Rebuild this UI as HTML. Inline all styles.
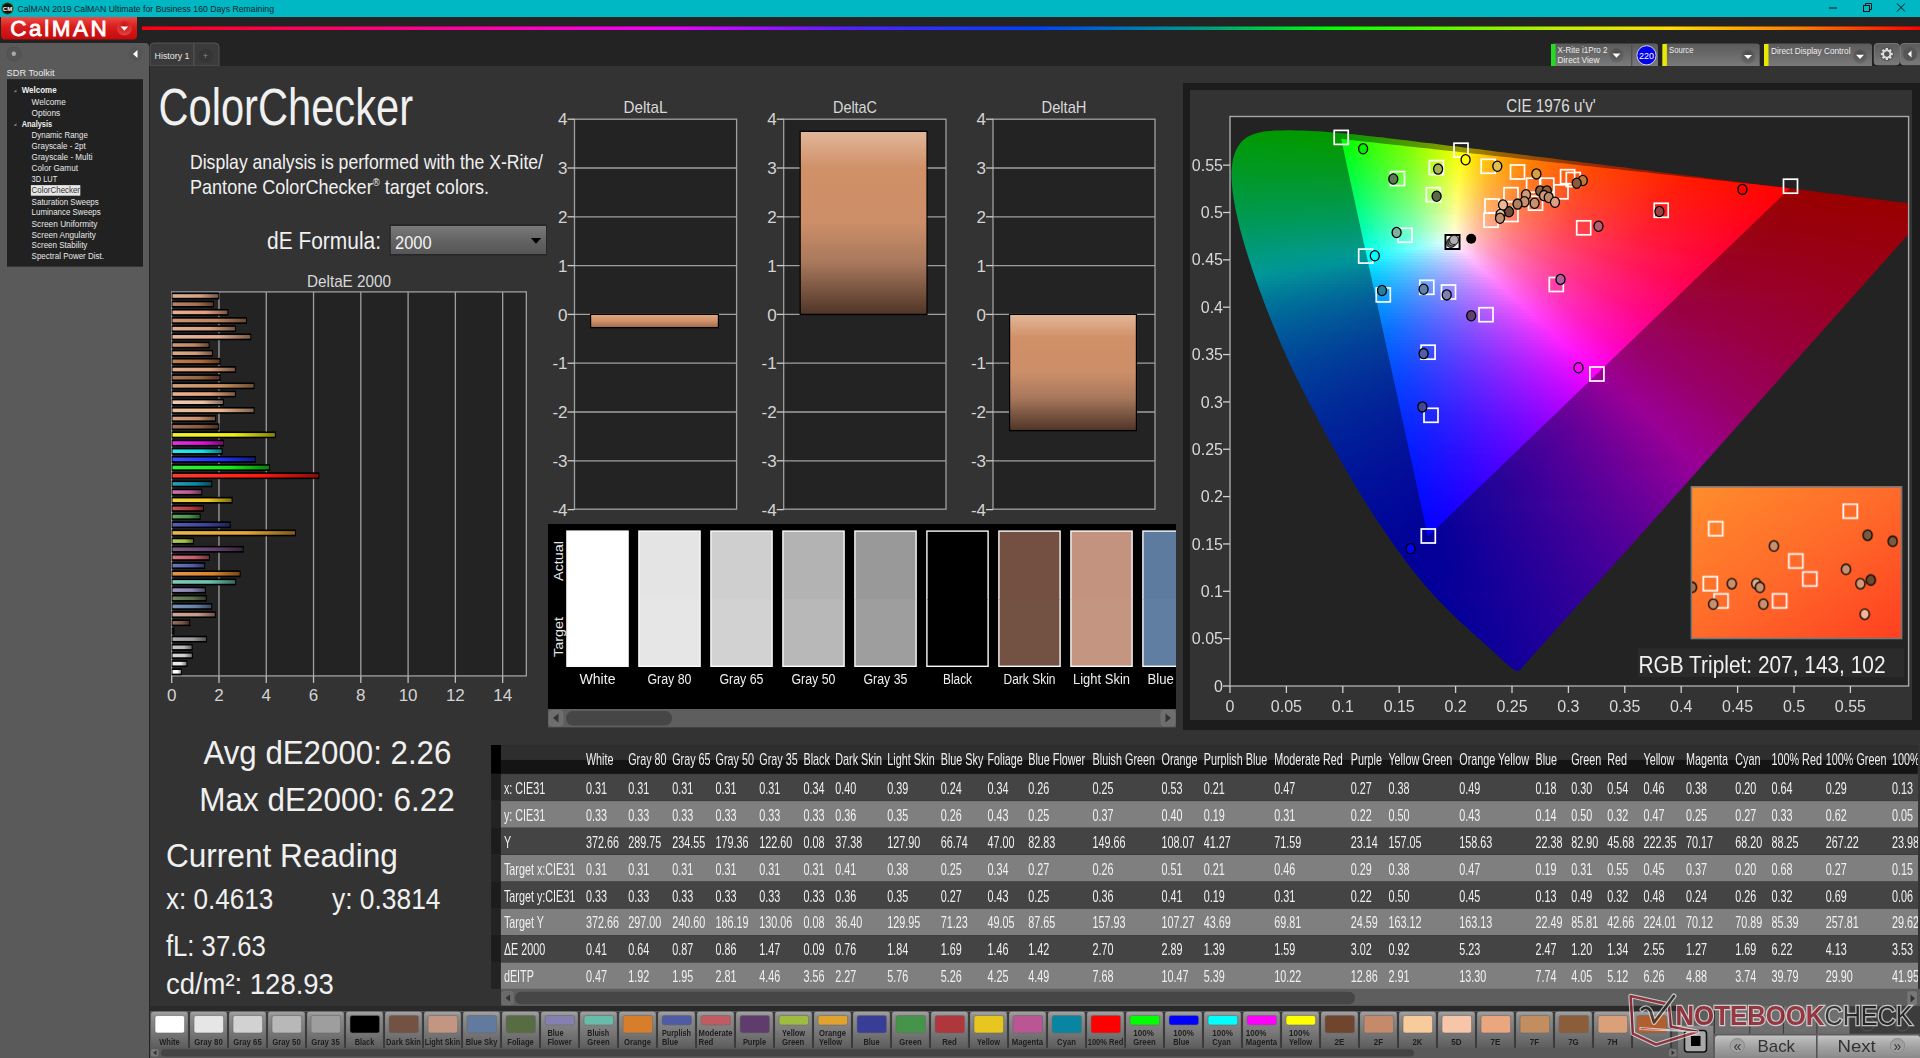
<!DOCTYPE html>
<html><head><meta charset="utf-8"><style>
html,body{margin:0;padding:0;background:#232323;overflow:hidden;width:1920px;height:1058px}
svg{display:block;font-family:"Liberation Sans", sans-serif;transform:translateZ(0)}
</style></head><body>
<svg width="1920" height="1058" viewBox="0 0 1920 1058"><defs><linearGradient id="gRed" x1="0" y1="0" x2="0" y2="1"><stop offset="0" stop-color="#ee4a44"/><stop offset="0.45" stop-color="#d81c1c"/><stop offset="1" stop-color="#c40a0a"/></linearGradient><radialGradient id="gRedBtn" cx="0.5" cy="0.35" r="0.6"><stop offset="0" stop-color="#c81010"/><stop offset="1" stop-color="#e04040"/></radialGradient><linearGradient id="gRain" x1="142" y1="0" x2="1920" y2="0" gradientUnits="userSpaceOnUse"><stop offset="0" stop-color="#ff0010"/><stop offset="0.22" stop-color="#ff00c0"/><stop offset="0.3" stop-color="#ee00ff"/><stop offset="0.4" stop-color="#5020ff"/><stop offset="0.5" stop-color="#0040ff"/><stop offset="0.6" stop-color="#00a080"/><stop offset="0.67" stop-color="#00ff00"/><stop offset="0.8" stop-color="#c0ee00"/><stop offset="0.86" stop-color="#ffdd00"/><stop offset="0.93" stop-color="#ff8000"/><stop offset="1" stop-color="#ff0000"/></linearGradient><linearGradient id="gTool" x1="0" y1="0" x2="0" y2="1"><stop offset="0" stop-color="#5a5a5a"/><stop offset="1" stop-color="#7a7a7a"/></linearGradient><radialGradient id="gDD" cx="0.5" cy="0.3" r="0.7"><stop offset="0" stop-color="#4a4a4a"/><stop offset="1" stop-color="#6a6a6a"/></radialGradient><linearGradient id="gDrop" x1="0" y1="0" x2="0" y2="1"><stop offset="0" stop-color="#7a7a7a"/><stop offset="0.5" stop-color="#646464"/><stop offset="1" stop-color="#565656"/></linearGradient><linearGradient id="gb0" x1="0" y1="0" x2="1" y2="0"><stop offset="0" stop-color="#ffffff"/><stop offset="0.6" stop-color="#ffffff"/><stop offset="1" stop-color="#8c8c8c"/></linearGradient><linearGradient id="gb1" x1="0" y1="0" x2="1" y2="0"><stop offset="0" stop-color="#e9e9e9"/><stop offset="0.6" stop-color="#e6e6e6"/><stop offset="1" stop-color="#7e7e7e"/></linearGradient><linearGradient id="gb2" x1="0" y1="0" x2="1" y2="0"><stop offset="0" stop-color="#d7d7d7"/><stop offset="0.6" stop-color="#d0d0d0"/><stop offset="1" stop-color="#727272"/></linearGradient><linearGradient id="gb3" x1="0" y1="0" x2="1" y2="0"><stop offset="0" stop-color="#c2c2c2"/><stop offset="0.6" stop-color="#b8b8b8"/><stop offset="1" stop-color="#656565"/></linearGradient><linearGradient id="gb4" x1="0" y1="0" x2="1" y2="0"><stop offset="0" stop-color="#aaaaaa"/><stop offset="0.6" stop-color="#9c9c9c"/><stop offset="1" stop-color="#555555"/></linearGradient><linearGradient id="gb5" x1="0" y1="0" x2="1" y2="0"><stop offset="0" stop-color="#343434"/><stop offset="0.6" stop-color="#111111"/><stop offset="1" stop-color="#090909"/></linearGradient><linearGradient id="gb6" x1="0" y1="0" x2="1" y2="0"><stop offset="0" stop-color="#8d6f61"/><stop offset="0.6" stop-color="#7a5646"/><stop offset="1" stop-color="#432f26"/></linearGradient><linearGradient id="gb7" x1="0" y1="0" x2="1" y2="0"><stop offset="0" stop-color="#cea998"/><stop offset="0.6" stop-color="#c69a86"/><stop offset="1" stop-color="#6c5449"/></linearGradient><linearGradient id="gb8" x1="0" y1="0" x2="1" y2="0"><stop offset="0" stop-color="#7c94b3"/><stop offset="0.6" stop-color="#6582a6"/><stop offset="1" stop-color="#37475b"/></linearGradient><linearGradient id="gb9" x1="0" y1="0" x2="1" y2="0"><stop offset="0" stop-color="#728560"/><stop offset="0.6" stop-color="#5a7045"/><stop offset="1" stop-color="#313d25"/></linearGradient><linearGradient id="gb10" x1="0" y1="0" x2="1" y2="0"><stop offset="0" stop-color="#9b98c0"/><stop offset="0.6" stop-color="#8a86b6"/><stop offset="1" stop-color="#4b4964"/></linearGradient><linearGradient id="gb11" x1="0" y1="0" x2="1" y2="0"><stop offset="0" stop-color="#80cbba"/><stop offset="0.6" stop-color="#6ac2ae"/><stop offset="1" stop-color="#3a6a5f"/></linearGradient><linearGradient id="gb12" x1="0" y1="0" x2="1" y2="0"><stop offset="0" stop-color="#e1964d"/><stop offset="0.6" stop-color="#dc842e"/><stop offset="1" stop-color="#794819"/></linearGradient><linearGradient id="gb13" x1="0" y1="0" x2="1" y2="0"><stop offset="0" stop-color="#6d77b8"/><stop offset="0.6" stop-color="#5460ac"/><stop offset="1" stop-color="#2e345e"/></linearGradient><linearGradient id="gb14" x1="0" y1="0" x2="1" y2="0"><stop offset="0" stop-color="#ce767e"/><stop offset="0.6" stop-color="#c65e68"/><stop offset="1" stop-color="#6c3339"/></linearGradient><linearGradient id="gb15" x1="0" y1="0" x2="1" y2="0"><stop offset="0" stop-color="#7b5c84"/><stop offset="0.6" stop-color="#64406f"/><stop offset="1" stop-color="#37233d"/></linearGradient><linearGradient id="gb16" x1="0" y1="0" x2="1" y2="0"><stop offset="0" stop-color="#afcb60"/><stop offset="0.6" stop-color="#a2c244"/><stop offset="1" stop-color="#596a25"/></linearGradient><linearGradient id="gb17" x1="0" y1="0" x2="1" y2="0"><stop offset="0" stop-color="#e8b550"/><stop offset="0.6" stop-color="#e4a832"/><stop offset="1" stop-color="#7d5c1b"/></linearGradient><linearGradient id="gb18" x1="0" y1="0" x2="1" y2="0"><stop offset="0" stop-color="#575eae"/><stop offset="0.6" stop-color="#3a42a0"/><stop offset="1" stop-color="#1f2458"/></linearGradient><linearGradient id="gb19" x1="0" y1="0" x2="1" y2="0"><stop offset="0" stop-color="#63a766"/><stop offset="0.6" stop-color="#48984c"/><stop offset="1" stop-color="#275329"/></linearGradient><linearGradient id="gb20" x1="0" y1="0" x2="1" y2="0"><stop offset="0" stop-color="#bf575c"/><stop offset="0.6" stop-color="#b43a40"/><stop offset="1" stop-color="#631f23"/></linearGradient><linearGradient id="gb21" x1="0" y1="0" x2="1" y2="0"><stop offset="0" stop-color="#eed143"/><stop offset="0.6" stop-color="#ecca22"/><stop offset="1" stop-color="#816f12"/></linearGradient><linearGradient id="gb22" x1="0" y1="0" x2="1" y2="0"><stop offset="0" stop-color="#c974a9"/><stop offset="0.6" stop-color="#c05c9a"/><stop offset="1" stop-color="#693254"/></linearGradient><linearGradient id="gb23" x1="0" y1="0" x2="1" y2="0"><stop offset="0" stop-color="#2e9bb3"/><stop offset="0.6" stop-color="#0a8aa6"/><stop offset="1" stop-color="#054b5b"/></linearGradient><linearGradient id="gb24" x1="0" y1="0" x2="1" y2="0"><stop offset="0" stop-color="#ff3c33"/><stop offset="0.6" stop-color="#ff1a10"/><stop offset="1" stop-color="#8c0e08"/></linearGradient><linearGradient id="gb25" x1="0" y1="0" x2="1" y2="0"><stop offset="0" stop-color="#33f033"/><stop offset="0.6" stop-color="#10ee10"/><stop offset="1" stop-color="#088208"/></linearGradient><linearGradient id="gb26" x1="0" y1="0" x2="1" y2="0"><stop offset="0" stop-color="#414fff"/><stop offset="0.6" stop-color="#2030ff"/><stop offset="1" stop-color="#111a8c"/></linearGradient><linearGradient id="gb27" x1="0" y1="0" x2="1" y2="0"><stop offset="0" stop-color="#33e4eb"/><stop offset="0.6" stop-color="#10e0e8"/><stop offset="1" stop-color="#087b7f"/></linearGradient><linearGradient id="gb28" x1="0" y1="0" x2="1" y2="0"><stop offset="0" stop-color="#e433e4"/><stop offset="0.6" stop-color="#e010e0"/><stop offset="1" stop-color="#7b087b"/></linearGradient><linearGradient id="gb29" x1="0" y1="0" x2="1" y2="0"><stop offset="0" stop-color="#f2f233"/><stop offset="0.6" stop-color="#f0f010"/><stop offset="1" stop-color="#848408"/></linearGradient><linearGradient id="gb30" x1="0" y1="0" x2="1" y2="0"><stop offset="0" stop-color="#9b7259"/><stop offset="0.6" stop-color="#8a5a3c"/><stop offset="1" stop-color="#4b3121"/></linearGradient><linearGradient id="gb31" x1="0" y1="0" x2="1" y2="0"><stop offset="0" stop-color="#d3a085"/><stop offset="0.6" stop-color="#cc9070"/><stop offset="1" stop-color="#704f3d"/></linearGradient><linearGradient id="gb32" x1="0" y1="0" x2="1" y2="0"><stop offset="0" stop-color="#ebbf9d"/><stop offset="0.6" stop-color="#e8b48c"/><stop offset="1" stop-color="#7f634d"/></linearGradient><linearGradient id="gb33" x1="0" y1="0" x2="1" y2="0"><stop offset="0" stop-color="#eec9b1"/><stop offset="0.6" stop-color="#ecc0a4"/><stop offset="1" stop-color="#81695a"/></linearGradient><linearGradient id="gb34" x1="0" y1="0" x2="1" y2="0"><stop offset="0" stop-color="#ebb18f"/><stop offset="0.6" stop-color="#e8a47c"/><stop offset="1" stop-color="#7f5a44"/></linearGradient><linearGradient id="gb35" x1="0" y1="0" x2="1" y2="0"><stop offset="0" stop-color="#d0a077"/><stop offset="0.6" stop-color="#c89060"/><stop offset="1" stop-color="#6e4f34"/></linearGradient><linearGradient id="gb36" x1="0" y1="0" x2="1" y2="0"><stop offset="0" stop-color="#a4795c"/><stop offset="0.6" stop-color="#946240"/><stop offset="1" stop-color="#513523"/></linearGradient><linearGradient id="gb37" x1="0" y1="0" x2="1" y2="0"><stop offset="0" stop-color="#e1ae8d"/><stop offset="0.6" stop-color="#dca07a"/><stop offset="1" stop-color="#795843"/></linearGradient><linearGradient id="gb38" x1="0" y1="0" x2="1" y2="0"><stop offset="0" stop-color="#bb8055"/><stop offset="0.6" stop-color="#b06a38"/><stop offset="1" stop-color="#603a1e"/></linearGradient><linearGradient id="gb39" x1="0" y1="0" x2="1" y2="0"><stop offset="0" stop-color="#daa98c"/><stop offset="0.6" stop-color="#d49a78"/><stop offset="1" stop-color="#745442"/></linearGradient><linearGradient id="gb40" x1="0" y1="0" x2="1" y2="0"><stop offset="0" stop-color="#cc9977"/><stop offset="0.6" stop-color="#c48860"/><stop offset="1" stop-color="#6b4a34"/></linearGradient><linearGradient id="gb41" x1="0" y1="0" x2="1" y2="0"><stop offset="0" stop-color="#e4b599"/><stop offset="0.6" stop-color="#e0a888"/><stop offset="1" stop-color="#7b5c4a"/></linearGradient><linearGradient id="gb42" x1="0" y1="0" x2="1" y2="0"><stop offset="0" stop-color="#ddae93"/><stop offset="0.6" stop-color="#d8a080"/><stop offset="1" stop-color="#765846"/></linearGradient><linearGradient id="gb43" x1="0" y1="0" x2="1" y2="0"><stop offset="0" stop-color="#c99677"/><stop offset="0.6" stop-color="#c08460"/><stop offset="1" stop-color="#694834"/></linearGradient><linearGradient id="gb44" x1="0" y1="0" x2="1" y2="0"><stop offset="0" stop-color="#e8ae93"/><stop offset="0.6" stop-color="#e4a080"/><stop offset="1" stop-color="#7d5846"/></linearGradient><linearGradient id="gb45" x1="0" y1="0" x2="1" y2="0"><stop offset="0" stop-color="#b5856a"/><stop offset="0.6" stop-color="#a87050"/><stop offset="1" stop-color="#5c3d2c"/></linearGradient><linearGradient id="gb46" x1="0" y1="0" x2="1" y2="0"><stop offset="0" stop-color="#ddae93"/><stop offset="0.6" stop-color="#d8a080"/><stop offset="1" stop-color="#765846"/></linearGradient><linearGradient id="gSkinBar" x1="0" y1="0" x2="0" y2="1"><stop offset="0" stop-color="#e2b698"/><stop offset="0.2" stop-color="#d09068"/><stop offset="0.5" stop-color="#cc8e68"/><stop offset="0.72" stop-color="#a8785c"/><stop offset="1" stop-color="#503628"/></linearGradient><linearGradient id="gSkinBarS" x1="0" y1="0" x2="0" y2="1"><stop offset="0" stop-color="#e0a880"/><stop offset="0.5" stop-color="#d09068"/><stop offset="1" stop-color="#a06e50"/></linearGradient><clipPath id="cpHS"><path d="M1519.7 670.3 L1519.6 670.3 L1519.5 670.4 L1519.4 670.5 L1519.2 670.6 L1519.1 670.7 L1518.9 670.8 L1518.7 670.9 L1518.4 670.9 L1518.2 671.0 L1517.9 671.0 L1517.5 671.0 L1517.1 670.9 L1516.7 670.9 L1516.1 670.8 L1515.5 670.6 L1514.5 670.0 L1513.2 669.1 L1511.7 668.0 L1509.9 666.5 L1507.6 664.6 L1504.7 662.0 L1501.3 658.9 L1497.8 655.7 L1494.7 652.8 L1492.3 650.6 L1490.1 648.7 L1488.0 646.8 L1485.6 644.6 L1482.9 642.2 L1480.0 639.6 L1476.9 636.9 L1473.7 634.0 L1470.4 631.0 L1466.9 627.8 L1463.2 624.5 L1459.4 620.9 L1455.3 617.0 L1451.0 612.8 L1446.5 608.4 L1441.7 603.5 L1436.9 598.4 L1431.8 593.0 L1426.4 587.0 L1420.6 580.0 L1414.2 572.0 L1407.3 563.2 L1400.1 553.5 L1392.5 543.0 L1384.7 531.6 L1376.4 519.4 L1368.0 506.3 L1359.4 492.5 L1350.5 477.7 L1341.5 462.1 L1332.4 445.9 L1323.4 429.5 L1314.5 412.8 L1305.6 395.7 L1296.9 378.4 L1288.8 361.5 L1281.3 344.7 L1274.3 328.0 L1267.7 311.7 L1261.8 296.1 L1256.4 281.3 L1251.5 267.1 L1247.2 253.6 L1243.4 241.1 L1240.2 229.5 L1237.7 218.9 L1235.6 209.2 L1233.9 200.1 L1232.7 191.9 L1232.0 184.5 L1231.6 177.8 L1231.6 171.6 L1232.0 165.9 L1232.7 160.8 L1233.8 156.2 L1235.2 152.0 L1237.0 148.3 L1239.0 145.0 L1241.3 142.1 L1243.9 139.6 L1246.6 137.5 L1249.6 135.8 L1252.8 134.4 L1256.1 133.3 L1259.5 132.4 L1263.1 131.7 L1266.8 131.3 L1270.6 130.9 L1274.5 130.6 L1278.4 130.5 L1282.5 130.4 L1286.5 130.3 L1290.5 130.3 L1294.5 130.4 L1298.5 130.4 L1302.6 130.6 L1306.7 130.7 L1310.8 130.9 L1315.1 131.2 L1319.4 131.4 L1323.8 131.7 L1328.2 132.1 L1332.8 132.4 L1337.5 132.8 L1342.2 133.3 L1347.1 133.8 L1352.0 134.3 L1357.1 134.8 L1362.3 135.3 L1367.7 135.9 L1373.1 136.5 L1378.7 137.2 L1384.5 137.8 L1390.4 138.5 L1396.5 139.2 L1402.7 140.0 L1409.1 140.7 L1415.6 141.5 L1422.3 142.4 L1429.2 143.2 L1436.3 144.1 L1443.5 145.0 L1450.9 145.9 L1458.5 146.8 L1466.3 147.8 L1474.3 148.8 L1482.4 149.8 L1490.8 150.8 L1499.3 151.9 L1508.0 153.0 L1516.9 154.1 L1525.9 155.3 L1535.2 156.4 L1544.6 157.6 L1554.1 158.8 L1563.8 160.0 L1573.7 161.3 L1583.7 162.5 L1593.8 163.8 L1604.0 165.0 L1614.2 166.3 L1624.6 167.6 L1634.9 168.9 L1645.2 170.2 L1654.4 171.4 L1663.1 172.5 L1672.8 173.7 L1685.1 175.3 L1701.6 177.3 L1721.1 179.7 L1741.1 182.2 L1759.2 184.5 L1775.2 186.5 L1790.1 188.4 L1804.0 190.1 L1816.9 191.8 L1828.5 193.2 L1839.0 194.5 L1848.7 195.8 L1857.7 196.9 L1866.2 198.0 L1874.0 198.9 L1881.2 199.8 L1887.7 200.7 L1893.5 201.4 L1898.7 202.0 L1903.2 202.6 L1907.4 203.1 L1910.9 203.5 L1913.8 203.9 L1916.4 204.2 L1919.1 204.6 L1921.9 204.9 L1924.6 205.3 L1927.2 205.6 L1929.2 205.9 L1930.8 206.0 L1931.9 206.2 L1932.6 206.3 L1933.2 206.4 Z"/></clipPath><clipPath id="cpPlot"><rect x="1230.0" y="116.5" width="678.5999999999999" height="569.5"/></clipPath><clipPath id="cpTri"><path d="M1341.2 138.9 L1789.9 188.3 L1427.9 536.5 Z"/></clipPath><linearGradient id="o0" gradientUnits="userSpaceOnUse" x1="1261" y1="0" x2="1325" y2="0"><stop offset="0.000" stop-color="#009900"/><stop offset="1.000" stop-color="#009900"/></linearGradient><linearGradient id="o1" gradientUnits="userSpaceOnUse" x1="1249" y1="0" x2="1359" y2="0"><stop offset="0.000" stop-color="#009903"/><stop offset="0.845" stop-color="#029900"/><stop offset="1.000" stop-color="#139900"/></linearGradient><linearGradient id="o2" gradientUnits="userSpaceOnUse" x1="1243" y1="0" x2="1386" y2="0"><stop offset="0.000" stop-color="#009906"/><stop offset="0.692" stop-color="#019900"/><stop offset="1.000" stop-color="#309900"/></linearGradient><linearGradient id="o3" gradientUnits="userSpaceOnUse" x1="1239" y1="0" x2="1411" y2="0"><stop offset="0.000" stop-color="#009908"/><stop offset="0.610" stop-color="#039900"/><stop offset="1.000" stop-color="#4e9900"/></linearGradient><linearGradient id="o4" gradientUnits="userSpaceOnUse" x1="1237" y1="0" x2="1436" y2="0"><stop offset="0.000" stop-color="#00990b"/><stop offset="0.543" stop-color="#039902"/><stop offset="0.935" stop-color="#5e9900"/><stop offset="1.000" stop-color="#709900"/></linearGradient><linearGradient id="o5" gradientUnits="userSpaceOnUse" x1="1235" y1="0" x2="1460" y2="0"><stop offset="0.000" stop-color="#00990e"/><stop offset="0.493" stop-color="#039905"/><stop offset="0.840" stop-color="#5f9900"/><stop offset="1.000" stop-color="#969900"/></linearGradient><linearGradient id="o6" gradientUnits="userSpaceOnUse" x1="1233" y1="0" x2="1484" y2="0"><stop offset="0.000" stop-color="#009910"/><stop offset="0.454" stop-color="#049908"/><stop offset="0.753" stop-color="#5c9900"/><stop offset="0.908" stop-color="#989900"/><stop offset="1.000" stop-color="#997900"/></linearGradient><linearGradient id="o7" gradientUnits="userSpaceOnUse" x1="1232" y1="0" x2="1508" y2="0"><stop offset="0.000" stop-color="#009913"/><stop offset="0.413" stop-color="#02990b"/><stop offset="0.685" stop-color="#5b9903"/><stop offset="0.837" stop-color="#999600"/><stop offset="0.989" stop-color="#996200"/><stop offset="1.000" stop-color="#995f00"/></linearGradient><linearGradient id="o8" gradientUnits="userSpaceOnUse" x1="1231" y1="0" x2="1532" y2="0"><stop offset="0.000" stop-color="#009915"/><stop offset="0.389" stop-color="#04990e"/><stop offset="0.638" stop-color="#5e9906"/><stop offset="0.767" stop-color="#999702"/><stop offset="0.907" stop-color="#996200"/><stop offset="1.000" stop-color="#994c00"/></linearGradient><linearGradient id="o9" gradientUnits="userSpaceOnUse" x1="1230" y1="0" x2="1556" y2="0"><stop offset="0.000" stop-color="#009918"/><stop offset="0.359" stop-color="#029911"/><stop offset="0.589" stop-color="#5c990a"/><stop offset="0.709" stop-color="#999806"/><stop offset="0.828" stop-color="#996600"/><stop offset="1.000" stop-color="#993e00"/></linearGradient><linearGradient id="o10" gradientUnits="userSpaceOnUse" x1="1229" y1="0" x2="1580" y2="0"><stop offset="0.000" stop-color="#00991a"/><stop offset="0.342" stop-color="#039914"/><stop offset="0.556" stop-color="#5f990e"/><stop offset="0.658" stop-color="#99990a"/><stop offset="0.778" stop-color="#996303"/><stop offset="0.966" stop-color="#993700"/><stop offset="1.000" stop-color="#993200"/></linearGradient><linearGradient id="o11" gradientUnits="userSpaceOnUse" x1="1229" y1="0" x2="1604" y2="0"><stop offset="0.000" stop-color="#00991d"/><stop offset="0.320" stop-color="#039917"/><stop offset="0.512" stop-color="#5b9912"/><stop offset="0.616" stop-color="#99990e"/><stop offset="0.720" stop-color="#996506"/><stop offset="0.888" stop-color="#993a00"/><stop offset="1.000" stop-color="#992800"/></linearGradient><linearGradient id="o12" gradientUnits="userSpaceOnUse" x1="1228" y1="0" x2="1628" y2="0"><stop offset="0.000" stop-color="#00991f"/><stop offset="0.307" stop-color="#04991a"/><stop offset="0.487" stop-color="#5d9915"/><stop offset="0.585" stop-color="#999511"/><stop offset="0.682" stop-color="#996309"/><stop offset="0.848" stop-color="#993701"/><stop offset="1.000" stop-color="#992000"/></linearGradient><linearGradient id="o13" gradientUnits="userSpaceOnUse" x1="1228" y1="0" x2="1651" y2="0"><stop offset="0.000" stop-color="#009922"/><stop offset="0.291" stop-color="#03991d"/><stop offset="0.461" stop-color="#5d9919"/><stop offset="0.546" stop-color="#989916"/><stop offset="0.645" stop-color="#99620c"/><stop offset="0.801" stop-color="#993603"/><stop offset="1.000" stop-color="#991a00"/></linearGradient><linearGradient id="o14" gradientUnits="userSpaceOnUse" x1="1228" y1="0" x2="1675" y2="0"><stop offset="0.000" stop-color="#009925"/><stop offset="0.275" stop-color="#039920"/><stop offset="0.436" stop-color="#5d991d"/><stop offset="0.517" stop-color="#99991a"/><stop offset="0.604" stop-color="#99650f"/><stop offset="0.745" stop-color="#993806"/><stop offset="1.000" stop-color="#991400"/></linearGradient><linearGradient id="o15" gradientUnits="userSpaceOnUse" x1="1228" y1="0" x2="1699" y2="0"><stop offset="0.000" stop-color="#009927"/><stop offset="0.261" stop-color="#029924"/><stop offset="0.414" stop-color="#5d9921"/><stop offset="0.490" stop-color="#99991f"/><stop offset="0.573" stop-color="#996412"/><stop offset="0.707" stop-color="#993808"/><stop offset="0.949" stop-color="#991300"/><stop offset="1.000" stop-color="#990f00"/></linearGradient><linearGradient id="o16" gradientUnits="userSpaceOnUse" x1="1228" y1="0" x2="1723" y2="0"><stop offset="0.000" stop-color="#00992a"/><stop offset="0.248" stop-color="#019927"/><stop offset="0.394" stop-color="#5d9925"/><stop offset="0.467" stop-color="#999923"/><stop offset="0.539" stop-color="#996716"/><stop offset="0.661" stop-color="#993a0b"/><stop offset="0.879" stop-color="#991502"/><stop offset="1.000" stop-color="#990a00"/></linearGradient><linearGradient id="o17" gradientUnits="userSpaceOnUse" x1="1228" y1="0" x2="1747" y2="0"><stop offset="0.000" stop-color="#00992d"/><stop offset="0.243" stop-color="#04992b"/><stop offset="0.376" stop-color="#5d9929"/><stop offset="0.445" stop-color="#999827"/><stop offset="0.514" stop-color="#99661a"/><stop offset="0.630" stop-color="#993a0d"/><stop offset="0.838" stop-color="#991503"/><stop offset="1.000" stop-color="#990600"/></linearGradient><linearGradient id="o18" gradientUnits="userSpaceOnUse" x1="1228" y1="0" x2="1771" y2="0"><stop offset="0.000" stop-color="#00992f"/><stop offset="0.232" stop-color="#03992e"/><stop offset="0.359" stop-color="#5d992d"/><stop offset="0.425" stop-color="#99982c"/><stop offset="0.492" stop-color="#99651d"/><stop offset="0.602" stop-color="#99390f"/><stop offset="0.801" stop-color="#991504"/><stop offset="1.000" stop-color="#990300"/></linearGradient><linearGradient id="o19" gradientUnits="userSpaceOnUse" x1="1228" y1="0" x2="1795" y2="0"><stop offset="0.000" stop-color="#009932"/><stop offset="0.222" stop-color="#039932"/><stop offset="0.344" stop-color="#5d9931"/><stop offset="0.407" stop-color="#999730"/><stop offset="0.471" stop-color="#996520"/><stop offset="0.577" stop-color="#993912"/><stop offset="0.767" stop-color="#991406"/><stop offset="1.000" stop-color="#990000"/></linearGradient><linearGradient id="o20" gradientUnits="userSpaceOnUse" x1="1229" y1="0" x2="1819" y2="0"><stop offset="0.000" stop-color="#009935"/><stop offset="0.214" stop-color="#039935"/><stop offset="0.331" stop-color="#5e9935"/><stop offset="0.392" stop-color="#999534"/><stop offset="0.453" stop-color="#996323"/><stop offset="0.554" stop-color="#993814"/><stop offset="0.742" stop-color="#991307"/><stop offset="1.000" stop-color="#990000"/></linearGradient><linearGradient id="o21" gradientUnits="userSpaceOnUse" x1="1229" y1="0" x2="1843" y2="0"><stop offset="0.000" stop-color="#009938"/><stop offset="0.205" stop-color="#029939"/><stop offset="0.313" stop-color="#5a993a"/><stop offset="0.371" stop-color="#98993a"/><stop offset="0.435" stop-color="#996326"/><stop offset="0.533" stop-color="#993716"/><stop offset="0.713" stop-color="#991208"/><stop offset="0.958" stop-color="#990000"/><stop offset="1.000" stop-color="#990000"/></linearGradient><linearGradient id="o22" gradientUnits="userSpaceOnUse" x1="1230" y1="0" x2="1867" y2="0"><stop offset="0.000" stop-color="#00993b"/><stop offset="0.198" stop-color="#03993d"/><stop offset="0.301" stop-color="#5b993e"/><stop offset="0.358" stop-color="#99973f"/><stop offset="0.414" stop-color="#99642a"/><stop offset="0.509" stop-color="#993819"/><stop offset="0.678" stop-color="#99130a"/><stop offset="0.914" stop-color="#990002"/><stop offset="1.000" stop-color="#990000"/></linearGradient><linearGradient id="o23" gradientUnits="userSpaceOnUse" x1="1230" y1="0" x2="1891" y2="0"><stop offset="0.000" stop-color="#00993d"/><stop offset="0.191" stop-color="#029940"/><stop offset="0.290" stop-color="#5b9943"/><stop offset="0.345" stop-color="#999743"/><stop offset="0.399" stop-color="#99642e"/><stop offset="0.490" stop-color="#99371b"/><stop offset="0.654" stop-color="#99130c"/><stop offset="0.876" stop-color="#990003"/><stop offset="1.000" stop-color="#990000"/></linearGradient><linearGradient id="o24" gradientUnits="userSpaceOnUse" x1="1230" y1="0" x2="1912" y2="0"><stop offset="0.000" stop-color="#009940"/><stop offset="0.185" stop-color="#019944"/><stop offset="0.282" stop-color="#5b9947"/><stop offset="0.334" stop-color="#999648"/><stop offset="0.387" stop-color="#996331"/><stop offset="0.475" stop-color="#99361d"/><stop offset="0.633" stop-color="#99120d"/><stop offset="0.845" stop-color="#990004"/><stop offset="1.000" stop-color="#990000"/></linearGradient><linearGradient id="o25" gradientUnits="userSpaceOnUse" x1="1231" y1="0" x2="1912" y2="0"><stop offset="0.000" stop-color="#009943"/><stop offset="0.185" stop-color="#029948"/><stop offset="0.282" stop-color="#5d994c"/><stop offset="0.330" stop-color="#98994e"/><stop offset="0.383" stop-color="#996436"/><stop offset="0.467" stop-color="#993821"/><stop offset="0.621" stop-color="#991310"/><stop offset="0.837" stop-color="#990005"/><stop offset="1.000" stop-color="#990001"/></linearGradient><linearGradient id="o26" gradientUnits="userSpaceOnUse" x1="1231" y1="0" x2="1912" y2="0"><stop offset="0.000" stop-color="#009946"/><stop offset="0.185" stop-color="#01994c"/><stop offset="0.282" stop-color="#5c9951"/><stop offset="0.330" stop-color="#999954"/><stop offset="0.383" stop-color="#996439"/><stop offset="0.467" stop-color="#993824"/><stop offset="0.621" stop-color="#991311"/><stop offset="0.833" stop-color="#990006"/><stop offset="1.000" stop-color="#990002"/></linearGradient><linearGradient id="o27" gradientUnits="userSpaceOnUse" x1="1232" y1="0" x2="1912" y2="0"><stop offset="0.000" stop-color="#009949"/><stop offset="0.185" stop-color="#019950"/><stop offset="0.278" stop-color="#599955"/><stop offset="0.331" stop-color="#999758"/><stop offset="0.379" stop-color="#99653e"/><stop offset="0.463" stop-color="#993827"/><stop offset="0.613" stop-color="#991413"/><stop offset="0.825" stop-color="#990008"/><stop offset="1.000" stop-color="#990002"/></linearGradient><linearGradient id="o28" gradientUnits="userSpaceOnUse" x1="1233" y1="0" x2="1912" y2="0"><stop offset="0.000" stop-color="#00994d"/><stop offset="0.186" stop-color="#029954"/><stop offset="0.278" stop-color="#5b995a"/><stop offset="0.327" stop-color="#98995e"/><stop offset="0.380" stop-color="#996441"/><stop offset="0.464" stop-color="#993729"/><stop offset="0.614" stop-color="#991315"/><stop offset="0.822" stop-color="#990009"/><stop offset="1.000" stop-color="#990003"/></linearGradient><linearGradient id="o29" gradientUnits="userSpaceOnUse" x1="1233" y1="0" x2="1912" y2="0"><stop offset="0.000" stop-color="#009950"/><stop offset="0.186" stop-color="#019959"/><stop offset="0.278" stop-color="#5b995f"/><stop offset="0.327" stop-color="#989964"/><stop offset="0.380" stop-color="#996345"/><stop offset="0.464" stop-color="#99372b"/><stop offset="0.614" stop-color="#991216"/><stop offset="0.817" stop-color="#99000a"/><stop offset="1.000" stop-color="#990004"/></linearGradient><linearGradient id="o30" gradientUnits="userSpaceOnUse" x1="1234" y1="0" x2="1912" y2="0"><stop offset="0.000" stop-color="#009953"/><stop offset="0.186" stop-color="#01995d"/><stop offset="0.279" stop-color="#5c9965"/><stop offset="0.327" stop-color="#999769"/><stop offset="0.376" stop-color="#99654a"/><stop offset="0.456" stop-color="#99392f"/><stop offset="0.602" stop-color="#991419"/><stop offset="0.810" stop-color="#99000b"/><stop offset="1.000" stop-color="#990005"/></linearGradient><linearGradient id="o31" gradientUnits="userSpaceOnUse" x1="1235" y1="0" x2="1912" y2="0"><stop offset="0.000" stop-color="#009956"/><stop offset="0.186" stop-color="#029961"/><stop offset="0.275" stop-color="#599969"/><stop offset="0.323" stop-color="#97996f"/><stop offset="0.377" stop-color="#99634d"/><stop offset="0.456" stop-color="#993832"/><stop offset="0.603" stop-color="#99131b"/><stop offset="0.806" stop-color="#99000c"/><stop offset="1.000" stop-color="#990006"/></linearGradient><linearGradient id="o32" gradientUnits="userSpaceOnUse" x1="1235" y1="0" x2="1912" y2="0"><stop offset="0.000" stop-color="#009959"/><stop offset="0.186" stop-color="#019966"/><stop offset="0.275" stop-color="#59996f"/><stop offset="0.323" stop-color="#989975"/><stop offset="0.377" stop-color="#996251"/><stop offset="0.456" stop-color="#993734"/><stop offset="0.603" stop-color="#99131c"/><stop offset="0.802" stop-color="#99000e"/><stop offset="1.000" stop-color="#990006"/></linearGradient><linearGradient id="o33" gradientUnits="userSpaceOnUse" x1="1236" y1="0" x2="1912" y2="0"><stop offset="0.000" stop-color="#00995d"/><stop offset="0.186" stop-color="#02996a"/><stop offset="0.275" stop-color="#5a9974"/><stop offset="0.324" stop-color="#99987a"/><stop offset="0.373" stop-color="#996456"/><stop offset="0.453" stop-color="#993738"/><stop offset="0.599" stop-color="#99131e"/><stop offset="0.799" stop-color="#99000f"/><stop offset="1.000" stop-color="#990007"/></linearGradient><linearGradient id="o34" gradientUnits="userSpaceOnUse" x1="1237" y1="0" x2="1912" y2="0"><stop offset="0.000" stop-color="#009960"/><stop offset="0.187" stop-color="#02996f"/><stop offset="0.276" stop-color="#5c997a"/><stop offset="0.324" stop-color="#99957f"/><stop offset="0.373" stop-color="#99625a"/><stop offset="0.453" stop-color="#99363a"/><stop offset="0.600" stop-color="#991220"/><stop offset="0.796" stop-color="#990010"/><stop offset="1.000" stop-color="#990008"/></linearGradient><linearGradient id="o35" gradientUnits="userSpaceOnUse" x1="1238" y1="0" x2="1912" y2="0"><stop offset="0.000" stop-color="#009964"/><stop offset="0.187" stop-color="#029974"/><stop offset="0.276" stop-color="#5e9980"/><stop offset="0.320" stop-color="#999987"/><stop offset="0.365" stop-color="#996762"/><stop offset="0.441" stop-color="#993a40"/><stop offset="0.574" stop-color="#991625"/><stop offset="0.779" stop-color="#990012"/><stop offset="1.000" stop-color="#990009"/></linearGradient><linearGradient id="o36" gradientUnits="userSpaceOnUse" x1="1239" y1="0" x2="1910" y2="0"><stop offset="0.000" stop-color="#009967"/><stop offset="0.188" stop-color="#039979"/><stop offset="0.273" stop-color="#5a9985"/><stop offset="0.322" stop-color="#99968c"/><stop offset="0.371" stop-color="#996263"/><stop offset="0.452" stop-color="#993640"/><stop offset="0.599" stop-color="#991123"/><stop offset="0.787" stop-color="#990013"/><stop offset="1.000" stop-color="#99000a"/></linearGradient><linearGradient id="o37" gradientUnits="userSpaceOnUse" x1="1239" y1="0" x2="1908" y2="0"><stop offset="0.000" stop-color="#00996b"/><stop offset="0.188" stop-color="#02997e"/><stop offset="0.274" stop-color="#5a998b"/><stop offset="0.323" stop-color="#999592"/><stop offset="0.368" stop-color="#99646a"/><stop offset="0.444" stop-color="#993846"/><stop offset="0.583" stop-color="#991427"/><stop offset="0.780" stop-color="#990015"/><stop offset="1.000" stop-color="#99000b"/></linearGradient><linearGradient id="o38" gradientUnits="userSpaceOnUse" x1="1240" y1="0" x2="1905" y2="0"><stop offset="0.000" stop-color="#00996e"/><stop offset="0.189" stop-color="#039983"/><stop offset="0.275" stop-color="#5b9991"/><stop offset="0.320" stop-color="#979799"/><stop offset="0.374" stop-color="#995f6a"/><stop offset="0.456" stop-color="#993445"/><stop offset="0.605" stop-color="#991027"/><stop offset="0.785" stop-color="#990016"/><stop offset="1.000" stop-color="#99000c"/></linearGradient><linearGradient id="o39" gradientUnits="userSpaceOnUse" x1="1241" y1="0" x2="1902" y2="0"><stop offset="0.000" stop-color="#009972"/><stop offset="0.191" stop-color="#039988"/><stop offset="0.277" stop-color="#5d9998"/><stop offset="0.327" stop-color="#988f99"/><stop offset="0.377" stop-color="#995d6d"/><stop offset="0.458" stop-color="#993247"/><stop offset="0.608" stop-color="#990f28"/><stop offset="0.785" stop-color="#990017"/><stop offset="1.000" stop-color="#99000d"/></linearGradient><linearGradient id="o40" gradientUnits="userSpaceOnUse" x1="1242" y1="0" x2="1900" y2="0"><stop offset="0.000" stop-color="#009976"/><stop offset="0.191" stop-color="#04998d"/><stop offset="0.278" stop-color="#5c9499"/><stop offset="0.333" stop-color="#998798"/><stop offset="0.388" stop-color="#99556a"/><stop offset="0.479" stop-color="#992b44"/><stop offset="0.652" stop-color="#990924"/><stop offset="0.807" stop-color="#990017"/><stop offset="1.000" stop-color="#99000e"/></linearGradient><linearGradient id="o41" gradientUnits="userSpaceOnUse" x1="1243" y1="0" x2="1897" y2="0"><stop offset="0.000" stop-color="#00997a"/><stop offset="0.193" stop-color="#049993"/><stop offset="0.275" stop-color="#558f99"/><stop offset="0.339" stop-color="#997f97"/><stop offset="0.394" stop-color="#99506b"/><stop offset="0.491" stop-color="#992743"/><stop offset="0.674" stop-color="#990624"/><stop offset="0.853" stop-color="#990016"/><stop offset="1.000" stop-color="#99000f"/></linearGradient><linearGradient id="o42" gradientUnits="userSpaceOnUse" x1="1244" y1="0" x2="1894" y2="0"><stop offset="0.000" stop-color="#00997e"/><stop offset="0.189" stop-color="#009997"/><stop offset="0.346" stop-color="#997896"/><stop offset="0.406" stop-color="#994968"/><stop offset="0.512" stop-color="#992141"/><stop offset="0.720" stop-color="#990121"/><stop offset="1.000" stop-color="#990010"/></linearGradient><linearGradient id="o43" gradientUnits="userSpaceOnUse" x1="1245" y1="0" x2="1892" y2="0"><stop offset="0.000" stop-color="#009982"/><stop offset="0.190" stop-color="#019599"/><stop offset="0.352" stop-color="#997095"/><stop offset="0.417" stop-color="#994366"/><stop offset="0.529" stop-color="#991d3f"/><stop offset="0.737" stop-color="#990021"/><stop offset="1.000" stop-color="#990011"/></linearGradient><linearGradient id="o44" gradientUnits="userSpaceOnUse" x1="1246" y1="0" x2="1889" y2="0"><stop offset="0.000" stop-color="#009986"/><stop offset="0.163" stop-color="#009599"/><stop offset="0.196" stop-color="#058f99"/><stop offset="0.355" stop-color="#996e98"/><stop offset="0.420" stop-color="#994169"/><stop offset="0.532" stop-color="#991c41"/><stop offset="0.737" stop-color="#990022"/><stop offset="1.000" stop-color="#990012"/></linearGradient><linearGradient id="o45" gradientUnits="userSpaceOnUse" x1="1247" y1="0" x2="1886" y2="0"><stop offset="0.000" stop-color="#00998a"/><stop offset="0.136" stop-color="#009499"/><stop offset="0.192" stop-color="#028b99"/><stop offset="0.362" stop-color="#996897"/><stop offset="0.427" stop-color="#993d69"/><stop offset="0.540" stop-color="#991a42"/><stop offset="0.742" stop-color="#990024"/><stop offset="1.000" stop-color="#990013"/></linearGradient><linearGradient id="o46" gradientUnits="userSpaceOnUse" x1="1248" y1="0" x2="1884" y2="0"><stop offset="0.000" stop-color="#00998e"/><stop offset="0.113" stop-color="#009399"/><stop offset="0.193" stop-color="#028699"/><stop offset="0.368" stop-color="#996296"/><stop offset="0.439" stop-color="#993867"/><stop offset="0.561" stop-color="#99153f"/><stop offset="0.755" stop-color="#990024"/><stop offset="1.000" stop-color="#990014"/></linearGradient><linearGradient id="o47" gradientUnits="userSpaceOnUse" x1="1249" y1="0" x2="1881" y2="0"><stop offset="0.000" stop-color="#009992"/><stop offset="0.104" stop-color="#009099"/><stop offset="0.195" stop-color="#038199"/><stop offset="0.375" stop-color="#995c95"/><stop offset="0.446" stop-color="#993467"/><stop offset="0.570" stop-color="#991340"/><stop offset="0.755" stop-color="#990026"/><stop offset="1.000" stop-color="#990015"/></linearGradient><linearGradient id="o48" gradientUnits="userSpaceOnUse" x1="1250" y1="0" x2="1878" y2="0"><stop offset="0.000" stop-color="#009997"/><stop offset="0.196" stop-color="#037d99"/><stop offset="0.377" stop-color="#995a98"/><stop offset="0.449" stop-color="#993369"/><stop offset="0.573" stop-color="#991342"/><stop offset="0.755" stop-color="#990027"/><stop offset="1.000" stop-color="#990016"/></linearGradient><linearGradient id="o49" gradientUnits="userSpaceOnUse" x1="1251" y1="0" x2="1875" y2="0"><stop offset="0.000" stop-color="#009799"/><stop offset="0.197" stop-color="#037999"/><stop offset="0.385" stop-color="#995497"/><stop offset="0.457" stop-color="#99306a"/><stop offset="0.582" stop-color="#991142"/><stop offset="0.755" stop-color="#990029"/><stop offset="1.000" stop-color="#990017"/></linearGradient><linearGradient id="o50" gradientUnits="userSpaceOnUse" x1="1252" y1="0" x2="1873" y2="0"><stop offset="0.000" stop-color="#009399"/><stop offset="0.198" stop-color="#047499"/><stop offset="0.391" stop-color="#994f96"/><stop offset="0.469" stop-color="#992b68"/><stop offset="0.604" stop-color="#990d40"/><stop offset="0.758" stop-color="#99002a"/><stop offset="1.000" stop-color="#990019"/></linearGradient><linearGradient id="o51" gradientUnits="userSpaceOnUse" x1="1253" y1="0" x2="1870" y2="0"><stop offset="0.000" stop-color="#008f99"/><stop offset="0.199" stop-color="#047199"/><stop offset="0.399" stop-color="#994a95"/><stop offset="0.476" stop-color="#992968"/><stop offset="0.613" stop-color="#990b41"/><stop offset="0.763" stop-color="#99002b"/><stop offset="1.000" stop-color="#99001a"/></linearGradient><linearGradient id="o52" gradientUnits="userSpaceOnUse" x1="1254" y1="0" x2="1867" y2="0"><stop offset="0.000" stop-color="#008b99"/><stop offset="0.201" stop-color="#046d99"/><stop offset="0.401" stop-color="#994998"/><stop offset="0.480" stop-color="#99276a"/><stop offset="0.617" stop-color="#990b42"/><stop offset="0.763" stop-color="#99002d"/><stop offset="1.000" stop-color="#99001b"/></linearGradient><linearGradient id="o53" gradientUnits="userSpaceOnUse" x1="1255" y1="0" x2="1865" y2="0"><stop offset="0.000" stop-color="#008799"/><stop offset="0.197" stop-color="#016a99"/><stop offset="0.408" stop-color="#994498"/><stop offset="0.492" stop-color="#992368"/><stop offset="0.634" stop-color="#990841"/><stop offset="0.782" stop-color="#99002d"/><stop offset="1.000" stop-color="#99001c"/></linearGradient><linearGradient id="o54" gradientUnits="userSpaceOnUse" x1="1256" y1="0" x2="1862" y2="0"><stop offset="0.000" stop-color="#008399"/><stop offset="0.198" stop-color="#026799"/><stop offset="0.416" stop-color="#994097"/><stop offset="0.500" stop-color="#992168"/><stop offset="0.649" stop-color="#990641"/><stop offset="0.822" stop-color="#99002a"/><stop offset="1.000" stop-color="#99001d"/></linearGradient><linearGradient id="o55" gradientUnits="userSpaceOnUse" x1="1257" y1="0" x2="1859" y2="0"><stop offset="0.000" stop-color="#008099"/><stop offset="0.199" stop-color="#026399"/><stop offset="0.424" stop-color="#993c96"/><stop offset="0.513" stop-color="#991d67"/><stop offset="0.668" stop-color="#990440"/><stop offset="0.977" stop-color="#990020"/><stop offset="1.000" stop-color="#99001f"/></linearGradient><linearGradient id="o56" gradientUnits="userSpaceOnUse" x1="1258" y1="0" x2="1857" y2="0"><stop offset="0.000" stop-color="#007c99"/><stop offset="0.200" stop-color="#026099"/><stop offset="0.431" stop-color="#993895"/><stop offset="0.521" stop-color="#991b67"/><stop offset="0.681" stop-color="#99023f"/><stop offset="1.000" stop-color="#990020"/></linearGradient><linearGradient id="o57" gradientUnits="userSpaceOnUse" x1="1259" y1="0" x2="1854" y2="0"><stop offset="0.000" stop-color="#007999"/><stop offset="0.202" stop-color="#035d99"/><stop offset="0.434" stop-color="#993698"/><stop offset="0.524" stop-color="#991a69"/><stop offset="0.681" stop-color="#990242"/><stop offset="0.988" stop-color="#990022"/><stop offset="1.000" stop-color="#990021"/></linearGradient><linearGradient id="o58" gradientUnits="userSpaceOnUse" x1="1261" y1="0" x2="1851" y2="0"><stop offset="0.000" stop-color="#007599"/><stop offset="0.203" stop-color="#045a99"/><stop offset="0.442" stop-color="#993296"/><stop offset="0.539" stop-color="#991667"/><stop offset="0.707" stop-color="#99003f"/><stop offset="1.000" stop-color="#990022"/></linearGradient><linearGradient id="o59" gradientUnits="userSpaceOnUse" x1="1262" y1="0" x2="1849" y2="0"><stop offset="0.000" stop-color="#007299"/><stop offset="0.204" stop-color="#045799"/><stop offset="0.445" stop-color="#993098"/><stop offset="0.542" stop-color="#991569"/><stop offset="0.710" stop-color="#990041"/><stop offset="1.000" stop-color="#990024"/></linearGradient><linearGradient id="o60" gradientUnits="userSpaceOnUse" x1="1263" y1="0" x2="1846" y2="0"><stop offset="0.000" stop-color="#006f99"/><stop offset="0.201" stop-color="#015599"/><stop offset="0.453" stop-color="#992d97"/><stop offset="0.551" stop-color="#991369"/><stop offset="0.720" stop-color="#990041"/><stop offset="1.000" stop-color="#990025"/></linearGradient><linearGradient id="o61" gradientUnits="userSpaceOnUse" x1="1264" y1="0" x2="1843" y2="0"><stop offset="0.000" stop-color="#006d99"/><stop offset="0.202" stop-color="#025299"/><stop offset="0.461" stop-color="#992a97"/><stop offset="0.565" stop-color="#991067"/><stop offset="0.720" stop-color="#990044"/><stop offset="1.000" stop-color="#990026"/></linearGradient><linearGradient id="o62" gradientUnits="userSpaceOnUse" x1="1265" y1="0" x2="1841" y2="0"><stop offset="0.000" stop-color="#006a99"/><stop offset="0.203" stop-color="#025099"/><stop offset="0.469" stop-color="#992796"/><stop offset="0.573" stop-color="#990e67"/><stop offset="0.724" stop-color="#990045"/><stop offset="1.000" stop-color="#990027"/></linearGradient><linearGradient id="o63" gradientUnits="userSpaceOnUse" x1="1266" y1="0" x2="1838" y2="0"><stop offset="0.000" stop-color="#006799"/><stop offset="0.205" stop-color="#024d99"/><stop offset="0.477" stop-color="#992495"/><stop offset="0.587" stop-color="#990c66"/><stop offset="0.724" stop-color="#990047"/><stop offset="1.000" stop-color="#990029"/></linearGradient><linearGradient id="o64" gradientUnits="userSpaceOnUse" x1="1268" y1="0" x2="1835" y2="0"><stop offset="0.000" stop-color="#006499"/><stop offset="0.206" stop-color="#034b99"/><stop offset="0.481" stop-color="#992296"/><stop offset="0.593" stop-color="#990a67"/><stop offset="0.730" stop-color="#990048"/><stop offset="1.000" stop-color="#99002a"/></linearGradient><linearGradient id="o65" gradientUnits="userSpaceOnUse" x1="1269" y1="0" x2="1833" y2="0"><stop offset="0.000" stop-color="#006299"/><stop offset="0.207" stop-color="#044899"/><stop offset="0.489" stop-color="#991f96"/><stop offset="0.601" stop-color="#990967"/><stop offset="0.734" stop-color="#99004a"/><stop offset="1.000" stop-color="#99002c"/></linearGradient><linearGradient id="o66" gradientUnits="userSpaceOnUse" x1="1270" y1="0" x2="1830" y2="0"><stop offset="0.000" stop-color="#005f99"/><stop offset="0.209" stop-color="#044699"/><stop offset="0.498" stop-color="#991c95"/><stop offset="0.616" stop-color="#990666"/><stop offset="0.761" stop-color="#990047"/><stop offset="1.000" stop-color="#99002d"/></linearGradient><linearGradient id="o67" gradientUnits="userSpaceOnUse" x1="1271" y1="0" x2="1827" y2="0"><stop offset="0.000" stop-color="#005d99"/><stop offset="0.210" stop-color="#044499"/><stop offset="0.502" stop-color="#991b97"/><stop offset="0.621" stop-color="#990568"/><stop offset="0.799" stop-color="#990044"/><stop offset="1.000" stop-color="#99002f"/></linearGradient><linearGradient id="o68" gradientUnits="userSpaceOnUse" x1="1272" y1="0" x2="1825" y2="0"><stop offset="0.000" stop-color="#005a99"/><stop offset="0.206" stop-color="#024299"/><stop offset="0.510" stop-color="#991897"/><stop offset="0.629" stop-color="#990468"/><stop offset="0.841" stop-color="#990040"/><stop offset="1.000" stop-color="#990030"/></linearGradient><linearGradient id="o69" gradientUnits="userSpaceOnUse" x1="1274" y1="0" x2="1822" y2="0"><stop offset="0.000" stop-color="#005899"/><stop offset="0.208" stop-color="#034099"/><stop offset="0.520" stop-color="#991595"/><stop offset="0.646" stop-color="#990266"/><stop offset="0.865" stop-color="#99003f"/><stop offset="1.000" stop-color="#990032"/></linearGradient><linearGradient id="o70" gradientUnits="userSpaceOnUse" x1="1275" y1="0" x2="1819" y2="0"><stop offset="0.000" stop-color="#005699"/><stop offset="0.210" stop-color="#033e99"/><stop offset="0.524" stop-color="#991497"/><stop offset="0.651" stop-color="#990168"/><stop offset="0.871" stop-color="#990040"/><stop offset="1.000" stop-color="#990033"/></linearGradient><linearGradient id="o71" gradientUnits="userSpaceOnUse" x1="1276" y1="0" x2="1817" y2="0"><stop offset="0.000" stop-color="#005499"/><stop offset="0.211" stop-color="#033c99"/><stop offset="0.532" stop-color="#991296"/><stop offset="0.660" stop-color="#990068"/><stop offset="0.882" stop-color="#990041"/><stop offset="1.000" stop-color="#990035"/></linearGradient><linearGradient id="o72" gradientUnits="userSpaceOnUse" x1="1278" y1="0" x2="1814" y2="0"><stop offset="0.000" stop-color="#005199"/><stop offset="0.207" stop-color="#023b99"/><stop offset="0.537" stop-color="#991098"/><stop offset="0.666" stop-color="#990069"/><stop offset="0.890" stop-color="#990041"/><stop offset="1.000" stop-color="#990036"/></linearGradient><linearGradient id="o73" gradientUnits="userSpaceOnUse" x1="1279" y1="0" x2="1811" y2="0"><stop offset="0.000" stop-color="#004f99"/><stop offset="0.209" stop-color="#023999"/><stop offset="0.547" stop-color="#990e97"/><stop offset="0.682" stop-color="#990068"/><stop offset="0.919" stop-color="#990040"/><stop offset="1.000" stop-color="#990038"/></linearGradient><linearGradient id="o74" gradientUnits="userSpaceOnUse" x1="1280" y1="0" x2="1809" y2="0"><stop offset="0.000" stop-color="#004d99"/><stop offset="0.210" stop-color="#033799"/><stop offset="0.556" stop-color="#990c96"/><stop offset="0.686" stop-color="#990069"/><stop offset="0.919" stop-color="#990042"/><stop offset="1.000" stop-color="#990039"/></linearGradient><linearGradient id="o75" gradientUnits="userSpaceOnUse" x1="1282" y1="0" x2="1806" y2="0"><stop offset="0.000" stop-color="#004b99"/><stop offset="0.212" stop-color="#043599"/><stop offset="0.561" stop-color="#990b97"/><stop offset="0.687" stop-color="#99006c"/><stop offset="0.922" stop-color="#990043"/><stop offset="1.000" stop-color="#99003b"/></linearGradient><linearGradient id="o76" gradientUnits="userSpaceOnUse" x1="1283" y1="0" x2="1803" y2="0"><stop offset="0.000" stop-color="#004999"/><stop offset="0.213" stop-color="#043399"/><stop offset="0.571" stop-color="#990997"/><stop offset="0.692" stop-color="#99006d"/><stop offset="0.923" stop-color="#990045"/><stop offset="1.000" stop-color="#99003d"/></linearGradient><linearGradient id="o77" gradientUnits="userSpaceOnUse" x1="1284" y1="0" x2="1801" y2="0"><stop offset="0.000" stop-color="#004799"/><stop offset="0.215" stop-color="#043299"/><stop offset="0.580" stop-color="#990796"/><stop offset="0.708" stop-color="#99006c"/><stop offset="0.952" stop-color="#990043"/><stop offset="1.000" stop-color="#99003e"/></linearGradient><linearGradient id="o78" gradientUnits="userSpaceOnUse" x1="1286" y1="0" x2="1798" y2="0"><stop offset="0.000" stop-color="#004599"/><stop offset="0.211" stop-color="#033199"/><stop offset="0.586" stop-color="#990597"/><stop offset="0.738" stop-color="#990067"/><stop offset="1.000" stop-color="#990040"/></linearGradient><linearGradient id="o79" gradientUnits="userSpaceOnUse" x1="1287" y1="0" x2="1795" y2="0"><stop offset="0.000" stop-color="#004499"/><stop offset="0.213" stop-color="#032f99"/><stop offset="0.596" stop-color="#990497"/><stop offset="0.750" stop-color="#990068"/><stop offset="1.000" stop-color="#990042"/></linearGradient><linearGradient id="o80" gradientUnits="userSpaceOnUse" x1="1288" y1="0" x2="1793" y2="0"><stop offset="0.000" stop-color="#004299"/><stop offset="0.214" stop-color="#032e99"/><stop offset="0.606" stop-color="#990296"/><stop offset="0.766" stop-color="#990066"/><stop offset="1.000" stop-color="#990043"/></linearGradient><linearGradient id="o81" gradientUnits="userSpaceOnUse" x1="1290" y1="0" x2="1790" y2="0"><stop offset="0.000" stop-color="#004099"/><stop offset="0.216" stop-color="#042c99"/><stop offset="0.612" stop-color="#990197"/><stop offset="0.774" stop-color="#990067"/><stop offset="1.000" stop-color="#990045"/></linearGradient><linearGradient id="o82" gradientUnits="userSpaceOnUse" x1="1291" y1="0" x2="1787" y2="0"><stop offset="0.000" stop-color="#003f99"/><stop offset="0.218" stop-color="#042a99"/><stop offset="0.623" stop-color="#990096"/><stop offset="0.786" stop-color="#990068"/><stop offset="1.000" stop-color="#990047"/></linearGradient><linearGradient id="o83" gradientUnits="userSpaceOnUse" x1="1293" y1="0" x2="1785" y2="0"><stop offset="0.000" stop-color="#003d99"/><stop offset="0.213" stop-color="#032999"/><stop offset="0.634" stop-color="#990095"/><stop offset="0.805" stop-color="#990066"/><stop offset="1.000" stop-color="#990049"/></linearGradient><linearGradient id="o84" gradientUnits="userSpaceOnUse" x1="1294" y1="0" x2="1782" y2="0"><stop offset="0.000" stop-color="#003b99"/><stop offset="0.215" stop-color="#032899"/><stop offset="0.639" stop-color="#990097"/><stop offset="0.811" stop-color="#990067"/><stop offset="1.000" stop-color="#99004b"/></linearGradient><linearGradient id="o85" gradientUnits="userSpaceOnUse" x1="1296" y1="0" x2="1779" y2="0"><stop offset="0.000" stop-color="#003a99"/><stop offset="0.217" stop-color="#042799"/><stop offset="0.640" stop-color="#980099"/><stop offset="0.826" stop-color="#990067"/><stop offset="1.000" stop-color="#99004d"/></linearGradient><linearGradient id="o86" gradientUnits="userSpaceOnUse" x1="1297" y1="0" x2="1777" y2="0"><stop offset="0.000" stop-color="#003899"/><stop offset="0.219" stop-color="#042599"/><stop offset="0.637" stop-color="#940099"/><stop offset="0.706" stop-color="#990087"/><stop offset="0.919" stop-color="#99005a"/><stop offset="1.000" stop-color="#99004f"/></linearGradient><linearGradient id="o87" gradientUnits="userSpaceOnUse" x1="1299" y1="0" x2="1774" y2="0"><stop offset="0.000" stop-color="#003799"/><stop offset="0.215" stop-color="#032499"/><stop offset="0.638" stop-color="#900099"/><stop offset="0.682" stop-color="#990092"/><stop offset="0.872" stop-color="#990064"/><stop offset="1.000" stop-color="#990051"/></linearGradient><linearGradient id="o88" gradientUnits="userSpaceOnUse" x1="1300" y1="0" x2="1771" y2="0"><stop offset="0.000" stop-color="#003599"/><stop offset="0.217" stop-color="#032399"/><stop offset="0.631" stop-color="#8a0099"/><stop offset="0.688" stop-color="#990093"/><stop offset="0.879" stop-color="#990065"/><stop offset="1.000" stop-color="#990053"/></linearGradient><linearGradient id="o89" gradientUnits="userSpaceOnUse" x1="1302" y1="0" x2="1769" y2="0"><stop offset="0.000" stop-color="#003499"/><stop offset="0.218" stop-color="#042299"/><stop offset="0.630" stop-color="#870099"/><stop offset="0.694" stop-color="#990094"/><stop offset="0.887" stop-color="#990066"/><stop offset="1.000" stop-color="#990055"/></linearGradient><linearGradient id="o90" gradientUnits="userSpaceOnUse" x1="1303" y1="0" x2="1766" y2="0"><stop offset="0.000" stop-color="#003299"/><stop offset="0.220" stop-color="#042099"/><stop offset="0.622" stop-color="#810099"/><stop offset="0.700" stop-color="#990096"/><stop offset="0.894" stop-color="#990067"/><stop offset="1.000" stop-color="#990057"/></linearGradient><linearGradient id="o91" gradientUnits="userSpaceOnUse" x1="1305" y1="0" x2="1763" y2="0"><stop offset="0.000" stop-color="#003199"/><stop offset="0.216" stop-color="#032099"/><stop offset="0.622" stop-color="#7f0099"/><stop offset="0.714" stop-color="#990095"/><stop offset="0.917" stop-color="#990066"/><stop offset="1.000" stop-color="#990059"/></linearGradient><linearGradient id="o92" gradientUnits="userSpaceOnUse" x1="1306" y1="0" x2="1761" y2="0"><stop offset="0.000" stop-color="#003099"/><stop offset="0.218" stop-color="#031f99"/><stop offset="0.620" stop-color="#7b0099"/><stop offset="0.725" stop-color="#990094"/><stop offset="0.930" stop-color="#990066"/><stop offset="1.000" stop-color="#99005b"/></linearGradient><linearGradient id="o93" gradientUnits="userSpaceOnUse" x1="1308" y1="0" x2="1758" y2="0"><stop offset="0.000" stop-color="#002e99"/><stop offset="0.220" stop-color="#041d99"/><stop offset="0.613" stop-color="#760099"/><stop offset="0.733" stop-color="#990095"/><stop offset="0.940" stop-color="#990067"/><stop offset="1.000" stop-color="#99005e"/></linearGradient><linearGradient id="o94" gradientUnits="userSpaceOnUse" x1="1310" y1="0" x2="1755" y2="0"><stop offset="0.000" stop-color="#002d99"/><stop offset="0.216" stop-color="#031c99"/><stop offset="0.613" stop-color="#740099"/><stop offset="0.742" stop-color="#990096"/><stop offset="0.951" stop-color="#990067"/><stop offset="1.000" stop-color="#990060"/></linearGradient><linearGradient id="o95" gradientUnits="userSpaceOnUse" x1="1311" y1="0" x2="1752" y2="0"><stop offset="0.000" stop-color="#002c99"/><stop offset="0.218" stop-color="#031b99"/><stop offset="0.605" stop-color="#6f0099"/><stop offset="0.755" stop-color="#990096"/><stop offset="0.973" stop-color="#990066"/><stop offset="1.000" stop-color="#990062"/></linearGradient><linearGradient id="o96" gradientUnits="userSpaceOnUse" x1="1313" y1="0" x2="1750" y2="0"><stop offset="0.000" stop-color="#002a99"/><stop offset="0.220" stop-color="#041a99"/><stop offset="0.604" stop-color="#6c0099"/><stop offset="0.762" stop-color="#990096"/><stop offset="0.982" stop-color="#990067"/><stop offset="1.000" stop-color="#990065"/></linearGradient><linearGradient id="o97" gradientUnits="userSpaceOnUse" x1="1314" y1="0" x2="1747" y2="0"><stop offset="0.000" stop-color="#002999"/><stop offset="0.222" stop-color="#041999"/><stop offset="0.596" stop-color="#670099"/><stop offset="0.776" stop-color="#990096"/><stop offset="1.000" stop-color="#990067"/></linearGradient><linearGradient id="o98" gradientUnits="userSpaceOnUse" x1="1316" y1="0" x2="1744" y2="0"><stop offset="0.000" stop-color="#002899"/><stop offset="0.217" stop-color="#031999"/><stop offset="0.596" stop-color="#650099"/><stop offset="0.792" stop-color="#990095"/><stop offset="1.000" stop-color="#99006a"/></linearGradient><linearGradient id="o99" gradientUnits="userSpaceOnUse" x1="1318" y1="0" x2="1742" y2="0"><stop offset="0.000" stop-color="#002699"/><stop offset="0.219" stop-color="#041799"/><stop offset="0.594" stop-color="#630099"/><stop offset="0.800" stop-color="#990096"/><stop offset="1.000" stop-color="#99006c"/></linearGradient><linearGradient id="o100" gradientUnits="userSpaceOnUse" x1="1319" y1="0" x2="1739" y2="0"><stop offset="0.000" stop-color="#002599"/><stop offset="0.221" stop-color="#041699"/><stop offset="0.586" stop-color="#5e0099"/><stop offset="0.814" stop-color="#990095"/><stop offset="1.000" stop-color="#99006f"/></linearGradient><linearGradient id="o101" gradientUnits="userSpaceOnUse" x1="1321" y1="0" x2="1736" y2="0"><stop offset="0.000" stop-color="#002499"/><stop offset="0.217" stop-color="#031699"/><stop offset="0.586" stop-color="#5c0099"/><stop offset="0.824" stop-color="#990096"/><stop offset="1.000" stop-color="#990071"/></linearGradient><linearGradient id="o102" gradientUnits="userSpaceOnUse" x1="1322" y1="0" x2="1734" y2="0"><stop offset="0.000" stop-color="#002399"/><stop offset="0.218" stop-color="#031599"/><stop offset="0.575" stop-color="#580099"/><stop offset="0.837" stop-color="#990096"/><stop offset="1.000" stop-color="#990074"/></linearGradient><linearGradient id="o103" gradientUnits="userSpaceOnUse" x1="1324" y1="0" x2="1731" y2="0"><stop offset="0.000" stop-color="#002299"/><stop offset="0.221" stop-color="#041499"/><stop offset="0.575" stop-color="#560099"/><stop offset="0.848" stop-color="#990096"/><stop offset="1.000" stop-color="#990077"/></linearGradient><linearGradient id="o104" gradientUnits="userSpaceOnUse" x1="1326" y1="0" x2="1728" y2="0"><stop offset="0.000" stop-color="#002199"/><stop offset="0.216" stop-color="#031399"/><stop offset="0.567" stop-color="#520099"/><stop offset="0.866" stop-color="#990095"/><stop offset="1.000" stop-color="#990079"/></linearGradient><linearGradient id="o105" gradientUnits="userSpaceOnUse" x1="1327" y1="0" x2="1726" y2="0"><stop offset="0.000" stop-color="#002099"/><stop offset="0.218" stop-color="#031299"/><stop offset="0.564" stop-color="#500099"/><stop offset="0.880" stop-color="#990095"/><stop offset="1.000" stop-color="#99007c"/></linearGradient><linearGradient id="o106" gradientUnits="userSpaceOnUse" x1="1329" y1="0" x2="1723" y2="0"><stop offset="0.000" stop-color="#001f99"/><stop offset="0.221" stop-color="#041199"/><stop offset="0.563" stop-color="#4e0099"/><stop offset="0.891" stop-color="#990096"/><stop offset="1.000" stop-color="#99007f"/></linearGradient><linearGradient id="o107" gradientUnits="userSpaceOnUse" x1="1331" y1="0" x2="1720" y2="0"><stop offset="0.000" stop-color="#001e99"/><stop offset="0.216" stop-color="#031199"/><stop offset="0.555" stop-color="#4b0099"/><stop offset="0.902" stop-color="#990096"/><stop offset="1.000" stop-color="#990082"/></linearGradient><linearGradient id="o108" gradientUnits="userSpaceOnUse" x1="1332" y1="0" x2="1718" y2="0"><stop offset="0.000" stop-color="#001d99"/><stop offset="0.218" stop-color="#031099"/><stop offset="0.560" stop-color="#4a0099"/><stop offset="0.917" stop-color="#990096"/><stop offset="1.000" stop-color="#990085"/></linearGradient><linearGradient id="o109" gradientUnits="userSpaceOnUse" x1="1334" y1="0" x2="1715" y2="0"><stop offset="0.000" stop-color="#001c99"/><stop offset="0.220" stop-color="#040f99"/><stop offset="0.551" stop-color="#470099"/><stop offset="0.937" stop-color="#990095"/><stop offset="1.000" stop-color="#990088"/></linearGradient><linearGradient id="o110" gradientUnits="userSpaceOnUse" x1="1336" y1="0" x2="1712" y2="0"><stop offset="0.000" stop-color="#001b99"/><stop offset="0.223" stop-color="#040e99"/><stop offset="0.551" stop-color="#450099"/><stop offset="0.949" stop-color="#990096"/><stop offset="1.000" stop-color="#99008b"/></linearGradient><linearGradient id="o111" gradientUnits="userSpaceOnUse" x1="1337" y1="0" x2="1710" y2="0"><stop offset="0.000" stop-color="#001a99"/><stop offset="0.225" stop-color="#050d99"/><stop offset="0.547" stop-color="#430099"/><stop offset="0.965" stop-color="#990095"/><stop offset="1.000" stop-color="#99008e"/></linearGradient><linearGradient id="o112" gradientUnits="userSpaceOnUse" x1="1339" y1="0" x2="1707" y2="0"><stop offset="0.000" stop-color="#001999"/><stop offset="0.220" stop-color="#040d99"/><stop offset="0.538" stop-color="#400099"/><stop offset="0.978" stop-color="#990096"/><stop offset="1.000" stop-color="#990092"/></linearGradient><linearGradient id="o113" gradientUnits="userSpaceOnUse" x1="1341" y1="0" x2="1704" y2="0"><stop offset="0.000" stop-color="#001899"/><stop offset="0.223" stop-color="#040c99"/><stop offset="0.537" stop-color="#3e0099"/><stop offset="1.000" stop-color="#990095"/></linearGradient><linearGradient id="o114" gradientUnits="userSpaceOnUse" x1="1343" y1="0" x2="1702" y2="0"><stop offset="0.000" stop-color="#001799"/><stop offset="0.217" stop-color="#040b99"/><stop offset="0.535" stop-color="#3d0099"/><stop offset="1.000" stop-color="#990098"/></linearGradient><linearGradient id="o115" gradientUnits="userSpaceOnUse" x1="1344" y1="0" x2="1699" y2="0"><stop offset="0.000" stop-color="#001699"/><stop offset="0.220" stop-color="#040b99"/><stop offset="0.532" stop-color="#3b0099"/><stop offset="1.000" stop-color="#960099"/></linearGradient><linearGradient id="o116" gradientUnits="userSpaceOnUse" x1="1346" y1="0" x2="1696" y2="0"><stop offset="0.000" stop-color="#001599"/><stop offset="0.223" stop-color="#040a99"/><stop offset="0.540" stop-color="#3b0099"/><stop offset="1.000" stop-color="#930099"/></linearGradient><linearGradient id="o117" gradientUnits="userSpaceOnUse" x1="1348" y1="0" x2="1694" y2="0"><stop offset="0.000" stop-color="#001499"/><stop offset="0.217" stop-color="#030999"/><stop offset="0.529" stop-color="#380099"/><stop offset="1.000" stop-color="#900099"/></linearGradient><linearGradient id="o118" gradientUnits="userSpaceOnUse" x1="1350" y1="0" x2="1691" y2="0"><stop offset="0.000" stop-color="#001399"/><stop offset="0.220" stop-color="#040999"/><stop offset="0.537" stop-color="#380099"/><stop offset="1.000" stop-color="#8c0099"/></linearGradient><linearGradient id="o119" gradientUnits="userSpaceOnUse" x1="1351" y1="0" x2="1688" y2="0"><stop offset="0.000" stop-color="#001399"/><stop offset="0.223" stop-color="#040899"/><stop offset="0.543" stop-color="#380099"/><stop offset="1.000" stop-color="#890099"/></linearGradient><linearGradient id="o120" gradientUnits="userSpaceOnUse" x1="1353" y1="0" x2="1686" y2="0"><stop offset="0.000" stop-color="#001299"/><stop offset="0.225" stop-color="#050799"/><stop offset="0.559" stop-color="#3a0099"/><stop offset="1.000" stop-color="#860099"/></linearGradient><linearGradient id="o121" gradientUnits="userSpaceOnUse" x1="1355" y1="0" x2="1683" y2="0"><stop offset="0.000" stop-color="#001199"/><stop offset="0.220" stop-color="#040799"/><stop offset="0.576" stop-color="#3b0099"/><stop offset="1.000" stop-color="#830099"/></linearGradient><linearGradient id="o122" gradientUnits="userSpaceOnUse" x1="1357" y1="0" x2="1680" y2="0"><stop offset="0.000" stop-color="#001099"/><stop offset="0.223" stop-color="#050699"/><stop offset="0.613" stop-color="#400099"/><stop offset="1.000" stop-color="#800099"/></linearGradient><linearGradient id="o123" gradientUnits="userSpaceOnUse" x1="1359" y1="0" x2="1678" y2="0"><stop offset="0.000" stop-color="#000f99"/><stop offset="0.216" stop-color="#040699"/><stop offset="0.658" stop-color="#460099"/><stop offset="1.000" stop-color="#7d0099"/></linearGradient><linearGradient id="o124" gradientUnits="userSpaceOnUse" x1="1361" y1="0" x2="1675" y2="0"><stop offset="0.000" stop-color="#000e99"/><stop offset="0.220" stop-color="#040599"/><stop offset="0.879" stop-color="#670099"/><stop offset="1.000" stop-color="#7a0099"/></linearGradient><linearGradient id="o125" gradientUnits="userSpaceOnUse" x1="1362" y1="0" x2="1672" y2="0"><stop offset="0.000" stop-color="#000e99"/><stop offset="0.223" stop-color="#040499"/><stop offset="1.000" stop-color="#770099"/></linearGradient><linearGradient id="o126" gradientUnits="userSpaceOnUse" x1="1364" y1="0" x2="1670" y2="0"><stop offset="0.000" stop-color="#000d99"/><stop offset="0.216" stop-color="#040499"/><stop offset="1.000" stop-color="#750099"/></linearGradient><linearGradient id="o127" gradientUnits="userSpaceOnUse" x1="1366" y1="0" x2="1667" y2="0"><stop offset="0.000" stop-color="#000c99"/><stop offset="0.219" stop-color="#040399"/><stop offset="1.000" stop-color="#720099"/></linearGradient><linearGradient id="o128" gradientUnits="userSpaceOnUse" x1="1368" y1="0" x2="1664" y2="0"><stop offset="0.000" stop-color="#000b99"/><stop offset="0.223" stop-color="#050299"/><stop offset="1.000" stop-color="#6f0099"/></linearGradient><linearGradient id="o129" gradientUnits="userSpaceOnUse" x1="1370" y1="0" x2="1662" y2="0"><stop offset="0.000" stop-color="#000a99"/><stop offset="0.216" stop-color="#040299"/><stop offset="1.000" stop-color="#6d0099"/></linearGradient><linearGradient id="o130" gradientUnits="userSpaceOnUse" x1="1372" y1="0" x2="1659" y2="0"><stop offset="0.000" stop-color="#000a99"/><stop offset="0.220" stop-color="#050199"/><stop offset="1.000" stop-color="#6a0099"/></linearGradient><linearGradient id="o131" gradientUnits="userSpaceOnUse" x1="1374" y1="0" x2="1656" y2="0"><stop offset="0.000" stop-color="#000999"/><stop offset="0.213" stop-color="#040199"/><stop offset="1.000" stop-color="#680099"/></linearGradient><linearGradient id="o132" gradientUnits="userSpaceOnUse" x1="1376" y1="0" x2="1654" y2="0"><stop offset="0.000" stop-color="#000899"/><stop offset="0.216" stop-color="#040099"/><stop offset="1.000" stop-color="#650099"/></linearGradient><linearGradient id="o133" gradientUnits="userSpaceOnUse" x1="1378" y1="0" x2="1651" y2="0"><stop offset="0.000" stop-color="#000899"/><stop offset="0.220" stop-color="#050099"/><stop offset="1.000" stop-color="#630099"/></linearGradient><linearGradient id="o134" gradientUnits="userSpaceOnUse" x1="1380" y1="0" x2="1648" y2="0"><stop offset="0.000" stop-color="#000799"/><stop offset="0.213" stop-color="#040099"/><stop offset="1.000" stop-color="#600099"/></linearGradient><linearGradient id="o135" gradientUnits="userSpaceOnUse" x1="1382" y1="0" x2="1646" y2="0"><stop offset="0.000" stop-color="#000699"/><stop offset="0.216" stop-color="#050099"/><stop offset="1.000" stop-color="#5e0099"/></linearGradient><linearGradient id="o136" gradientUnits="userSpaceOnUse" x1="1384" y1="0" x2="1643" y2="0"><stop offset="0.000" stop-color="#000599"/><stop offset="0.220" stop-color="#050099"/><stop offset="1.000" stop-color="#5c0099"/></linearGradient><linearGradient id="o137" gradientUnits="userSpaceOnUse" x1="1386" y1="0" x2="1640" y2="0"><stop offset="0.000" stop-color="#000599"/><stop offset="0.213" stop-color="#040099"/><stop offset="1.000" stop-color="#5a0099"/></linearGradient><linearGradient id="o138" gradientUnits="userSpaceOnUse" x1="1388" y1="0" x2="1638" y2="0"><stop offset="0.000" stop-color="#000499"/><stop offset="0.216" stop-color="#050099"/><stop offset="1.000" stop-color="#580099"/></linearGradient><linearGradient id="o139" gradientUnits="userSpaceOnUse" x1="1390" y1="0" x2="1635" y2="0"><stop offset="0.000" stop-color="#000399"/><stop offset="0.220" stop-color="#050099"/><stop offset="1.000" stop-color="#550099"/></linearGradient><linearGradient id="o140" gradientUnits="userSpaceOnUse" x1="1393" y1="0" x2="1632" y2="0"><stop offset="0.000" stop-color="#000399"/><stop offset="0.213" stop-color="#050099"/><stop offset="1.000" stop-color="#530099"/></linearGradient><linearGradient id="o141" gradientUnits="userSpaceOnUse" x1="1395" y1="0" x2="1629" y2="0"><stop offset="0.000" stop-color="#000299"/><stop offset="0.205" stop-color="#050099"/><stop offset="1.000" stop-color="#510099"/></linearGradient><linearGradient id="o142" gradientUnits="userSpaceOnUse" x1="1397" y1="0" x2="1627" y2="0"><stop offset="0.000" stop-color="#000199"/><stop offset="0.222" stop-color="#060099"/><stop offset="1.000" stop-color="#4f0099"/></linearGradient><linearGradient id="o143" gradientUnits="userSpaceOnUse" x1="1399" y1="0" x2="1624" y2="0"><stop offset="0.000" stop-color="#000199"/><stop offset="0.213" stop-color="#050099"/><stop offset="1.000" stop-color="#4d0099"/></linearGradient><linearGradient id="o144" gradientUnits="userSpaceOnUse" x1="1401" y1="0" x2="1621" y2="0"><stop offset="0.000" stop-color="#000099"/><stop offset="0.218" stop-color="#060099"/><stop offset="1.000" stop-color="#4b0099"/></linearGradient><linearGradient id="o145" gradientUnits="userSpaceOnUse" x1="1404" y1="0" x2="1619" y2="0"><stop offset="0.000" stop-color="#000099"/><stop offset="0.209" stop-color="#060099"/><stop offset="1.000" stop-color="#490099"/></linearGradient><linearGradient id="o146" gradientUnits="userSpaceOnUse" x1="1406" y1="0" x2="1616" y2="0"><stop offset="0.000" stop-color="#000099"/><stop offset="0.214" stop-color="#060099"/><stop offset="1.000" stop-color="#470099"/></linearGradient><linearGradient id="o147" gradientUnits="userSpaceOnUse" x1="1408" y1="0" x2="1613" y2="0"><stop offset="0.000" stop-color="#000099"/><stop offset="0.220" stop-color="#070099"/><stop offset="1.000" stop-color="#450099"/></linearGradient><linearGradient id="o148" gradientUnits="userSpaceOnUse" x1="1411" y1="0" x2="1611" y2="0"><stop offset="0.000" stop-color="#000099"/><stop offset="0.225" stop-color="#070099"/><stop offset="1.000" stop-color="#440099"/></linearGradient><linearGradient id="o149" gradientUnits="userSpaceOnUse" x1="1413" y1="0" x2="1608" y2="0"><stop offset="0.000" stop-color="#000099"/><stop offset="0.215" stop-color="#070099"/><stop offset="1.000" stop-color="#420099"/></linearGradient><linearGradient id="o150" gradientUnits="userSpaceOnUse" x1="1416" y1="0" x2="1605" y2="0"><stop offset="0.000" stop-color="#000099"/><stop offset="0.222" stop-color="#080099"/><stop offset="1.000" stop-color="#400099"/></linearGradient><linearGradient id="o151" gradientUnits="userSpaceOnUse" x1="1418" y1="0" x2="1603" y2="0"><stop offset="0.000" stop-color="#000099"/><stop offset="0.243" stop-color="#090099"/><stop offset="1.000" stop-color="#3e0099"/></linearGradient><linearGradient id="o152" gradientUnits="userSpaceOnUse" x1="1420" y1="0" x2="1600" y2="0"><stop offset="0.000" stop-color="#000099"/><stop offset="0.267" stop-color="#0b0099"/><stop offset="1.000" stop-color="#3c0099"/></linearGradient><linearGradient id="o153" gradientUnits="userSpaceOnUse" x1="1423" y1="0" x2="1597" y2="0"><stop offset="0.000" stop-color="#000099"/><stop offset="0.310" stop-color="#0e0099"/><stop offset="1.000" stop-color="#3a0099"/></linearGradient><linearGradient id="o154" gradientUnits="userSpaceOnUse" x1="1426" y1="0" x2="1595" y2="0"><stop offset="0.000" stop-color="#000099"/><stop offset="0.444" stop-color="#160099"/><stop offset="1.000" stop-color="#390099"/></linearGradient><linearGradient id="o155" gradientUnits="userSpaceOnUse" x1="1428" y1="0" x2="1592" y2="0"><stop offset="0.000" stop-color="#000099"/><stop offset="0.732" stop-color="#270099"/><stop offset="1.000" stop-color="#370099"/></linearGradient><linearGradient id="o156" gradientUnits="userSpaceOnUse" x1="1431" y1="0" x2="1589" y2="0"><stop offset="0.000" stop-color="#000099"/><stop offset="1.000" stop-color="#360099"/></linearGradient><linearGradient id="o157" gradientUnits="userSpaceOnUse" x1="1434" y1="0" x2="1587" y2="0"><stop offset="0.000" stop-color="#000099"/><stop offset="1.000" stop-color="#340099"/></linearGradient><linearGradient id="o158" gradientUnits="userSpaceOnUse" x1="1437" y1="0" x2="1584" y2="0"><stop offset="0.000" stop-color="#000099"/><stop offset="1.000" stop-color="#320099"/></linearGradient><linearGradient id="o159" gradientUnits="userSpaceOnUse" x1="1440" y1="0" x2="1581" y2="0"><stop offset="0.000" stop-color="#000099"/><stop offset="1.000" stop-color="#310099"/></linearGradient><linearGradient id="o160" gradientUnits="userSpaceOnUse" x1="1443" y1="0" x2="1579" y2="0"><stop offset="0.000" stop-color="#000099"/><stop offset="1.000" stop-color="#300099"/></linearGradient><linearGradient id="o161" gradientUnits="userSpaceOnUse" x1="1446" y1="0" x2="1576" y2="0"><stop offset="0.000" stop-color="#010099"/><stop offset="1.000" stop-color="#2e0099"/></linearGradient><linearGradient id="o162" gradientUnits="userSpaceOnUse" x1="1449" y1="0" x2="1573" y2="0"><stop offset="0.000" stop-color="#010099"/><stop offset="1.000" stop-color="#2c0099"/></linearGradient><linearGradient id="o163" gradientUnits="userSpaceOnUse" x1="1452" y1="0" x2="1571" y2="0"><stop offset="0.000" stop-color="#020099"/><stop offset="1.000" stop-color="#2b0099"/></linearGradient><linearGradient id="o164" gradientUnits="userSpaceOnUse" x1="1455" y1="0" x2="1568" y2="0"><stop offset="0.000" stop-color="#030099"/><stop offset="1.000" stop-color="#2a0099"/></linearGradient><linearGradient id="o165" gradientUnits="userSpaceOnUse" x1="1458" y1="0" x2="1565" y2="0"><stop offset="0.000" stop-color="#040099"/><stop offset="1.000" stop-color="#280099"/></linearGradient><linearGradient id="o166" gradientUnits="userSpaceOnUse" x1="1461" y1="0" x2="1563" y2="0"><stop offset="0.000" stop-color="#040099"/><stop offset="1.000" stop-color="#270099"/></linearGradient><linearGradient id="o167" gradientUnits="userSpaceOnUse" x1="1465" y1="0" x2="1560" y2="0"><stop offset="0.000" stop-color="#050099"/><stop offset="1.000" stop-color="#250099"/></linearGradient><linearGradient id="o168" gradientUnits="userSpaceOnUse" x1="1468" y1="0" x2="1557" y2="0"><stop offset="0.000" stop-color="#060099"/><stop offset="1.000" stop-color="#240099"/></linearGradient><linearGradient id="o169" gradientUnits="userSpaceOnUse" x1="1471" y1="0" x2="1555" y2="0"><stop offset="0.000" stop-color="#070099"/><stop offset="1.000" stop-color="#230099"/></linearGradient><linearGradient id="o170" gradientUnits="userSpaceOnUse" x1="1475" y1="0" x2="1552" y2="0"><stop offset="0.000" stop-color="#080099"/><stop offset="1.000" stop-color="#210099"/></linearGradient><linearGradient id="o171" gradientUnits="userSpaceOnUse" x1="1478" y1="0" x2="1549" y2="0"><stop offset="0.000" stop-color="#090099"/><stop offset="1.000" stop-color="#200099"/></linearGradient><linearGradient id="o172" gradientUnits="userSpaceOnUse" x1="1481" y1="0" x2="1547" y2="0"><stop offset="0.000" stop-color="#090099"/><stop offset="1.000" stop-color="#1f0099"/></linearGradient><linearGradient id="o173" gradientUnits="userSpaceOnUse" x1="1485" y1="0" x2="1544" y2="0"><stop offset="0.000" stop-color="#0a0099"/><stop offset="1.000" stop-color="#1d0099"/></linearGradient><linearGradient id="o174" gradientUnits="userSpaceOnUse" x1="1488" y1="0" x2="1541" y2="0"><stop offset="0.000" stop-color="#0b0099"/><stop offset="1.000" stop-color="#1c0099"/></linearGradient><linearGradient id="o175" gradientUnits="userSpaceOnUse" x1="1491" y1="0" x2="1539" y2="0"><stop offset="0.000" stop-color="#0c0099"/><stop offset="1.000" stop-color="#1b0099"/></linearGradient><linearGradient id="o176" gradientUnits="userSpaceOnUse" x1="1495" y1="0" x2="1536" y2="0"><stop offset="0.000" stop-color="#0d0099"/><stop offset="1.000" stop-color="#1a0099"/></linearGradient><linearGradient id="o177" gradientUnits="userSpaceOnUse" x1="1498" y1="0" x2="1533" y2="0"><stop offset="0.000" stop-color="#0d0099"/><stop offset="1.000" stop-color="#180099"/></linearGradient><linearGradient id="o178" gradientUnits="userSpaceOnUse" x1="1501" y1="0" x2="1531" y2="0"><stop offset="0.000" stop-color="#0e0099"/><stop offset="1.000" stop-color="#170099"/></linearGradient><linearGradient id="o179" gradientUnits="userSpaceOnUse" x1="1505" y1="0" x2="1528" y2="0"><stop offset="0.000" stop-color="#0f0099"/><stop offset="1.000" stop-color="#160099"/></linearGradient><linearGradient id="o180" gradientUnits="userSpaceOnUse" x1="1508" y1="0" x2="1525" y2="0"><stop offset="0.000" stop-color="#100099"/><stop offset="1.000" stop-color="#150099"/></linearGradient><linearGradient id="r0" gradientUnits="userSpaceOnUse" x1="1337" y1="0" x2="1352" y2="0"><stop offset="0.000" stop-color="#00ff01"/><stop offset="0.800" stop-color="#0dff00"/><stop offset="1.000" stop-color="#12ff00"/></linearGradient><linearGradient id="r1" gradientUnits="userSpaceOnUse" x1="1337" y1="0" x2="1379" y2="0"><stop offset="0.000" stop-color="#00ff03"/><stop offset="0.286" stop-color="#0cff01"/><stop offset="1.000" stop-color="#41ff00"/></linearGradient><linearGradient id="r2" gradientUnits="userSpaceOnUse" x1="1337" y1="0" x2="1406" y2="0"><stop offset="0.000" stop-color="#00ff08"/><stop offset="0.130" stop-color="#06ff06"/><stop offset="1.000" stop-color="#77ff00"/></linearGradient><linearGradient id="r3" gradientUnits="userSpaceOnUse" x1="1338" y1="0" x2="1434" y2="0"><stop offset="0.000" stop-color="#00ff0d"/><stop offset="0.094" stop-color="#07ff0b"/><stop offset="0.719" stop-color="#78ff01"/><stop offset="1.000" stop-color="#b7ff00"/></linearGradient><linearGradient id="r4" gradientUnits="userSpaceOnUse" x1="1339" y1="0" x2="1461" y2="0"><stop offset="0.000" stop-color="#00ff11"/><stop offset="0.098" stop-color="#0cff10"/><stop offset="0.590" stop-color="#81ff05"/><stop offset="1.000" stop-color="#ffff00"/></linearGradient><linearGradient id="r5" gradientUnits="userSpaceOnUse" x1="1339" y1="0" x2="1488" y2="0"><stop offset="0.000" stop-color="#00ff16"/><stop offset="0.060" stop-color="#06ff15"/><stop offset="0.463" stop-color="#7aff0c"/><stop offset="0.785" stop-color="#f1ff02"/><stop offset="0.826" stop-color="#fffc01"/><stop offset="1.000" stop-color="#ffc000"/></linearGradient><linearGradient id="r6" gradientUnits="userSpaceOnUse" x1="1340" y1="0" x2="1516" y2="0"><stop offset="0.000" stop-color="#00ff1b"/><stop offset="0.051" stop-color="#07ff1a"/><stop offset="0.392" stop-color="#7cff11"/><stop offset="0.665" stop-color="#f5ff08"/><stop offset="0.699" stop-color="#fff807"/><stop offset="0.869" stop-color="#ffb600"/><stop offset="1.000" stop-color="#ff9200"/></linearGradient><linearGradient id="r7" gradientUnits="userSpaceOnUse" x1="1341" y1="0" x2="1543" y2="0"><stop offset="0.000" stop-color="#00ff20"/><stop offset="0.059" stop-color="#0dff1f"/><stop offset="0.342" stop-color="#7eff17"/><stop offset="0.594" stop-color="#fffd0e"/><stop offset="0.743" stop-color="#ffb805"/><stop offset="0.950" stop-color="#ff7d00"/><stop offset="1.000" stop-color="#ff7200"/></linearGradient><linearGradient id="r8" gradientUnits="userSpaceOnUse" x1="1341" y1="0" x2="1570" y2="0"><stop offset="0.000" stop-color="#00ff25"/><stop offset="0.039" stop-color="#07ff24"/><stop offset="0.288" stop-color="#77ff1d"/><stop offset="0.498" stop-color="#f0ff16"/><stop offset="0.524" stop-color="#fffc14"/><stop offset="0.655" stop-color="#ffb70a"/><stop offset="0.838" stop-color="#ff7c02"/><stop offset="1.000" stop-color="#ff5a00"/></linearGradient><linearGradient id="r9" gradientUnits="userSpaceOnUse" x1="1342" y1="0" x2="1597" y2="0"><stop offset="0.000" stop-color="#00ff2a"/><stop offset="0.035" stop-color="#07ff29"/><stop offset="0.259" stop-color="#78ff23"/><stop offset="0.447" stop-color="#f4ff1c"/><stop offset="0.471" stop-color="#fff91b"/><stop offset="0.588" stop-color="#ffb50f"/><stop offset="0.753" stop-color="#ff7a06"/><stop offset="1.000" stop-color="#ff4700"/></linearGradient><linearGradient id="r10" gradientUnits="userSpaceOnUse" x1="1343" y1="0" x2="1625" y2="0"><stop offset="0.000" stop-color="#00ff2f"/><stop offset="0.043" stop-color="#0dff2e"/><stop offset="0.245" stop-color="#81ff29"/><stop offset="0.415" stop-color="#fffe22"/><stop offset="0.511" stop-color="#ffbd16"/><stop offset="0.649" stop-color="#ff820c"/><stop offset="0.862" stop-color="#ff4d02"/><stop offset="1.000" stop-color="#ff3700"/></linearGradient><linearGradient id="r11" gradientUnits="userSpaceOnUse" x1="1343" y1="0" x2="1652" y2="0"><stop offset="0.000" stop-color="#00ff35"/><stop offset="0.029" stop-color="#07ff34"/><stop offset="0.214" stop-color="#7aff2f"/><stop offset="0.359" stop-color="#efff2a"/><stop offset="0.379" stop-color="#fffd29"/><stop offset="0.466" stop-color="#ffbc1c"/><stop offset="0.592" stop-color="#ff8110"/><stop offset="0.786" stop-color="#ff4c05"/><stop offset="1.000" stop-color="#ff2a00"/></linearGradient><linearGradient id="r12" gradientUnits="userSpaceOnUse" x1="1344" y1="0" x2="1679" y2="0"><stop offset="0.000" stop-color="#00ff3a"/><stop offset="0.027" stop-color="#08ff3a"/><stop offset="0.197" stop-color="#7cff36"/><stop offset="0.331" stop-color="#f3ff31"/><stop offset="0.349" stop-color="#fff930"/><stop offset="0.430" stop-color="#ffb921"/><stop offset="0.546" stop-color="#ff7f14"/><stop offset="0.725" stop-color="#ff4a08"/><stop offset="1.000" stop-color="#ff1f00"/></linearGradient><linearGradient id="r13" gradientUnits="userSpaceOnUse" x1="1345" y1="0" x2="1707" y2="0"><stop offset="0.000" stop-color="#00ff40"/><stop offset="0.025" stop-color="#08ff3f"/><stop offset="0.174" stop-color="#77ff3c"/><stop offset="0.298" stop-color="#edff39"/><stop offset="0.315" stop-color="#fffe38"/><stop offset="0.390" stop-color="#ffbc28"/><stop offset="0.497" stop-color="#ff8019"/><stop offset="0.663" stop-color="#ff4b0b"/><stop offset="0.928" stop-color="#ff1e00"/><stop offset="1.000" stop-color="#ff1600"/></linearGradient><linearGradient id="r14" gradientUnits="userSpaceOnUse" x1="1345" y1="0" x2="1734" y2="0"><stop offset="0.000" stop-color="#00ff45"/><stop offset="0.023" stop-color="#07ff45"/><stop offset="0.162" stop-color="#77ff43"/><stop offset="0.278" stop-color="#eeff40"/><stop offset="0.293" stop-color="#fffe3f"/><stop offset="0.362" stop-color="#ffbb2d"/><stop offset="0.463" stop-color="#ff7f1d"/><stop offset="0.617" stop-color="#ff4a0f"/><stop offset="0.864" stop-color="#ff1d02"/><stop offset="1.000" stop-color="#ff0e00"/></linearGradient><linearGradient id="r15" gradientUnits="userSpaceOnUse" x1="1346" y1="0" x2="1761" y2="0"><stop offset="0.000" stop-color="#00ff4b"/><stop offset="0.022" stop-color="#08ff4b"/><stop offset="0.152" stop-color="#79ff49"/><stop offset="0.260" stop-color="#f2ff47"/><stop offset="0.275" stop-color="#fffa46"/><stop offset="0.340" stop-color="#ffb832"/><stop offset="0.434" stop-color="#ff7d21"/><stop offset="0.578" stop-color="#ff4912"/><stop offset="0.817" stop-color="#ff1b04"/><stop offset="1.000" stop-color="#ff0700"/></linearGradient><linearGradient id="r16" gradientUnits="userSpaceOnUse" x1="1347" y1="0" x2="1788" y2="0"><stop offset="0.000" stop-color="#00ff51"/><stop offset="0.020" stop-color="#08ff51"/><stop offset="0.143" stop-color="#7bff50"/><stop offset="0.245" stop-color="#f5ff4f"/><stop offset="0.252" stop-color="#ffff4f"/><stop offset="0.313" stop-color="#ffbb39"/><stop offset="0.401" stop-color="#ff7f26"/><stop offset="0.537" stop-color="#ff4915"/><stop offset="0.755" stop-color="#ff1c07"/><stop offset="1.000" stop-color="#ff0100"/></linearGradient><linearGradient id="r17" gradientUnits="userSpaceOnUse" x1="1347" y1="0" x2="1794" y2="0"><stop offset="0.000" stop-color="#00ff57"/><stop offset="0.020" stop-color="#07ff57"/><stop offset="0.141" stop-color="#7aff57"/><stop offset="0.242" stop-color="#f6ff57"/><stop offset="0.248" stop-color="#fffe57"/><stop offset="0.309" stop-color="#ffba3f"/><stop offset="0.396" stop-color="#ff7e2b"/><stop offset="0.530" stop-color="#ff4819"/><stop offset="0.745" stop-color="#ff1b09"/><stop offset="1.000" stop-color="#ff0000"/></linearGradient><linearGradient id="r18" gradientUnits="userSpaceOnUse" x1="1348" y1="0" x2="1793" y2="0"><stop offset="0.000" stop-color="#00ff5d"/><stop offset="0.020" stop-color="#08ff5d"/><stop offset="0.142" stop-color="#7cff5e"/><stop offset="0.236" stop-color="#f1ff5f"/><stop offset="0.249" stop-color="#fffa5d"/><stop offset="0.310" stop-color="#ffb745"/><stop offset="0.398" stop-color="#ff7b2f"/><stop offset="0.533" stop-color="#ff471c"/><stop offset="0.748" stop-color="#ff1a0c"/><stop offset="1.000" stop-color="#ff0002"/></linearGradient><linearGradient id="r19" gradientUnits="userSpaceOnUse" x1="1349" y1="0" x2="1789" y2="0"><stop offset="0.000" stop-color="#00ff63"/><stop offset="0.020" stop-color="#09ff63"/><stop offset="0.143" stop-color="#7eff65"/><stop offset="0.239" stop-color="#f5ff67"/><stop offset="0.245" stop-color="#feff67"/><stop offset="0.307" stop-color="#ffba4c"/><stop offset="0.389" stop-color="#ff8036"/><stop offset="0.518" stop-color="#ff4b21"/><stop offset="0.730" stop-color="#ff1d0f"/><stop offset="1.000" stop-color="#ff0004"/></linearGradient><linearGradient id="r20" gradientUnits="userSpaceOnUse" x1="1349" y1="0" x2="1786" y2="0"><stop offset="0.000" stop-color="#00ff69"/><stop offset="0.021" stop-color="#08ff69"/><stop offset="0.137" stop-color="#77ff6c"/><stop offset="0.233" stop-color="#ecff6f"/><stop offset="0.247" stop-color="#ffff6f"/><stop offset="0.302" stop-color="#ffc055"/><stop offset="0.384" stop-color="#ff833c"/><stop offset="0.508" stop-color="#ff4e26"/><stop offset="0.707" stop-color="#ff2113"/><stop offset="1.000" stop-color="#ff0006"/></linearGradient><linearGradient id="r21" gradientUnits="userSpaceOnUse" x1="1350" y1="0" x2="1783" y2="0"><stop offset="0.000" stop-color="#00ff6f"/><stop offset="0.021" stop-color="#08ff70"/><stop offset="0.139" stop-color="#79ff73"/><stop offset="0.236" stop-color="#f0ff77"/><stop offset="0.249" stop-color="#fffb76"/><stop offset="0.312" stop-color="#ffb658"/><stop offset="0.402" stop-color="#ff793d"/><stop offset="0.533" stop-color="#ff4627"/><stop offset="0.755" stop-color="#ff1913"/><stop offset="1.000" stop-color="#ff0008"/></linearGradient><linearGradient id="r22" gradientUnits="userSpaceOnUse" x1="1350" y1="0" x2="1780" y2="0"><stop offset="0.000" stop-color="#00ff75"/><stop offset="0.021" stop-color="#07ff76"/><stop offset="0.140" stop-color="#78ff7b"/><stop offset="0.237" stop-color="#f0ff7f"/><stop offset="0.251" stop-color="#fffa7e"/><stop offset="0.307" stop-color="#ffbb61"/><stop offset="0.391" stop-color="#ff8045"/><stop offset="0.516" stop-color="#ff4c2d"/><stop offset="0.726" stop-color="#ff1e18"/><stop offset="1.000" stop-color="#ff000a"/></linearGradient><linearGradient id="r23" gradientUnits="userSpaceOnUse" x1="1351" y1="0" x2="1777" y2="0"><stop offset="0.000" stop-color="#00ff7c"/><stop offset="0.021" stop-color="#08ff7d"/><stop offset="0.141" stop-color="#7aff82"/><stop offset="0.239" stop-color="#f4ff88"/><stop offset="0.246" stop-color="#feff89"/><stop offset="0.310" stop-color="#ffb866"/><stop offset="0.394" stop-color="#ff7e4a"/><stop offset="0.521" stop-color="#ff4a30"/><stop offset="0.732" stop-color="#ff1d1a"/><stop offset="1.000" stop-color="#ff000c"/></linearGradient><linearGradient id="r24" gradientUnits="userSpaceOnUse" x1="1352" y1="0" x2="1774" y2="0"><stop offset="0.000" stop-color="#00ff83"/><stop offset="0.021" stop-color="#09ff84"/><stop offset="0.142" stop-color="#7dff8a"/><stop offset="0.249" stop-color="#fffc90"/><stop offset="0.306" stop-color="#ffbb6f"/><stop offset="0.391" stop-color="#ff7f50"/><stop offset="0.519" stop-color="#ff4b35"/><stop offset="0.725" stop-color="#ff1e1e"/><stop offset="1.000" stop-color="#ff000e"/></linearGradient><linearGradient id="r25" gradientUnits="userSpaceOnUse" x1="1352" y1="0" x2="1771" y2="0"><stop offset="0.000" stop-color="#00ff89"/><stop offset="0.021" stop-color="#07ff8b"/><stop offset="0.143" stop-color="#7cff92"/><stop offset="0.251" stop-color="#fffb98"/><stop offset="0.308" stop-color="#ffba75"/><stop offset="0.394" stop-color="#ff7e55"/><stop offset="0.523" stop-color="#ff4a38"/><stop offset="0.730" stop-color="#ff1d20"/><stop offset="1.000" stop-color="#ff0010"/></linearGradient><linearGradient id="r26" gradientUnits="userSpaceOnUse" x1="1353" y1="0" x2="1768" y2="0"><stop offset="0.000" stop-color="#00ff90"/><stop offset="0.022" stop-color="#08ff92"/><stop offset="0.137" stop-color="#77ff9a"/><stop offset="0.239" stop-color="#f3ffa3"/><stop offset="0.246" stop-color="#fdffa4"/><stop offset="0.311" stop-color="#ffb77b"/><stop offset="0.398" stop-color="#ff7c59"/><stop offset="0.528" stop-color="#ff483c"/><stop offset="0.745" stop-color="#ff1b22"/><stop offset="1.000" stop-color="#ff0012"/></linearGradient><linearGradient id="r27" gradientUnits="userSpaceOnUse" x1="1354" y1="0" x2="1765" y2="0"><stop offset="0.000" stop-color="#00ff97"/><stop offset="0.022" stop-color="#09ff99"/><stop offset="0.139" stop-color="#79ffa2"/><stop offset="0.234" stop-color="#edffac"/><stop offset="0.248" stop-color="#fffcac"/><stop offset="0.307" stop-color="#ffba84"/><stop offset="0.394" stop-color="#ff7d60"/><stop offset="0.526" stop-color="#ff4840"/><stop offset="0.737" stop-color="#ff1c25"/><stop offset="1.000" stop-color="#ff0014"/></linearGradient><linearGradient id="r28" gradientUnits="userSpaceOnUse" x1="1354" y1="0" x2="1761" y2="0"><stop offset="0.000" stop-color="#00ff9e"/><stop offset="0.022" stop-color="#08ffa0"/><stop offset="0.140" stop-color="#78ffaa"/><stop offset="0.236" stop-color="#eeffb5"/><stop offset="0.251" stop-color="#fffbb4"/><stop offset="0.310" stop-color="#ffb98b"/><stop offset="0.398" stop-color="#ff7c65"/><stop offset="0.531" stop-color="#ff4744"/><stop offset="0.744" stop-color="#ff1b28"/><stop offset="1.000" stop-color="#ff0017"/></linearGradient><linearGradient id="r29" gradientUnits="userSpaceOnUse" x1="1355" y1="0" x2="1758" y2="0"><stop offset="0.000" stop-color="#00ffa6"/><stop offset="0.022" stop-color="#08ffa8"/><stop offset="0.141" stop-color="#7bffb3"/><stop offset="0.238" stop-color="#f2ffbf"/><stop offset="0.246" stop-color="#fdffc0"/><stop offset="0.313" stop-color="#ffb691"/><stop offset="0.402" stop-color="#ff7a69"/><stop offset="0.536" stop-color="#ff4647"/><stop offset="0.759" stop-color="#ff192a"/><stop offset="1.000" stop-color="#ff0019"/></linearGradient><linearGradient id="r30" gradientUnits="userSpaceOnUse" x1="1356" y1="0" x2="1755" y2="0"><stop offset="0.000" stop-color="#00ffad"/><stop offset="0.023" stop-color="#09ffaf"/><stop offset="0.143" stop-color="#7dffbc"/><stop offset="0.248" stop-color="#fffdc9"/><stop offset="0.308" stop-color="#ffb99b"/><stop offset="0.391" stop-color="#ff7f73"/><stop offset="0.519" stop-color="#ff4b4f"/><stop offset="0.729" stop-color="#ff1d30"/><stop offset="1.000" stop-color="#ff001b"/></linearGradient><linearGradient id="r31" gradientUnits="userSpaceOnUse" x1="1356" y1="0" x2="1752" y2="0"><stop offset="0.000" stop-color="#00ffb5"/><stop offset="0.023" stop-color="#08ffb7"/><stop offset="0.144" stop-color="#7dffc5"/><stop offset="0.250" stop-color="#fffcd2"/><stop offset="0.311" stop-color="#ffb8a2"/><stop offset="0.394" stop-color="#ff7e78"/><stop offset="0.523" stop-color="#ff4a53"/><stop offset="0.735" stop-color="#ff1c33"/><stop offset="1.000" stop-color="#ff001e"/></linearGradient><linearGradient id="r32" gradientUnits="userSpaceOnUse" x1="1357" y1="0" x2="1749" y2="0"><stop offset="0.000" stop-color="#00ffbc"/><stop offset="0.023" stop-color="#09ffbf"/><stop offset="0.138" stop-color="#77ffcd"/><stop offset="0.237" stop-color="#f1ffdd"/><stop offset="0.253" stop-color="#fff8d9"/><stop offset="0.314" stop-color="#ffb5a8"/><stop offset="0.398" stop-color="#ff7c7d"/><stop offset="0.528" stop-color="#ff4857"/><stop offset="0.742" stop-color="#ff1b35"/><stop offset="1.000" stop-color="#ff0020"/></linearGradient><linearGradient id="r33" gradientUnits="userSpaceOnUse" x1="1358" y1="0" x2="1746" y2="0"><stop offset="0.000" stop-color="#00ffc4"/><stop offset="0.023" stop-color="#0affc7"/><stop offset="0.139" stop-color="#79ffd7"/><stop offset="0.240" stop-color="#f5ffe8"/><stop offset="0.247" stop-color="#fffee8"/><stop offset="0.302" stop-color="#ffbfb8"/><stop offset="0.387" stop-color="#ff8188"/><stop offset="0.510" stop-color="#ff4d5f"/><stop offset="0.711" stop-color="#ff203c"/><stop offset="1.000" stop-color="#ff0023"/></linearGradient><linearGradient id="r34" gradientUnits="userSpaceOnUse" x1="1358" y1="0" x2="1743" y2="0"><stop offset="0.000" stop-color="#00ffcc"/><stop offset="0.023" stop-color="#08ffcf"/><stop offset="0.140" stop-color="#78ffe0"/><stop offset="0.234" stop-color="#ebfff1"/><stop offset="0.249" stop-color="#fffdf2"/><stop offset="0.304" stop-color="#ffbec0"/><stop offset="0.390" stop-color="#ff808e"/><stop offset="0.514" stop-color="#ff4c64"/><stop offset="0.717" stop-color="#ff1f3f"/><stop offset="1.000" stop-color="#ff0025"/></linearGradient><linearGradient id="r35" gradientUnits="userSpaceOnUse" x1="1359" y1="0" x2="1740" y2="0"><stop offset="0.000" stop-color="#00ffd5"/><stop offset="0.024" stop-color="#09ffd8"/><stop offset="0.142" stop-color="#7bffea"/><stop offset="0.236" stop-color="#f0fffd"/><stop offset="0.252" stop-color="#fff8f9"/><stop offset="0.315" stop-color="#ffb4c0"/><stop offset="0.402" stop-color="#ff798f"/><stop offset="0.535" stop-color="#ff4663"/><stop offset="0.756" stop-color="#ff193e"/><stop offset="1.000" stop-color="#ff0028"/></linearGradient><linearGradient id="r36" gradientUnits="userSpaceOnUse" x1="1360" y1="0" x2="1736" y2="0"><stop offset="0.000" stop-color="#00ffdd"/><stop offset="0.024" stop-color="#0affe0"/><stop offset="0.144" stop-color="#7dfff4"/><stop offset="0.223" stop-color="#d9faff"/><stop offset="0.255" stop-color="#fef2ff"/><stop offset="0.319" stop-color="#ffb0c5"/><stop offset="0.407" stop-color="#ff7793"/><stop offset="0.543" stop-color="#ff4467"/><stop offset="0.766" stop-color="#ff1840"/><stop offset="1.000" stop-color="#ff002a"/></linearGradient><linearGradient id="r37" gradientUnits="userSpaceOnUse" x1="1360" y1="0" x2="1733" y2="0"><stop offset="0.000" stop-color="#00ffe5"/><stop offset="0.024" stop-color="#09ffe9"/><stop offset="0.145" stop-color="#7dfffe"/><stop offset="0.265" stop-color="#fde6ff"/><stop offset="0.338" stop-color="#ffa2c1"/><stop offset="0.434" stop-color="#ff6a8f"/><stop offset="0.587" stop-color="#ff3861"/><stop offset="0.845" stop-color="#ff0e3b"/><stop offset="1.000" stop-color="#ff002d"/></linearGradient><linearGradient id="r38" gradientUnits="userSpaceOnUse" x1="1361" y1="0" x2="1730" y2="0"><stop offset="0.000" stop-color="#00ffee"/><stop offset="0.024" stop-color="#0afff2"/><stop offset="0.122" stop-color="#63faff"/><stop offset="0.276" stop-color="#ffdaff"/><stop offset="0.350" stop-color="#ff99c1"/><stop offset="0.455" stop-color="#ff618d"/><stop offset="0.618" stop-color="#ff315f"/><stop offset="0.894" stop-color="#ff0839"/><stop offset="1.000" stop-color="#ff0030"/></linearGradient><linearGradient id="r39" gradientUnits="userSpaceOnUse" x1="1362" y1="0" x2="1727" y2="0"><stop offset="0.000" stop-color="#00fff7"/><stop offset="0.025" stop-color="#0afffb"/><stop offset="0.238" stop-color="#cfdaff"/><stop offset="0.288" stop-color="#ffcdfd"/><stop offset="0.362" stop-color="#ff91c1"/><stop offset="0.477" stop-color="#ff598b"/><stop offset="0.658" stop-color="#ff295c"/><stop offset="0.970" stop-color="#ff0135"/><stop offset="1.000" stop-color="#ff0033"/></linearGradient><linearGradient id="r40" gradientUnits="userSpaceOnUse" x1="1362" y1="0" x2="1724" y2="0"><stop offset="0.000" stop-color="#00feff"/><stop offset="0.025" stop-color="#09faff"/><stop offset="0.240" stop-color="#c8d1ff"/><stop offset="0.298" stop-color="#ffc4fd"/><stop offset="0.373" stop-color="#ff8ac3"/><stop offset="0.489" stop-color="#ff558d"/><stop offset="0.671" stop-color="#ff275e"/><stop offset="0.986" stop-color="#ff0037"/><stop offset="1.000" stop-color="#ff0035"/></linearGradient><linearGradient id="r41" gradientUnits="userSpaceOnUse" x1="1363" y1="0" x2="1721" y2="0"><stop offset="0.000" stop-color="#00f5ff"/><stop offset="0.025" stop-color="#09f1ff"/><stop offset="0.251" stop-color="#cbc7ff"/><stop offset="0.310" stop-color="#ffb8fb"/><stop offset="0.394" stop-color="#ff7ebe"/><stop offset="0.520" stop-color="#ff4a88"/><stop offset="0.721" stop-color="#ff1e59"/><stop offset="1.000" stop-color="#ff0038"/></linearGradient><linearGradient id="r42" gradientUnits="userSpaceOnUse" x1="1364" y1="0" x2="1718" y2="0"><stop offset="0.000" stop-color="#00ecff"/><stop offset="0.025" stop-color="#0ae8ff"/><stop offset="0.263" stop-color="#cebdff"/><stop offset="0.314" stop-color="#fdb3ff"/><stop offset="0.407" stop-color="#ff77be"/><stop offset="0.534" stop-color="#ff4689"/><stop offset="0.737" stop-color="#ff1b5b"/><stop offset="1.000" stop-color="#ff003b"/></linearGradient><linearGradient id="r43" gradientUnits="userSpaceOnUse" x1="1364" y1="0" x2="1715" y2="0"><stop offset="0.000" stop-color="#00e5ff"/><stop offset="0.026" stop-color="#08e0ff"/><stop offset="0.274" stop-color="#cfb4ff"/><stop offset="0.325" stop-color="#fcaaff"/><stop offset="0.427" stop-color="#ff6dbb"/><stop offset="0.564" stop-color="#ff3e86"/><stop offset="0.786" stop-color="#ff1557"/><stop offset="1.000" stop-color="#ff003e"/></linearGradient><linearGradient id="r44" gradientUnits="userSpaceOnUse" x1="1365" y1="0" x2="1712" y2="0"><stop offset="0.000" stop-color="#00ddff"/><stop offset="0.026" stop-color="#09d9ff"/><stop offset="0.277" stop-color="#cbadff"/><stop offset="0.337" stop-color="#fea1ff"/><stop offset="0.432" stop-color="#ff6bbf"/><stop offset="0.571" stop-color="#ff3c89"/><stop offset="0.787" stop-color="#ff145b"/><stop offset="1.000" stop-color="#ff0041"/></linearGradient><linearGradient id="r45" gradientUnits="userSpaceOnUse" x1="1366" y1="0" x2="1708" y2="0"><stop offset="0.000" stop-color="#00d5ff"/><stop offset="0.026" stop-color="#09d1ff"/><stop offset="0.289" stop-color="#cea4ff"/><stop offset="0.351" stop-color="#ff98fe"/><stop offset="0.447" stop-color="#ff64bf"/><stop offset="0.588" stop-color="#ff388a"/><stop offset="0.816" stop-color="#ff115b"/><stop offset="1.000" stop-color="#ff0045"/></linearGradient><linearGradient id="r46" gradientUnits="userSpaceOnUse" x1="1366" y1="0" x2="1705" y2="0"><stop offset="0.000" stop-color="#00cfff"/><stop offset="0.027" stop-color="#08cbff"/><stop offset="0.301" stop-color="#ce9cff"/><stop offset="0.363" stop-color="#ff91ff"/><stop offset="0.460" stop-color="#ff5fc1"/><stop offset="0.602" stop-color="#ff358c"/><stop offset="0.832" stop-color="#ff0f5d"/><stop offset="1.000" stop-color="#ff0048"/></linearGradient><linearGradient id="r47" gradientUnits="userSpaceOnUse" x1="1367" y1="0" x2="1702" y2="0"><stop offset="0.000" stop-color="#00c8ff"/><stop offset="0.027" stop-color="#08c4ff"/><stop offset="0.304" stop-color="#ca96ff"/><stop offset="0.376" stop-color="#ff88fd"/><stop offset="0.475" stop-color="#ff5ac1"/><stop offset="0.627" stop-color="#ff2f8a"/><stop offset="0.869" stop-color="#ff0b5b"/><stop offset="1.000" stop-color="#ff004b"/></linearGradient><linearGradient id="r48" gradientUnits="userSpaceOnUse" x1="1367" y1="0" x2="1699" y2="0"><stop offset="0.000" stop-color="#00c2ff"/><stop offset="0.027" stop-color="#07beff"/><stop offset="0.316" stop-color="#cb8fff"/><stop offset="0.389" stop-color="#ff81fd"/><stop offset="0.488" stop-color="#ff55c2"/><stop offset="0.642" stop-color="#ff2c8c"/><stop offset="0.886" stop-color="#ff095d"/><stop offset="1.000" stop-color="#ff004f"/></linearGradient><linearGradient id="r49" gradientUnits="userSpaceOnUse" x1="1368" y1="0" x2="1696" y2="0"><stop offset="0.000" stop-color="#00bbff"/><stop offset="0.027" stop-color="#07b7ff"/><stop offset="0.329" stop-color="#cd88ff"/><stop offset="0.402" stop-color="#ff79fc"/><stop offset="0.512" stop-color="#ff4dbe"/><stop offset="0.677" stop-color="#ff2588"/><stop offset="0.942" stop-color="#ff0359"/><stop offset="1.000" stop-color="#ff0052"/></linearGradient><linearGradient id="r50" gradientUnits="userSpaceOnUse" x1="1369" y1="0" x2="1693" y2="0"><stop offset="0.000" stop-color="#00b5ff"/><stop offset="0.028" stop-color="#08b1ff"/><stop offset="0.333" stop-color="#c982ff"/><stop offset="0.407" stop-color="#fd76ff"/><stop offset="0.528" stop-color="#ff48be"/><stop offset="0.694" stop-color="#ff2289"/><stop offset="0.963" stop-color="#ff025a"/><stop offset="1.000" stop-color="#ff0056"/></linearGradient><linearGradient id="r51" gradientUnits="userSpaceOnUse" x1="1369" y1="0" x2="1690" y2="0"><stop offset="0.000" stop-color="#00b0ff"/><stop offset="0.028" stop-color="#07acff"/><stop offset="0.346" stop-color="#ca7cff"/><stop offset="0.430" stop-color="#ff6cfb"/><stop offset="0.542" stop-color="#ff44bf"/><stop offset="0.710" stop-color="#ff208a"/><stop offset="0.981" stop-color="#ff005c"/><stop offset="1.000" stop-color="#ff005a"/></linearGradient><linearGradient id="r52" gradientUnits="userSpaceOnUse" x1="1370" y1="0" x2="1687" y2="0"><stop offset="0.000" stop-color="#00aaff"/><stop offset="0.028" stop-color="#07a6ff"/><stop offset="0.360" stop-color="#cd75ff"/><stop offset="0.435" stop-color="#fe69ff"/><stop offset="0.558" stop-color="#ff3fbf"/><stop offset="0.738" stop-color="#ff1b89"/><stop offset="1.000" stop-color="#ff005d"/></linearGradient><linearGradient id="r53" gradientUnits="userSpaceOnUse" x1="1371" y1="0" x2="1683" y2="0"><stop offset="0.000" stop-color="#00a5ff"/><stop offset="0.038" stop-color="#0da0ff"/><stop offset="0.375" stop-color="#cf6fff"/><stop offset="0.452" stop-color="#ff63fe"/><stop offset="0.577" stop-color="#ff3bbf"/><stop offset="0.760" stop-color="#ff188a"/><stop offset="1.000" stop-color="#ff0061"/></linearGradient><linearGradient id="r54" gradientUnits="userSpaceOnUse" x1="1371" y1="0" x2="1680" y2="0"><stop offset="0.000" stop-color="#00a0ff"/><stop offset="0.029" stop-color="#069cff"/><stop offset="0.379" stop-color="#ca6bff"/><stop offset="0.466" stop-color="#ff5dff"/><stop offset="0.592" stop-color="#ff37c1"/><stop offset="0.777" stop-color="#ff168b"/><stop offset="1.000" stop-color="#ff0065"/></linearGradient><linearGradient id="r55" gradientUnits="userSpaceOnUse" x1="1372" y1="0" x2="1677" y2="0"><stop offset="0.000" stop-color="#009bff"/><stop offset="0.030" stop-color="#0797ff"/><stop offset="0.393" stop-color="#cc65ff"/><stop offset="0.482" stop-color="#ff57fd"/><stop offset="0.610" stop-color="#ff33c1"/><stop offset="0.807" stop-color="#ff128a"/><stop offset="1.000" stop-color="#ff0069"/></linearGradient><linearGradient id="r56" gradientUnits="userSpaceOnUse" x1="1373" y1="0" x2="1674" y2="0"><stop offset="0.000" stop-color="#0096ff"/><stop offset="0.040" stop-color="#0c91ff"/><stop offset="0.409" stop-color="#ce5fff"/><stop offset="0.498" stop-color="#ff51fc"/><stop offset="0.638" stop-color="#ff2dbd"/><stop offset="0.847" stop-color="#ff0d87"/><stop offset="1.000" stop-color="#ff006d"/></linearGradient><linearGradient id="r57" gradientUnits="userSpaceOnUse" x1="1373" y1="0" x2="1671" y2="0"><stop offset="0.000" stop-color="#0092ff"/><stop offset="0.030" stop-color="#068eff"/><stop offset="0.413" stop-color="#c95cff"/><stop offset="0.513" stop-color="#ff4cfc"/><stop offset="0.654" stop-color="#ff29be"/><stop offset="0.866" stop-color="#ff0b88"/><stop offset="1.000" stop-color="#ff0072"/></linearGradient><linearGradient id="r58" gradientUnits="userSpaceOnUse" x1="1374" y1="0" x2="1668" y2="0"><stop offset="0.000" stop-color="#008dff"/><stop offset="0.041" stop-color="#0b89ff"/><stop offset="0.439" stop-color="#d155ff"/><stop offset="0.531" stop-color="#ff47fb"/><stop offset="0.673" stop-color="#ff26be"/><stop offset="0.888" stop-color="#ff0989"/><stop offset="1.000" stop-color="#ff0076"/></linearGradient><linearGradient id="r59" gradientUnits="userSpaceOnUse" x1="1375" y1="0" x2="1665" y2="0"><stop offset="0.000" stop-color="#0089ff"/><stop offset="0.041" stop-color="#0b84ff"/><stop offset="0.445" stop-color="#ce51ff"/><stop offset="0.538" stop-color="#ff44ff"/><stop offset="0.683" stop-color="#ff24c2"/><stop offset="0.900" stop-color="#ff078b"/><stop offset="1.000" stop-color="#ff007a"/></linearGradient><linearGradient id="r60" gradientUnits="userSpaceOnUse" x1="1375" y1="0" x2="1662" y2="0"><stop offset="0.000" stop-color="#0085ff"/><stop offset="0.042" stop-color="#0a80ff"/><stop offset="0.460" stop-color="#ce4dff"/><stop offset="0.554" stop-color="#ff40ff"/><stop offset="0.711" stop-color="#ff1fbf"/><stop offset="0.941" stop-color="#ff0389"/><stop offset="1.000" stop-color="#ff007f"/></linearGradient><linearGradient id="r61" gradientUnits="userSpaceOnUse" x1="1376" y1="0" x2="1658" y2="0"><stop offset="0.000" stop-color="#0081ff"/><stop offset="0.043" stop-color="#0b7cff"/><stop offset="0.479" stop-color="#d048ff"/><stop offset="0.574" stop-color="#ff3bfe"/><stop offset="0.734" stop-color="#ff1cbf"/><stop offset="0.968" stop-color="#ff018a"/><stop offset="1.000" stop-color="#ff0084"/></linearGradient><linearGradient id="r62" gradientUnits="userSpaceOnUse" x1="1377" y1="0" x2="1655" y2="0"><stop offset="0.000" stop-color="#007dff"/><stop offset="0.054" stop-color="#0f77ff"/><stop offset="0.496" stop-color="#d243ff"/><stop offset="0.594" stop-color="#ff36fd"/><stop offset="0.755" stop-color="#ff19bf"/><stop offset="1.000" stop-color="#ff0089"/></linearGradient><linearGradient id="r63" gradientUnits="userSpaceOnUse" x1="1377" y1="0" x2="1652" y2="0"><stop offset="0.000" stop-color="#007aff"/><stop offset="0.044" stop-color="#0a75ff"/><stop offset="0.502" stop-color="#cd41ff"/><stop offset="0.611" stop-color="#ff32fd"/><stop offset="0.775" stop-color="#ff16c0"/><stop offset="1.000" stop-color="#ff008e"/></linearGradient><linearGradient id="r64" gradientUnits="userSpaceOnUse" x1="1378" y1="0" x2="1649" y2="0"><stop offset="0.000" stop-color="#0076ff"/><stop offset="0.044" stop-color="#0a71ff"/><stop offset="0.520" stop-color="#cf3cff"/><stop offset="0.631" stop-color="#ff2efc"/><stop offset="0.808" stop-color="#ff11bd"/><stop offset="1.000" stop-color="#ff0093"/></linearGradient><linearGradient id="r65" gradientUnits="userSpaceOnUse" x1="1379" y1="0" x2="1646" y2="0"><stop offset="0.000" stop-color="#0072ff"/><stop offset="0.056" stop-color="#0f6dff"/><stop offset="0.539" stop-color="#d138ff"/><stop offset="0.652" stop-color="#ff2afb"/><stop offset="0.831" stop-color="#ff0fbd"/><stop offset="1.000" stop-color="#ff0098"/></linearGradient><linearGradient id="r66" gradientUnits="userSpaceOnUse" x1="1379" y1="0" x2="1643" y2="0"><stop offset="0.000" stop-color="#006fff"/><stop offset="0.045" stop-color="#096bff"/><stop offset="0.545" stop-color="#cd36ff"/><stop offset="0.670" stop-color="#ff26fb"/><stop offset="0.852" stop-color="#ff0cbe"/><stop offset="1.000" stop-color="#ff009e"/></linearGradient><linearGradient id="r67" gradientUnits="userSpaceOnUse" x1="1380" y1="0" x2="1640" y2="0"><stop offset="0.000" stop-color="#006cff"/><stop offset="0.058" stop-color="#0e66ff"/><stop offset="0.577" stop-color="#d430ff"/><stop offset="0.681" stop-color="#ff24ff"/><stop offset="0.865" stop-color="#ff0bc1"/><stop offset="1.000" stop-color="#ff00a3"/></linearGradient><linearGradient id="r68" gradientUnits="userSpaceOnUse" x1="1381" y1="0" x2="1637" y2="0"><stop offset="0.000" stop-color="#0069ff"/><stop offset="0.070" stop-color="#1262ff"/><stop offset="0.598" stop-color="#d52cff"/><stop offset="0.703" stop-color="#ff20fe"/><stop offset="0.891" stop-color="#ff08c1"/><stop offset="1.000" stop-color="#ff00a9"/></linearGradient><linearGradient id="r69" gradientUnits="userSpaceOnUse" x1="1381" y1="0" x2="1634" y2="0"><stop offset="0.000" stop-color="#0066ff"/><stop offset="0.059" stop-color="#0d60ff"/><stop offset="0.605" stop-color="#d12aff"/><stop offset="0.723" stop-color="#ff1dfe"/><stop offset="0.925" stop-color="#ff04bf"/><stop offset="1.000" stop-color="#ff00af"/></linearGradient><linearGradient id="r70" gradientUnits="userSpaceOnUse" x1="1382" y1="0" x2="1630" y2="0"><stop offset="0.000" stop-color="#0063ff"/><stop offset="0.060" stop-color="#0d5dff"/><stop offset="0.629" stop-color="#d326ff"/><stop offset="0.750" stop-color="#ff19fd"/><stop offset="0.956" stop-color="#ff02bf"/><stop offset="1.000" stop-color="#ff00b5"/></linearGradient><linearGradient id="r71" gradientUnits="userSpaceOnUse" x1="1383" y1="0" x2="1627" y2="0"><stop offset="0.000" stop-color="#0060ff"/><stop offset="0.086" stop-color="#1558ff"/><stop offset="0.664" stop-color="#d921ff"/><stop offset="0.775" stop-color="#ff16fc"/><stop offset="0.984" stop-color="#ff00bf"/><stop offset="1.000" stop-color="#ff00bc"/></linearGradient><linearGradient id="r72" gradientUnits="userSpaceOnUse" x1="1383" y1="0" x2="1624" y2="0"><stop offset="0.000" stop-color="#005dff"/><stop offset="0.062" stop-color="#0c58ff"/><stop offset="0.660" stop-color="#d021ff"/><stop offset="0.797" stop-color="#ff13fc"/><stop offset="1.000" stop-color="#ff00c2"/></linearGradient><linearGradient id="r73" gradientUnits="userSpaceOnUse" x1="1384" y1="0" x2="1621" y2="0"><stop offset="0.000" stop-color="#005aff"/><stop offset="0.076" stop-color="#1054ff"/><stop offset="0.696" stop-color="#d61cff"/><stop offset="0.823" stop-color="#ff0ffb"/><stop offset="1.000" stop-color="#ff00c9"/></linearGradient><linearGradient id="r74" gradientUnits="userSpaceOnUse" x1="1384" y1="0" x2="1618" y2="0"><stop offset="0.000" stop-color="#0058ff"/><stop offset="0.064" stop-color="#0c52ff"/><stop offset="0.705" stop-color="#d21aff"/><stop offset="0.846" stop-color="#ff0dfb"/><stop offset="1.000" stop-color="#ff00d0"/></linearGradient><linearGradient id="r75" gradientUnits="userSpaceOnUse" x1="1385" y1="0" x2="1615" y2="0"><stop offset="0.000" stop-color="#0055ff"/><stop offset="0.078" stop-color="#104fff"/><stop offset="0.730" stop-color="#d417ff"/><stop offset="0.874" stop-color="#ff09fa"/><stop offset="1.000" stop-color="#ff00d7"/></linearGradient><linearGradient id="r76" gradientUnits="userSpaceOnUse" x1="1386" y1="0" x2="1612" y2="0"><stop offset="0.000" stop-color="#0052ff"/><stop offset="0.093" stop-color="#134bff"/><stop offset="0.770" stop-color="#da13ff"/><stop offset="0.889" stop-color="#ff08fe"/><stop offset="1.000" stop-color="#ff00de"/></linearGradient><linearGradient id="r77" gradientUnits="userSpaceOnUse" x1="1386" y1="0" x2="1609" y2="0"><stop offset="0.000" stop-color="#0050ff"/><stop offset="0.067" stop-color="#0b4bff"/><stop offset="0.767" stop-color="#d212ff"/><stop offset="0.915" stop-color="#ff05fe"/><stop offset="1.000" stop-color="#ff00e5"/></linearGradient><linearGradient id="r78" gradientUnits="userSpaceOnUse" x1="1387" y1="0" x2="1605" y2="0"><stop offset="0.000" stop-color="#004dff"/><stop offset="0.083" stop-color="#0f48ff"/><stop offset="0.798" stop-color="#d30fff"/><stop offset="0.950" stop-color="#ff02fd"/><stop offset="1.000" stop-color="#ff00ef"/></linearGradient><linearGradient id="r79" gradientUnits="userSpaceOnUse" x1="1388" y1="0" x2="1602" y2="0"><stop offset="0.000" stop-color="#004bff"/><stop offset="0.112" stop-color="#1643ff"/><stop offset="0.855" stop-color="#dd0aff"/><stop offset="0.981" stop-color="#ff00fc"/><stop offset="1.000" stop-color="#ff00f7"/></linearGradient><linearGradient id="r80" gradientUnits="userSpaceOnUse" x1="1388" y1="0" x2="1599" y2="0"><stop offset="0.000" stop-color="#0049ff"/><stop offset="0.085" stop-color="#0e43ff"/><stop offset="0.853" stop-color="#d50aff"/><stop offset="1.000" stop-color="#ff00ff"/></linearGradient><linearGradient id="r81" gradientUnits="userSpaceOnUse" x1="1389" y1="0" x2="1596" y2="0"><stop offset="0.000" stop-color="#0047ff"/><stop offset="0.101" stop-color="#1240ff"/><stop offset="0.884" stop-color="#d707ff"/><stop offset="1.000" stop-color="#f600ff"/></linearGradient><linearGradient id="r82" gradientUnits="userSpaceOnUse" x1="1390" y1="0" x2="1593" y2="0"><stop offset="0.000" stop-color="#0044ff"/><stop offset="0.133" stop-color="#193cff"/><stop offset="0.946" stop-color="#e002ff"/><stop offset="1.000" stop-color="#ee00ff"/></linearGradient><linearGradient id="r83" gradientUnits="userSpaceOnUse" x1="1390" y1="0" x2="1590" y2="0"><stop offset="0.000" stop-color="#0042ff"/><stop offset="0.090" stop-color="#0e3dff"/><stop offset="0.930" stop-color="#d403ff"/><stop offset="1.000" stop-color="#e600ff"/></linearGradient><linearGradient id="r84" gradientUnits="userSpaceOnUse" x1="1391" y1="0" x2="1587" y2="0"><stop offset="0.000" stop-color="#0040ff"/><stop offset="0.122" stop-color="#1539ff"/><stop offset="0.980" stop-color="#da00ff"/><stop offset="1.000" stop-color="#df00ff"/></linearGradient><linearGradient id="r85" gradientUnits="userSpaceOnUse" x1="1392" y1="0" x2="1584" y2="0"><stop offset="0.000" stop-color="#003eff"/><stop offset="0.172" stop-color="#1e34ff"/><stop offset="1.000" stop-color="#d700ff"/></linearGradient><linearGradient id="r86" gradientUnits="userSpaceOnUse" x1="1392" y1="0" x2="1580" y2="0"><stop offset="0.000" stop-color="#003cff"/><stop offset="0.112" stop-color="#1136ff"/><stop offset="1.000" stop-color="#cf00ff"/></linearGradient><linearGradient id="r87" gradientUnits="userSpaceOnUse" x1="1393" y1="0" x2="1577" y2="0"><stop offset="0.000" stop-color="#003aff"/><stop offset="0.147" stop-color="#1732ff"/><stop offset="1.000" stop-color="#c800ff"/></linearGradient><linearGradient id="r88" gradientUnits="userSpaceOnUse" x1="1394" y1="0" x2="1574" y2="0"><stop offset="0.000" stop-color="#0038ff"/><stop offset="0.233" stop-color="#272cff"/><stop offset="1.000" stop-color="#c100ff"/></linearGradient><linearGradient id="r89" gradientUnits="userSpaceOnUse" x1="1394" y1="0" x2="1571" y2="0"><stop offset="0.000" stop-color="#0037ff"/><stop offset="0.136" stop-color="#132fff"/><stop offset="1.000" stop-color="#ba00ff"/></linearGradient><linearGradient id="r90" gradientUnits="userSpaceOnUse" x1="1395" y1="0" x2="1568" y2="0"><stop offset="0.000" stop-color="#0035ff"/><stop offset="0.191" stop-color="#1c2bff"/><stop offset="1.000" stop-color="#b400ff"/></linearGradient><linearGradient id="r91" gradientUnits="userSpaceOnUse" x1="1396" y1="0" x2="1565" y2="0"><stop offset="0.000" stop-color="#0033ff"/><stop offset="0.320" stop-color="#3223ff"/><stop offset="1.000" stop-color="#ae00ff"/></linearGradient><linearGradient id="r92" gradientUnits="userSpaceOnUse" x1="1396" y1="0" x2="1562" y2="0"><stop offset="0.000" stop-color="#0031ff"/><stop offset="0.163" stop-color="#1529ff"/><stop offset="1.000" stop-color="#a700ff"/></linearGradient><linearGradient id="r93" gradientUnits="userSpaceOnUse" x1="1397" y1="0" x2="1559" y2="0"><stop offset="0.000" stop-color="#0030ff"/><stop offset="0.259" stop-color="#2423ff"/><stop offset="1.000" stop-color="#a100ff"/></linearGradient><linearGradient id="r94" gradientUnits="userSpaceOnUse" x1="1398" y1="0" x2="1556" y2="0"><stop offset="0.000" stop-color="#002eff"/><stop offset="0.475" stop-color="#4518ff"/><stop offset="1.000" stop-color="#9c00ff"/></linearGradient><linearGradient id="r95" gradientUnits="userSpaceOnUse" x1="1398" y1="0" x2="1552" y2="0"><stop offset="0.000" stop-color="#002cff"/><stop offset="0.214" stop-color="#1b23ff"/><stop offset="1.000" stop-color="#9500ff"/></linearGradient><linearGradient id="r96" gradientUnits="userSpaceOnUse" x1="1399" y1="0" x2="1549" y2="0"><stop offset="0.000" stop-color="#002bff"/><stop offset="0.360" stop-color="#2f1bff"/><stop offset="1.000" stop-color="#8f00ff"/></linearGradient><linearGradient id="r97" gradientUnits="userSpaceOnUse" x1="1399" y1="0" x2="1546" y2="0"><stop offset="0.000" stop-color="#0029ff"/><stop offset="0.204" stop-color="#1721ff"/><stop offset="1.000" stop-color="#8a00ff"/></linearGradient><linearGradient id="r98" gradientUnits="userSpaceOnUse" x1="1400" y1="0" x2="1543" y2="0"><stop offset="0.000" stop-color="#0028ff"/><stop offset="0.294" stop-color="#221cff"/><stop offset="1.000" stop-color="#8500ff"/></linearGradient><linearGradient id="r99" gradientUnits="userSpaceOnUse" x1="1401" y1="0" x2="1540" y2="0"><stop offset="0.000" stop-color="#0026ff"/><stop offset="0.518" stop-color="#3e12ff"/><stop offset="1.000" stop-color="#8000ff"/></linearGradient><linearGradient id="r100" gradientUnits="userSpaceOnUse" x1="1401" y1="0" x2="1537" y2="0"><stop offset="0.000" stop-color="#0025ff"/><stop offset="0.243" stop-color="#191cff"/><stop offset="1.000" stop-color="#7b00ff"/></linearGradient><linearGradient id="r101" gradientUnits="userSpaceOnUse" x1="1402" y1="0" x2="1534" y2="0"><stop offset="0.000" stop-color="#0023ff"/><stop offset="0.409" stop-color="#2c15ff"/><stop offset="1.000" stop-color="#7600ff"/></linearGradient><linearGradient id="r102" gradientUnits="userSpaceOnUse" x1="1403" y1="0" x2="1531" y2="0"><stop offset="0.000" stop-color="#0022ff"/><stop offset="0.773" stop-color="#5607ff"/><stop offset="1.000" stop-color="#7100ff"/></linearGradient><linearGradient id="r103" gradientUnits="userSpaceOnUse" x1="1403" y1="0" x2="1527" y2="0"><stop offset="0.000" stop-color="#0021ff"/><stop offset="0.339" stop-color="#2015ff"/><stop offset="1.000" stop-color="#6c00ff"/></linearGradient><linearGradient id="r104" gradientUnits="userSpaceOnUse" x1="1404" y1="0" x2="1524" y2="0"><stop offset="0.000" stop-color="#001fff"/><stop offset="0.575" stop-color="#380dff"/><stop offset="1.000" stop-color="#6700ff"/></linearGradient><linearGradient id="r105" gradientUnits="userSpaceOnUse" x1="1405" y1="0" x2="1521" y2="0"><stop offset="0.000" stop-color="#001eff"/><stop offset="1.000" stop-color="#6300ff"/></linearGradient><linearGradient id="r106" gradientUnits="userSpaceOnUse" x1="1405" y1="0" x2="1518" y2="0"><stop offset="0.000" stop-color="#001dff"/><stop offset="0.451" stop-color="#270fff"/><stop offset="1.000" stop-color="#5e00ff"/></linearGradient><linearGradient id="r107" gradientUnits="userSpaceOnUse" x1="1406" y1="0" x2="1515" y2="0"><stop offset="0.000" stop-color="#001bff"/><stop offset="0.881" stop-color="#4f02ff"/><stop offset="1.000" stop-color="#5a00ff"/></linearGradient><linearGradient id="r108" gradientUnits="userSpaceOnUse" x1="1407" y1="0" x2="1512" y2="0"><stop offset="0.000" stop-color="#001aff"/><stop offset="1.000" stop-color="#5600ff"/></linearGradient><linearGradient id="r109" gradientUnits="userSpaceOnUse" x1="1407" y1="0" x2="1509" y2="0"><stop offset="0.000" stop-color="#0019ff"/><stop offset="0.676" stop-color="#3507ff"/><stop offset="1.000" stop-color="#5200ff"/></linearGradient><linearGradient id="r110" gradientUnits="userSpaceOnUse" x1="1408" y1="0" x2="1506" y2="0"><stop offset="0.000" stop-color="#0018ff"/><stop offset="1.000" stop-color="#4e00ff"/></linearGradient><linearGradient id="r111" gradientUnits="userSpaceOnUse" x1="1409" y1="0" x2="1502" y2="0"><stop offset="0.000" stop-color="#0016ff"/><stop offset="1.000" stop-color="#4900ff"/></linearGradient><linearGradient id="r112" gradientUnits="userSpaceOnUse" x1="1409" y1="0" x2="1499" y2="0"><stop offset="0.000" stop-color="#0015ff"/><stop offset="1.000" stop-color="#4600ff"/></linearGradient><linearGradient id="r113" gradientUnits="userSpaceOnUse" x1="1410" y1="0" x2="1496" y2="0"><stop offset="0.000" stop-color="#0014ff"/><stop offset="1.000" stop-color="#4200ff"/></linearGradient><linearGradient id="r114" gradientUnits="userSpaceOnUse" x1="1411" y1="0" x2="1493" y2="0"><stop offset="0.000" stop-color="#0013ff"/><stop offset="1.000" stop-color="#3e00ff"/></linearGradient><linearGradient id="r115" gradientUnits="userSpaceOnUse" x1="1411" y1="0" x2="1490" y2="0"><stop offset="0.000" stop-color="#0012ff"/><stop offset="1.000" stop-color="#3b00ff"/></linearGradient><linearGradient id="r116" gradientUnits="userSpaceOnUse" x1="1412" y1="0" x2="1487" y2="0"><stop offset="0.000" stop-color="#0011ff"/><stop offset="1.000" stop-color="#3700ff"/></linearGradient><linearGradient id="r117" gradientUnits="userSpaceOnUse" x1="1413" y1="0" x2="1484" y2="0"><stop offset="0.000" stop-color="#0010ff"/><stop offset="1.000" stop-color="#3400ff"/></linearGradient><linearGradient id="r118" gradientUnits="userSpaceOnUse" x1="1413" y1="0" x2="1481" y2="0"><stop offset="0.000" stop-color="#000fff"/><stop offset="1.000" stop-color="#3100ff"/></linearGradient><linearGradient id="r119" gradientUnits="userSpaceOnUse" x1="1414" y1="0" x2="1478" y2="0"><stop offset="0.000" stop-color="#000eff"/><stop offset="1.000" stop-color="#2d00ff"/></linearGradient><linearGradient id="r120" gradientUnits="userSpaceOnUse" x1="1415" y1="0" x2="1474" y2="0"><stop offset="0.000" stop-color="#000dff"/><stop offset="1.000" stop-color="#2900ff"/></linearGradient><linearGradient id="r121" gradientUnits="userSpaceOnUse" x1="1415" y1="0" x2="1471" y2="0"><stop offset="0.000" stop-color="#000cff"/><stop offset="1.000" stop-color="#2600ff"/></linearGradient><linearGradient id="r122" gradientUnits="userSpaceOnUse" x1="1416" y1="0" x2="1468" y2="0"><stop offset="0.000" stop-color="#000bff"/><stop offset="1.000" stop-color="#2300ff"/></linearGradient><linearGradient id="r123" gradientUnits="userSpaceOnUse" x1="1416" y1="0" x2="1465" y2="0"><stop offset="0.000" stop-color="#000aff"/><stop offset="1.000" stop-color="#2000ff"/></linearGradient><linearGradient id="r124" gradientUnits="userSpaceOnUse" x1="1417" y1="0" x2="1462" y2="0"><stop offset="0.000" stop-color="#0009ff"/><stop offset="1.000" stop-color="#1d00ff"/></linearGradient><linearGradient id="r125" gradientUnits="userSpaceOnUse" x1="1418" y1="0" x2="1459" y2="0"><stop offset="0.000" stop-color="#0008ff"/><stop offset="1.000" stop-color="#1a00ff"/></linearGradient><linearGradient id="r126" gradientUnits="userSpaceOnUse" x1="1418" y1="0" x2="1456" y2="0"><stop offset="0.000" stop-color="#0007ff"/><stop offset="1.000" stop-color="#1700ff"/></linearGradient><linearGradient id="r127" gradientUnits="userSpaceOnUse" x1="1419" y1="0" x2="1453" y2="0"><stop offset="0.000" stop-color="#0006ff"/><stop offset="1.000" stop-color="#1500ff"/></linearGradient><linearGradient id="r128" gradientUnits="userSpaceOnUse" x1="1420" y1="0" x2="1449" y2="0"><stop offset="0.000" stop-color="#0005ff"/><stop offset="1.000" stop-color="#1100ff"/></linearGradient><linearGradient id="r129" gradientUnits="userSpaceOnUse" x1="1420" y1="0" x2="1446" y2="0"><stop offset="0.000" stop-color="#0004ff"/><stop offset="1.000" stop-color="#0e00ff"/></linearGradient><linearGradient id="r130" gradientUnits="userSpaceOnUse" x1="1421" y1="0" x2="1443" y2="0"><stop offset="0.000" stop-color="#0004ff"/><stop offset="1.000" stop-color="#0c00ff"/></linearGradient><linearGradient id="r131" gradientUnits="userSpaceOnUse" x1="1422" y1="0" x2="1440" y2="0"><stop offset="0.000" stop-color="#0003ff"/><stop offset="1.000" stop-color="#0900ff"/></linearGradient><linearGradient id="r132" gradientUnits="userSpaceOnUse" x1="1422" y1="0" x2="1437" y2="0"><stop offset="0.000" stop-color="#0002ff"/><stop offset="1.000" stop-color="#0700ff"/></linearGradient><linearGradient id="r133" gradientUnits="userSpaceOnUse" x1="1423" y1="0" x2="1434" y2="0"><stop offset="0.000" stop-color="#0001ff"/><stop offset="1.000" stop-color="#0400ff"/></linearGradient><linearGradient id="r134" gradientUnits="userSpaceOnUse" x1="1423" y1="0" x2="1432" y2="0"><stop offset="0.000" stop-color="#0001ff"/><stop offset="1.000" stop-color="#0300ff"/></linearGradient><linearGradient id="gInset" x1="0" y1="0" x2="1" y2="1"><stop offset="0" stop-color="#ff8c2c"/><stop offset="0.5" stop-color="#ff6a2a"/><stop offset="1" stop-color="#ff4020"/></linearGradient><linearGradient id="gBtn" x1="0" y1="0" x2="0" y2="1"><stop offset="0" stop-color="#a4a4a4"/><stop offset="0.12" stop-color="#8e8e8e"/><stop offset="0.5" stop-color="#7c7c7c"/><stop offset="1" stop-color="#5e5e5e"/></linearGradient><linearGradient id="gStop" x1="0" y1="0" x2="0" y2="1"><stop offset="0" stop-color="#8a8a8a"/><stop offset="1" stop-color="#6a6a6a"/></linearGradient><linearGradient id="gNav" x1="0" y1="0" x2="0" y2="1"><stop offset="0" stop-color="#c4c4c4"/><stop offset="0.5" stop-color="#a2a2a2"/><stop offset="1" stop-color="#8a8a8a"/></linearGradient></defs><rect x="0.00" y="0.00" width="1920.00" height="1058.00" fill="#232323" /><rect x="0.00" y="0.00" width="1920.00" height="17.00" fill="#00b7c4" /><circle cx="7.5" cy="8.5" r="6" fill="#111"/><circle cx="7.5" cy="8.5" r="5.6" fill="none" stroke="#6a3" stroke-width="0.8" opacity="0.7"/><text x="7.50" y="11.00" font-size="6" fill="#fff" text-anchor="middle" font-weight="bold" >CM</text><text x="17.50" y="12.00" font-size="9.5" fill="#102428" textLength="256.50" lengthAdjust="spacingAndGlyphs" >CalMAN 2019 CalMAN Ultimate for Business 160 Days Remaining</text><line x1="1829.00" y1="8.00" x2="1837.00" y2="8.00" stroke="#111" stroke-width="1" /><rect x="1863.5" y="5.5" width="6" height="6" fill="none" stroke="#111" stroke-width="1"/><path d="M1865.5 5.5 V3.5 H1871.5 V9.5 H1869.5" fill="none" stroke="#111" stroke-width="1"/><path d="M1897 3.5 L1905 11.5 M1905 3.5 L1897 11.5" stroke="#111" stroke-width="1"/><path d="M1 17 H137 V35.5 Q137 39.5 133 39.5 H5 Q1 39.5 1 35.5 Z" fill="url(#gRed)"/><text x="10.3" y="35.8" font-size="22.5" fill="#fff" stroke="#fff" stroke-width="0.8" textLength="96.5" lengthAdjust="spacing">CalMAN</text><circle cx="124.4" cy="28" r="7.5" fill="url(#gRedBtn)"/><path d="M120.5 26.5 L128.3 26.5 L124.4 30.8 Z" fill="#fff"/><rect x="142.00" y="26.50" width="1778.00" height="3.50" fill="url(#gRain)" /><path d="M0 43 H145 Q149 43 149 47 V1058 H0 Z" fill="#5a5a5a"/><circle cx="14" cy="54" r="7" fill="#555" stroke="#4e4e4e" stroke-width="1"/><circle cx="13.8" cy="53.8" r="2.2" fill="#aaa"/><circle cx="135.5" cy="54" r="7" fill="#555"/><path d="M137.5 50 L137.5 58 L133 54 Z" fill="#fff"/><path d="M150 66 V47 Q150 43 154 43 H215 Q219 43 219 47 V66 Z" fill="#3b3b3b" stroke="#555" stroke-width="1"/><line x1="193.80" y1="44.00" x2="193.80" y2="66.00" stroke="#555" stroke-width="1.2" /><text x="154.50" y="58.50" font-size="9.6" fill="#e6e6e6" textLength="35.00" lengthAdjust="spacingAndGlyphs" >History 1</text><circle cx="205.5" cy="56" r="7" fill="#353535"/><text x="205.50" y="59.00" font-size="9" fill="#888" text-anchor="middle" >+</text><rect x="150.00" y="66.00" width="1770.00" height="992.00" fill="#333333" /><path d="M1551 66 V46.5 Q1551 43.5 1554 43.5 H1655 Q1658 43.5 1658 46.5 V66 Z" fill="url(#gTool)"/><rect x="1551.00" y="44.00" width="4.50" height="22.00" fill="#20dd20" /><text x="1557.50" y="52.70" font-size="9.4" fill="#ececec" textLength="50.00" lengthAdjust="spacingAndGlyphs" >X-Rite i1Pro 2</text><text x="1557.50" y="62.90" font-size="9.4" fill="#ececec" textLength="42.00" lengthAdjust="spacingAndGlyphs" >Direct View</text><circle cx="1616.5" cy="55.3" r="7.2" fill="url(#gDD)"/><path d="M1612.5 53.5 L1620.5 53.5 L1616.5 57.699999999999996 Z" fill="#fff"/><line x1="1631.70" y1="45.00" x2="1631.70" y2="66.00" stroke="#4e4e4e" stroke-width="1.2" /><circle cx="1646.5" cy="55.3" r="9.6" fill="#0000ee" stroke="#dde" stroke-width="0.9"/><text x="1646.50" y="58.60" font-size="9" fill="#fff" text-anchor="middle" textLength="15.00" lengthAdjust="spacingAndGlyphs" >220</text><path d="M1662.4 66 V46.5 Q1662.4 43.5 1665.4 43.5 H1756.7 Q1759.7 43.5 1759.7 46.5 V66 Z" fill="url(#gTool)"/><rect x="1662.40" y="44.00" width="4.50" height="22.00" fill="#e8e800" /><text x="1669.00" y="52.70" font-size="9.4" fill="#ececec" textLength="24.50" lengthAdjust="spacingAndGlyphs" >Source</text><circle cx="1748" cy="56.7" r="7.2" fill="url(#gDD)"/><path d="M1744 54.900000000000006 L1752 54.900000000000006 L1748 59.1 Z" fill="#fff"/><path d="M1764 66 V46.5 Q1764 43.5 1767 43.5 H1869 Q1872 43.5 1872 46.5 V66 Z" fill="url(#gTool)"/><rect x="1764.00" y="44.00" width="4.50" height="22.00" fill="#e8e800" /><text x="1771.00" y="53.50" font-size="9.4" fill="#ececec" textLength="79.50" lengthAdjust="spacingAndGlyphs" >Direct Display Control</text><circle cx="1860" cy="56.5" r="7.2" fill="url(#gDD)"/><path d="M1856 54.7 L1864 54.7 L1860 58.9 Z" fill="#fff"/><rect x="1874.3" y="43.6" width="25" height="21.2" rx="3" fill="url(#gTool)" stroke="#888" stroke-width="0.8"/><circle cx="1886.8" cy="54" r="7" fill="#555"/><rect x="1885.6" y="48" width="2.4" height="3" fill="#ddd" transform="rotate(0 1886.8 54)"/><rect x="1885.6" y="48" width="2.4" height="3" fill="#ddd" transform="rotate(45 1886.8 54)"/><rect x="1885.6" y="48" width="2.4" height="3" fill="#ddd" transform="rotate(90 1886.8 54)"/><rect x="1885.6" y="48" width="2.4" height="3" fill="#ddd" transform="rotate(135 1886.8 54)"/><rect x="1885.6" y="48" width="2.4" height="3" fill="#ddd" transform="rotate(180 1886.8 54)"/><rect x="1885.6" y="48" width="2.4" height="3" fill="#ddd" transform="rotate(225 1886.8 54)"/><rect x="1885.6" y="48" width="2.4" height="3" fill="#ddd" transform="rotate(270 1886.8 54)"/><rect x="1885.6" y="48" width="2.4" height="3" fill="#ddd" transform="rotate(315 1886.8 54)"/><circle cx="1886.8" cy="54" r="3.6" fill="none" stroke="#ddd" stroke-width="1.8"/><rect x="1900.5" y="43.6" width="22" height="21.2" rx="3" fill="url(#gTool)" stroke="#888" stroke-width="0.8"/><circle cx="1910" cy="54" r="7" fill="#555"/><path d="M1911.5 50.5 L1911.5 57.5 L1907.8 54 Z" fill="#fff"/><text x="6.60" y="75.80" font-size="9.8" fill="#e8e8e8" textLength="48.00" lengthAdjust="spacingAndGlyphs" >SDR Toolkit</text><rect x="7.00" y="79.20" width="136.00" height="187.40" fill="#212121" /><path d="M16.5 89.2 L16.5 92.2 L13.5 92.2 Z" fill="#777"/><text x="21.70" y="93.20" font-size="8.3" fill="#f0f0f0" textLength="35.00" lengthAdjust="spacingAndGlyphs" font-weight="bold" >Welcome</text><text x="31.60" y="104.90" font-size="8.3" fill="#e8e8e8" textLength="34.20" lengthAdjust="spacingAndGlyphs" >Welcome</text><text x="31.60" y="115.60" font-size="8.3" fill="#e8e8e8" textLength="28.60" lengthAdjust="spacingAndGlyphs" >Options</text><path d="M16.5 123.0 L16.5 126.0 L13.5 126.0 Z" fill="#777"/><text x="21.70" y="127.00" font-size="8.3" fill="#f0f0f0" textLength="30.50" lengthAdjust="spacingAndGlyphs" font-weight="bold" >Analysis</text><text x="31.60" y="138.40" font-size="8.3" fill="#e8e8e8" textLength="56.20" lengthAdjust="spacingAndGlyphs" >Dynamic Range</text><text x="31.60" y="149.30" font-size="8.3" fill="#e8e8e8" textLength="54.10" lengthAdjust="spacingAndGlyphs" >Grayscale - 2pt</text><text x="31.60" y="160.30" font-size="8.3" fill="#e8e8e8" textLength="60.90" lengthAdjust="spacingAndGlyphs" >Grayscale - Multi</text><text x="31.60" y="171.30" font-size="8.3" fill="#e8e8e8" textLength="46.40" lengthAdjust="spacingAndGlyphs" >Color Gamut</text><text x="31.60" y="182.30" font-size="8.3" fill="#e8e8e8" textLength="25.60" lengthAdjust="spacingAndGlyphs" >3D LUT</text><rect x="30.90" y="185.10" width="49.40" height="10.60" fill="#e6e6e6" /><text x="31.60" y="193.30" font-size="8.3" fill="#333" textLength="48.40" lengthAdjust="spacingAndGlyphs" >ColorChecker</text><text x="31.60" y="204.50" font-size="8.3" fill="#e8e8e8" textLength="67.20" lengthAdjust="spacingAndGlyphs" >Saturation Sweeps</text><text x="31.60" y="215.40" font-size="8.3" fill="#e8e8e8" textLength="69.10" lengthAdjust="spacingAndGlyphs" >Luminance Sweeps</text><text x="31.60" y="226.50" font-size="8.3" fill="#e8e8e8" textLength="65.80" lengthAdjust="spacingAndGlyphs" >Screen Uniformity</text><text x="31.60" y="237.60" font-size="8.3" fill="#e8e8e8" textLength="64.30" lengthAdjust="spacingAndGlyphs" >Screen Angularity</text><text x="31.60" y="248.40" font-size="8.3" fill="#e8e8e8" textLength="55.80" lengthAdjust="spacingAndGlyphs" >Screen Stability</text><text x="31.60" y="259.30" font-size="8.3" fill="#e8e8e8" textLength="72.40" lengthAdjust="spacingAndGlyphs" >Spectral Power Dist.</text><text x="158.50" y="124.60" font-size="51" fill="#f0f0f0" textLength="254.50" lengthAdjust="spacingAndGlyphs" >ColorChecker</text><text x="190.00" y="169.00" font-size="21" fill="#f0f0f0" textLength="353.00" lengthAdjust="spacingAndGlyphs" >Display analysis is performed with the X-Rite/</text><text x="190" y="194" font-size="21" fill="#f0f0f0" textLength="299" lengthAdjust="spacingAndGlyphs">Pantone ColorChecker<tspan font-size="11" dy="-8">®</tspan><tspan dy="8"> target colors.</tspan></text><text x="267.00" y="249.00" font-size="23.5" fill="#f0f0f0" textLength="114.00" lengthAdjust="spacingAndGlyphs" >dE Formula:</text><rect x="389.40" y="224.40" width="157.50" height="31.10" fill="#262626" /><rect x="390.80" y="226.00" width="155.20" height="28.00" fill="url(#gDrop)" /><text x="395.00" y="248.90" font-size="19" fill="#f4f4f4" textLength="36.60" lengthAdjust="spacingAndGlyphs" >2000</text><path d="M530.9 238 L541.2 238 L536 243.8 Z" fill="#000"/><text x="349.00" y="287.00" font-size="17" fill="#d8d8d8" text-anchor="middle" textLength="84.00" lengthAdjust="spacingAndGlyphs" >DeltaE 2000</text><rect x="171.70" y="291.90" width="354.60" height="384.00" fill="#232323" /><line x1="218.98" y1="291.90" x2="218.98" y2="675.90" stroke="#a0a0a0" stroke-width="1.3" /><line x1="266.26" y1="291.90" x2="266.26" y2="675.90" stroke="#a0a0a0" stroke-width="1.3" /><line x1="313.54" y1="291.90" x2="313.54" y2="675.90" stroke="#a0a0a0" stroke-width="1.3" /><line x1="360.82" y1="291.90" x2="360.82" y2="675.90" stroke="#a0a0a0" stroke-width="1.3" /><line x1="408.10" y1="291.90" x2="408.10" y2="675.90" stroke="#a0a0a0" stroke-width="1.3" /><line x1="455.38" y1="291.90" x2="455.38" y2="675.90" stroke="#a0a0a0" stroke-width="1.3" /><line x1="502.66" y1="291.90" x2="502.66" y2="675.90" stroke="#a0a0a0" stroke-width="1.3" /><rect x="171.70" y="291.90" width="354.60" height="384.00" fill="none" stroke="#a0a0a0" stroke-width="1.3"/><line x1="171.70" y1="675.90" x2="171.70" y2="682.90" stroke="#c0c0c0" stroke-width="1.3" /><text x="171.70" y="700.60" font-size="17" fill="#d4d4d4" text-anchor="middle" >0</text><line x1="218.98" y1="675.90" x2="218.98" y2="682.90" stroke="#c0c0c0" stroke-width="1.3" /><text x="218.98" y="700.60" font-size="17" fill="#d4d4d4" text-anchor="middle" >2</text><line x1="266.26" y1="675.90" x2="266.26" y2="682.90" stroke="#c0c0c0" stroke-width="1.3" /><text x="266.26" y="700.60" font-size="17" fill="#d4d4d4" text-anchor="middle" >4</text><line x1="313.54" y1="675.90" x2="313.54" y2="682.90" stroke="#c0c0c0" stroke-width="1.3" /><text x="313.54" y="700.60" font-size="17" fill="#d4d4d4" text-anchor="middle" >6</text><line x1="360.82" y1="675.90" x2="360.82" y2="682.90" stroke="#c0c0c0" stroke-width="1.3" /><text x="360.82" y="700.60" font-size="17" fill="#d4d4d4" text-anchor="middle" >8</text><line x1="408.10" y1="675.90" x2="408.10" y2="682.90" stroke="#c0c0c0" stroke-width="1.3" /><text x="408.10" y="700.60" font-size="17" fill="#d4d4d4" text-anchor="middle" >10</text><line x1="455.38" y1="675.90" x2="455.38" y2="682.90" stroke="#c0c0c0" stroke-width="1.3" /><text x="455.38" y="700.60" font-size="17" fill="#d4d4d4" text-anchor="middle" >12</text><line x1="502.66" y1="675.90" x2="502.66" y2="682.90" stroke="#c0c0c0" stroke-width="1.3" /><text x="502.66" y="700.60" font-size="17" fill="#d4d4d4" text-anchor="middle" >14</text><rect x="171.70" y="668.41" width="10.29" height="6.80" fill="#000" /><rect x="172.50" y="670.01" width="8.49" height="3.60" fill="url(#gb0)" /><rect x="171.70" y="660.24" width="15.73" height="6.80" fill="#000" /><rect x="172.50" y="661.84" width="13.93" height="3.60" fill="url(#gb1)" /><rect x="171.70" y="652.07" width="21.17" height="6.80" fill="#000" /><rect x="172.50" y="653.67" width="19.37" height="3.60" fill="url(#gb2)" /><rect x="171.70" y="643.90" width="20.93" height="6.80" fill="#000" /><rect x="172.50" y="645.50" width="19.13" height="3.60" fill="url(#gb3)" /><rect x="171.70" y="635.73" width="35.35" height="6.80" fill="#000" /><rect x="172.50" y="637.33" width="33.55" height="3.60" fill="url(#gb4)" /><rect x="171.70" y="627.56" width="2.73" height="6.80" fill="#000" /><rect x="172.50" y="629.16" width="0.93" height="3.60" fill="url(#gb5)" /><rect x="171.70" y="619.39" width="18.57" height="6.80" fill="#000" /><rect x="172.50" y="620.99" width="16.77" height="3.60" fill="url(#gb6)" /><rect x="171.70" y="611.22" width="44.10" height="6.80" fill="#000" /><rect x="172.50" y="612.82" width="42.30" height="3.60" fill="url(#gb7)" /><rect x="171.70" y="603.05" width="40.55" height="6.80" fill="#000" /><rect x="172.50" y="604.65" width="38.75" height="3.60" fill="url(#gb8)" /><rect x="171.70" y="594.88" width="35.11" height="6.80" fill="#000" /><rect x="172.50" y="596.48" width="33.31" height="3.60" fill="url(#gb9)" /><rect x="171.70" y="586.71" width="34.17" height="6.80" fill="#000" /><rect x="172.50" y="588.31" width="32.37" height="3.60" fill="url(#gb10)" /><rect x="171.70" y="578.54" width="64.43" height="6.80" fill="#000" /><rect x="172.50" y="580.14" width="62.63" height="3.60" fill="url(#gb11)" /><rect x="171.70" y="570.37" width="68.92" height="6.80" fill="#000" /><rect x="172.50" y="571.97" width="67.12" height="3.60" fill="url(#gb12)" /><rect x="171.70" y="562.20" width="33.46" height="6.80" fill="#000" /><rect x="172.50" y="563.80" width="31.66" height="3.60" fill="url(#gb13)" /><rect x="171.70" y="554.03" width="38.19" height="6.80" fill="#000" /><rect x="172.50" y="555.63" width="36.39" height="3.60" fill="url(#gb14)" /><rect x="171.70" y="545.86" width="71.99" height="6.80" fill="#000" /><rect x="172.50" y="547.46" width="70.19" height="3.60" fill="url(#gb15)" /><rect x="171.70" y="537.69" width="22.35" height="6.80" fill="#000" /><rect x="172.50" y="539.29" width="20.55" height="3.60" fill="url(#gb16)" /><rect x="171.70" y="529.52" width="124.24" height="6.80" fill="#000" /><rect x="172.50" y="531.12" width="122.44" height="3.60" fill="url(#gb17)" /><rect x="171.70" y="521.35" width="58.99" height="6.80" fill="#000" /><rect x="172.50" y="522.95" width="57.19" height="3.60" fill="url(#gb18)" /><rect x="171.70" y="513.18" width="28.97" height="6.80" fill="#000" /><rect x="172.50" y="514.78" width="27.17" height="3.60" fill="url(#gb19)" /><rect x="171.70" y="505.01" width="32.28" height="6.80" fill="#000" /><rect x="172.50" y="506.61" width="30.48" height="3.60" fill="url(#gb20)" /><rect x="171.70" y="496.84" width="60.88" height="6.80" fill="#000" /><rect x="172.50" y="498.44" width="59.08" height="3.60" fill="url(#gb21)" /><rect x="171.70" y="488.67" width="30.62" height="6.80" fill="#000" /><rect x="172.50" y="490.27" width="28.82" height="3.60" fill="url(#gb22)" /><rect x="171.70" y="480.50" width="40.55" height="6.80" fill="#000" /><rect x="172.50" y="482.10" width="38.75" height="3.60" fill="url(#gb23)" /><rect x="171.70" y="472.33" width="147.64" height="6.80" fill="#000" /><rect x="172.50" y="473.93" width="145.84" height="3.60" fill="url(#gb24)" /><rect x="171.70" y="464.16" width="98.23" height="6.80" fill="#000" /><rect x="172.50" y="465.76" width="96.43" height="3.60" fill="url(#gb25)" /><rect x="171.70" y="455.99" width="84.05" height="6.80" fill="#000" /><rect x="172.50" y="457.59" width="82.25" height="3.60" fill="url(#gb26)" /><rect x="171.70" y="447.82" width="50.95" height="6.80" fill="#000" /><rect x="172.50" y="449.42" width="49.15" height="3.60" fill="url(#gb27)" /><rect x="171.70" y="439.65" width="52.14" height="6.80" fill="#000" /><rect x="172.50" y="441.25" width="50.34" height="3.60" fill="url(#gb28)" /><rect x="171.70" y="431.48" width="104.14" height="6.80" fill="#000" /><rect x="172.50" y="433.08" width="102.34" height="3.60" fill="url(#gb29)" /><rect x="171.70" y="423.31" width="47.64" height="6.80" fill="#000" /><rect x="172.50" y="424.91" width="45.84" height="3.60" fill="url(#gb30)" /><rect x="171.70" y="415.14" width="44.33" height="6.80" fill="#000" /><rect x="172.50" y="416.74" width="42.53" height="3.60" fill="url(#gb31)" /><rect x="171.70" y="406.97" width="82.87" height="6.80" fill="#000" /><rect x="172.50" y="408.57" width="81.07" height="3.60" fill="url(#gb32)" /><rect x="171.70" y="398.80" width="52.14" height="6.80" fill="#000" /><rect x="172.50" y="400.40" width="50.34" height="3.60" fill="url(#gb33)" /><rect x="171.70" y="390.63" width="64.19" height="6.80" fill="#000" /><rect x="172.50" y="392.23" width="62.39" height="3.60" fill="url(#gb34)" /><rect x="171.70" y="382.46" width="82.87" height="6.80" fill="#000" /><rect x="172.50" y="384.06" width="81.07" height="3.60" fill="url(#gb35)" /><rect x="171.70" y="374.29" width="48.83" height="6.80" fill="#000" /><rect x="172.50" y="375.89" width="47.03" height="3.60" fill="url(#gb36)" /><rect x="171.70" y="366.12" width="64.19" height="6.80" fill="#000" /><rect x="172.50" y="367.72" width="62.39" height="3.60" fill="url(#gb37)" /><rect x="171.70" y="357.95" width="48.83" height="6.80" fill="#000" /><rect x="172.50" y="359.55" width="47.03" height="3.60" fill="url(#gb38)" /><rect x="171.70" y="349.78" width="41.26" height="6.80" fill="#000" /><rect x="172.50" y="351.38" width="39.46" height="3.60" fill="url(#gb39)" /><rect x="171.70" y="341.61" width="37.95" height="6.80" fill="#000" /><rect x="172.50" y="343.21" width="36.15" height="3.60" fill="url(#gb40)" /><rect x="171.70" y="333.44" width="79.56" height="6.80" fill="#000" /><rect x="172.50" y="335.04" width="77.76" height="3.60" fill="url(#gb41)" /><rect x="171.70" y="325.27" width="64.19" height="6.80" fill="#000" /><rect x="172.50" y="326.87" width="62.39" height="3.60" fill="url(#gb42)" /><rect x="171.70" y="317.10" width="75.30" height="6.80" fill="#000" /><rect x="172.50" y="318.70" width="73.50" height="3.60" fill="url(#gb43)" /><rect x="171.70" y="308.93" width="56.63" height="6.80" fill="#000" /><rect x="172.50" y="310.53" width="54.83" height="3.60" fill="url(#gb44)" /><rect x="171.70" y="300.76" width="42.21" height="6.80" fill="#000" /><rect x="172.50" y="302.36" width="40.41" height="3.60" fill="url(#gb45)" /><rect x="171.70" y="292.59" width="47.64" height="6.80" fill="#000" /><rect x="172.50" y="294.19" width="45.84" height="3.60" fill="url(#gb46)" /><text x="203.40" y="763.80" font-size="33" fill="#f0f0f0" textLength="248.00" lengthAdjust="spacingAndGlyphs" >Avg dE2000: 2.26</text><text x="199.30" y="811.00" font-size="33" fill="#f0f0f0" textLength="255.40" lengthAdjust="spacingAndGlyphs" >Max dE2000: 6.22</text><text x="165.90" y="867.20" font-size="33" fill="#f0f0f0" textLength="232.00" lengthAdjust="spacingAndGlyphs" >Current Reading</text><text x="165.90" y="908.50" font-size="29" fill="#f0f0f0" textLength="107.40" lengthAdjust="spacingAndGlyphs" >x: 0.4613</text><text x="332.00" y="908.50" font-size="29" fill="#f0f0f0" textLength="108.50" lengthAdjust="spacingAndGlyphs" >y: 0.3814</text><text x="165.90" y="955.70" font-size="29" fill="#f0f0f0" textLength="100.00" lengthAdjust="spacingAndGlyphs" >fL: 37.63</text><text x="165.90" y="994.00" font-size="29" fill="#f0f0f0" textLength="168.00" lengthAdjust="spacingAndGlyphs" >cd/m²: 128.93</text><text x="645.50" y="113.40" font-size="17" fill="#d8d8d8" text-anchor="middle" textLength="44.00" lengthAdjust="spacingAndGlyphs" >DeltaL</text><rect x="574.50" y="119.20" width="162.10" height="390.00" fill="#232323" /><line x1="574.50" y1="460.80" x2="736.60" y2="460.80" stroke="#a0a0a0" stroke-width="1.3" /><line x1="574.50" y1="412.00" x2="736.60" y2="412.00" stroke="#a0a0a0" stroke-width="1.3" /><line x1="574.50" y1="363.20" x2="736.60" y2="363.20" stroke="#a0a0a0" stroke-width="1.3" /><line x1="574.50" y1="314.40" x2="736.60" y2="314.40" stroke="#a0a0a0" stroke-width="1.3" /><line x1="574.50" y1="265.60" x2="736.60" y2="265.60" stroke="#a0a0a0" stroke-width="1.3" /><line x1="574.50" y1="216.80" x2="736.60" y2="216.80" stroke="#a0a0a0" stroke-width="1.3" /><line x1="574.50" y1="168.00" x2="736.60" y2="168.00" stroke="#a0a0a0" stroke-width="1.3" /><rect x="574.50" y="119.20" width="162.10" height="390.00" fill="none" stroke="#a0a0a0" stroke-width="1.3"/><line x1="567.50" y1="509.60" x2="574.50" y2="509.60" stroke="#d0d0d0" stroke-width="1.3" /><text x="567.50" y="515.80" font-size="17" fill="#d4d4d4" text-anchor="end" >-4</text><line x1="567.50" y1="460.80" x2="574.50" y2="460.80" stroke="#d0d0d0" stroke-width="1.3" /><text x="567.50" y="467.00" font-size="17" fill="#d4d4d4" text-anchor="end" >-3</text><line x1="567.50" y1="412.00" x2="574.50" y2="412.00" stroke="#d0d0d0" stroke-width="1.3" /><text x="567.50" y="418.20" font-size="17" fill="#d4d4d4" text-anchor="end" >-2</text><line x1="567.50" y1="363.20" x2="574.50" y2="363.20" stroke="#d0d0d0" stroke-width="1.3" /><text x="567.50" y="369.40" font-size="17" fill="#d4d4d4" text-anchor="end" >-1</text><line x1="567.50" y1="314.40" x2="574.50" y2="314.40" stroke="#d0d0d0" stroke-width="1.3" /><text x="567.50" y="320.60" font-size="17" fill="#d4d4d4" text-anchor="end" >0</text><line x1="567.50" y1="265.60" x2="574.50" y2="265.60" stroke="#d0d0d0" stroke-width="1.3" /><text x="567.50" y="271.80" font-size="17" fill="#d4d4d4" text-anchor="end" >1</text><line x1="567.50" y1="216.80" x2="574.50" y2="216.80" stroke="#d0d0d0" stroke-width="1.3" /><text x="567.50" y="223.00" font-size="17" fill="#d4d4d4" text-anchor="end" >2</text><line x1="567.50" y1="168.00" x2="574.50" y2="168.00" stroke="#d0d0d0" stroke-width="1.3" /><text x="567.50" y="174.20" font-size="17" fill="#d4d4d4" text-anchor="end" >3</text><line x1="567.50" y1="119.20" x2="574.50" y2="119.20" stroke="#d0d0d0" stroke-width="1.3" /><text x="567.50" y="125.40" font-size="17" fill="#d4d4d4" text-anchor="end" >4</text><rect x="590.00" y="313.70" width="129.00" height="14.58" fill="#000" /><rect x="591.20" y="315.00" width="126.60" height="11.98" fill="url(#gSkinBarS)" /><text x="855.00" y="113.40" font-size="17" fill="#d8d8d8" text-anchor="middle" textLength="44.00" lengthAdjust="spacingAndGlyphs" >DeltaC</text><rect x="783.70" y="119.20" width="162.30" height="390.00" fill="#232323" /><line x1="783.70" y1="460.80" x2="946.00" y2="460.80" stroke="#a0a0a0" stroke-width="1.3" /><line x1="783.70" y1="412.00" x2="946.00" y2="412.00" stroke="#a0a0a0" stroke-width="1.3" /><line x1="783.70" y1="363.20" x2="946.00" y2="363.20" stroke="#a0a0a0" stroke-width="1.3" /><line x1="783.70" y1="314.40" x2="946.00" y2="314.40" stroke="#a0a0a0" stroke-width="1.3" /><line x1="783.70" y1="265.60" x2="946.00" y2="265.60" stroke="#a0a0a0" stroke-width="1.3" /><line x1="783.70" y1="216.80" x2="946.00" y2="216.80" stroke="#a0a0a0" stroke-width="1.3" /><line x1="783.70" y1="168.00" x2="946.00" y2="168.00" stroke="#a0a0a0" stroke-width="1.3" /><rect x="783.70" y="119.20" width="162.30" height="390.00" fill="none" stroke="#a0a0a0" stroke-width="1.3"/><line x1="776.70" y1="509.60" x2="783.70" y2="509.60" stroke="#d0d0d0" stroke-width="1.3" /><text x="776.70" y="515.80" font-size="17" fill="#d4d4d4" text-anchor="end" >-4</text><line x1="776.70" y1="460.80" x2="783.70" y2="460.80" stroke="#d0d0d0" stroke-width="1.3" /><text x="776.70" y="467.00" font-size="17" fill="#d4d4d4" text-anchor="end" >-3</text><line x1="776.70" y1="412.00" x2="783.70" y2="412.00" stroke="#d0d0d0" stroke-width="1.3" /><text x="776.70" y="418.20" font-size="17" fill="#d4d4d4" text-anchor="end" >-2</text><line x1="776.70" y1="363.20" x2="783.70" y2="363.20" stroke="#d0d0d0" stroke-width="1.3" /><text x="776.70" y="369.40" font-size="17" fill="#d4d4d4" text-anchor="end" >-1</text><line x1="776.70" y1="314.40" x2="783.70" y2="314.40" stroke="#d0d0d0" stroke-width="1.3" /><text x="776.70" y="320.60" font-size="17" fill="#d4d4d4" text-anchor="end" >0</text><line x1="776.70" y1="265.60" x2="783.70" y2="265.60" stroke="#d0d0d0" stroke-width="1.3" /><text x="776.70" y="271.80" font-size="17" fill="#d4d4d4" text-anchor="end" >1</text><line x1="776.70" y1="216.80" x2="783.70" y2="216.80" stroke="#d0d0d0" stroke-width="1.3" /><text x="776.70" y="223.00" font-size="17" fill="#d4d4d4" text-anchor="end" >2</text><line x1="776.70" y1="168.00" x2="783.70" y2="168.00" stroke="#d0d0d0" stroke-width="1.3" /><text x="776.70" y="174.20" font-size="17" fill="#d4d4d4" text-anchor="end" >3</text><line x1="776.70" y1="119.20" x2="783.70" y2="119.20" stroke="#d0d0d0" stroke-width="1.3" /><text x="776.70" y="125.40" font-size="17" fill="#d4d4d4" text-anchor="end" >4</text><rect x="799.60" y="130.70" width="128.00" height="184.40" fill="#000" /><rect x="800.80" y="132.00" width="125.60" height="181.80" fill="url(#gSkinBar)" /><text x="1064.00" y="113.40" font-size="17" fill="#d8d8d8" text-anchor="middle" textLength="45.00" lengthAdjust="spacingAndGlyphs" >DeltaH</text><rect x="993.00" y="119.20" width="162.00" height="390.00" fill="#232323" /><line x1="993.00" y1="460.80" x2="1155.00" y2="460.80" stroke="#a0a0a0" stroke-width="1.3" /><line x1="993.00" y1="412.00" x2="1155.00" y2="412.00" stroke="#a0a0a0" stroke-width="1.3" /><line x1="993.00" y1="363.20" x2="1155.00" y2="363.20" stroke="#a0a0a0" stroke-width="1.3" /><line x1="993.00" y1="314.40" x2="1155.00" y2="314.40" stroke="#a0a0a0" stroke-width="1.3" /><line x1="993.00" y1="265.60" x2="1155.00" y2="265.60" stroke="#a0a0a0" stroke-width="1.3" /><line x1="993.00" y1="216.80" x2="1155.00" y2="216.80" stroke="#a0a0a0" stroke-width="1.3" /><line x1="993.00" y1="168.00" x2="1155.00" y2="168.00" stroke="#a0a0a0" stroke-width="1.3" /><rect x="993.00" y="119.20" width="162.00" height="390.00" fill="none" stroke="#a0a0a0" stroke-width="1.3"/><line x1="986.00" y1="509.60" x2="993.00" y2="509.60" stroke="#d0d0d0" stroke-width="1.3" /><text x="986.00" y="515.80" font-size="17" fill="#d4d4d4" text-anchor="end" >-4</text><line x1="986.00" y1="460.80" x2="993.00" y2="460.80" stroke="#d0d0d0" stroke-width="1.3" /><text x="986.00" y="467.00" font-size="17" fill="#d4d4d4" text-anchor="end" >-3</text><line x1="986.00" y1="412.00" x2="993.00" y2="412.00" stroke="#d0d0d0" stroke-width="1.3" /><text x="986.00" y="418.20" font-size="17" fill="#d4d4d4" text-anchor="end" >-2</text><line x1="986.00" y1="363.20" x2="993.00" y2="363.20" stroke="#d0d0d0" stroke-width="1.3" /><text x="986.00" y="369.40" font-size="17" fill="#d4d4d4" text-anchor="end" >-1</text><line x1="986.00" y1="314.40" x2="993.00" y2="314.40" stroke="#d0d0d0" stroke-width="1.3" /><text x="986.00" y="320.60" font-size="17" fill="#d4d4d4" text-anchor="end" >0</text><line x1="986.00" y1="265.60" x2="993.00" y2="265.60" stroke="#d0d0d0" stroke-width="1.3" /><text x="986.00" y="271.80" font-size="17" fill="#d4d4d4" text-anchor="end" >1</text><line x1="986.00" y1="216.80" x2="993.00" y2="216.80" stroke="#d0d0d0" stroke-width="1.3" /><text x="986.00" y="223.00" font-size="17" fill="#d4d4d4" text-anchor="end" >2</text><line x1="986.00" y1="168.00" x2="993.00" y2="168.00" stroke="#d0d0d0" stroke-width="1.3" /><text x="986.00" y="174.20" font-size="17" fill="#d4d4d4" text-anchor="end" >3</text><line x1="986.00" y1="119.20" x2="993.00" y2="119.20" stroke="#d0d0d0" stroke-width="1.3" /><text x="986.00" y="125.40" font-size="17" fill="#d4d4d4" text-anchor="end" >4</text><rect x="1009.00" y="313.70" width="128.00" height="117.54" fill="#000" /><rect x="1010.20" y="315.00" width="125.60" height="114.94" fill="url(#gSkinBar)" /><rect x="548.00" y="524.00" width="628.00" height="185.00" fill="#000" /><text transform="translate(562.5,561) rotate(-90)" font-size="13.5" fill="#e8e8e8" text-anchor="middle" textLength="40" lengthAdjust="spacingAndGlyphs">Actual</text><text transform="translate(562.5,637) rotate(-90)" font-size="13.5" fill="#e8e8e8" text-anchor="middle" textLength="40" lengthAdjust="spacingAndGlyphs">Target</text><svg x="548" y="524" width="628" height="185" overflow="hidden"><g transform="translate(-548,-524)"><rect x="566.20" y="530.40" width="62.60" height="136.60" fill="#fafafa" /><rect x="567.60" y="531.80" width="59.80" height="68.00" fill="#ffffff" /><rect x="567.60" y="599.00" width="59.80" height="66.60" fill="#ffffff" /><text x="597.50" y="683.70" font-size="14" fill="#f0f0f0" text-anchor="middle" textLength="36.00" lengthAdjust="spacingAndGlyphs" >White</text><rect x="638.20" y="530.40" width="62.60" height="136.60" fill="#fafafa" /><rect x="639.60" y="531.80" width="59.80" height="68.00" fill="#e4e4e4" /><rect x="639.60" y="599.00" width="59.80" height="66.60" fill="#e6e6e6" /><text x="669.50" y="683.70" font-size="14" fill="#f0f0f0" text-anchor="middle" textLength="44.00" lengthAdjust="spacingAndGlyphs" >Gray 80</text><rect x="710.20" y="530.40" width="62.60" height="136.60" fill="#fafafa" /><rect x="711.60" y="531.80" width="59.80" height="68.00" fill="#cfcfcf" /><rect x="711.60" y="599.00" width="59.80" height="66.60" fill="#d2d2d2" /><text x="741.50" y="683.70" font-size="14" fill="#f0f0f0" text-anchor="middle" textLength="44.00" lengthAdjust="spacingAndGlyphs" >Gray 65</text><rect x="782.20" y="530.40" width="62.60" height="136.60" fill="#fafafa" /><rect x="783.60" y="531.80" width="59.80" height="68.00" fill="#b3b3b3" /><rect x="783.60" y="599.00" width="59.80" height="66.60" fill="#b8b8b8" /><text x="813.50" y="683.70" font-size="14" fill="#f0f0f0" text-anchor="middle" textLength="44.00" lengthAdjust="spacingAndGlyphs" >Gray 50</text><rect x="854.20" y="530.40" width="62.60" height="136.60" fill="#fafafa" /><rect x="855.60" y="531.80" width="59.80" height="68.00" fill="#999999" /><rect x="855.60" y="599.00" width="59.80" height="66.60" fill="#9e9e9e" /><text x="885.50" y="683.70" font-size="14" fill="#f0f0f0" text-anchor="middle" textLength="44.00" lengthAdjust="spacingAndGlyphs" >Gray 35</text><rect x="926.20" y="530.40" width="62.60" height="136.60" fill="#fafafa" /><rect x="927.60" y="531.80" width="59.80" height="68.00" fill="#000000" /><rect x="927.60" y="599.00" width="59.80" height="66.60" fill="#000000" /><text x="957.50" y="683.70" font-size="14" fill="#f0f0f0" text-anchor="middle" textLength="29.00" lengthAdjust="spacingAndGlyphs" >Black</text><rect x="998.20" y="530.40" width="62.60" height="136.60" fill="#fafafa" /><rect x="999.60" y="531.80" width="59.80" height="68.00" fill="#735042" /><rect x="999.60" y="599.00" width="59.80" height="66.60" fill="#735244" /><text x="1029.50" y="683.70" font-size="14" fill="#f0f0f0" text-anchor="middle" textLength="52.00" lengthAdjust="spacingAndGlyphs" >Dark Skin</text><rect x="1070.20" y="530.40" width="62.60" height="136.60" fill="#fafafa" /><rect x="1071.60" y="531.80" width="59.80" height="68.00" fill="#c39380" /><rect x="1071.60" y="599.00" width="59.80" height="66.60" fill="#c49682" /><text x="1101.50" y="683.70" font-size="14" fill="#f0f0f0" text-anchor="middle" textLength="57.00" lengthAdjust="spacingAndGlyphs" >Light Skin</text><rect x="1142.20" y="530.40" width="62.60" height="136.60" fill="#fafafa" /><rect x="1143.60" y="531.80" width="59.80" height="68.00" fill="#5c7b9e" /><rect x="1143.60" y="599.00" width="59.80" height="66.60" fill="#5f7ea2" /><text x="1173.50" y="683.70" font-size="14" fill="#f0f0f0" text-anchor="middle" textLength="52.00" lengthAdjust="spacingAndGlyphs" >Blue Sky</text></g></svg><rect x="548.00" y="709.00" width="628.00" height="18.40" fill="#5e5e5e" /><rect x="549" y="710.5" width="14" height="15.5" rx="3" fill="#6e6e6e" stroke="#777" stroke-width="0.6"/><path d="M558.5 713.5 L558.5 722.5 L553 718 Z" fill="#333"/><rect x="566" y="711" width="106" height="14.5" rx="7" fill="#464646"/><rect x="1161" y="710.5" width="14" height="15.5" rx="3" fill="#6e6e6e" stroke="#777" stroke-width="0.6"/><path d="M1165.5 713.5 L1165.5 722.5 L1171 718 Z" fill="#333"/><rect x="1183.00" y="83.00" width="737.00" height="647.00" fill="#1c1c1c" /><rect x="1190.00" y="90.00" width="722.00" height="630.00" fill="#333333" /><text x="1551.00" y="111.75" font-size="17.5" fill="#dcdcdc" text-anchor="middle" textLength="89.50" lengthAdjust="spacingAndGlyphs" >CIE 1976 u'v'</text><rect x="1230.00" y="116.50" width="678.60" height="569.50" fill="#232323" /><g clip-path="url(#cpPlot)"><g clip-path="url(#cpHS)"><rect x="1261" y="128" width="64" height="3.6" fill="url(#o0)"/><rect x="1249" y="131" width="110" height="3.6" fill="url(#o1)"/><rect x="1243" y="134" width="143" height="3.6" fill="url(#o2)"/><rect x="1239" y="137" width="172" height="3.6" fill="url(#o3)"/><rect x="1237" y="140" width="199" height="3.6" fill="url(#o4)"/><rect x="1235" y="143" width="225" height="3.6" fill="url(#o5)"/><rect x="1233" y="146" width="251" height="3.6" fill="url(#o6)"/><rect x="1232" y="149" width="276" height="3.6" fill="url(#o7)"/><rect x="1231" y="152" width="301" height="3.6" fill="url(#o8)"/><rect x="1230" y="155" width="326" height="3.6" fill="url(#o9)"/><rect x="1229" y="158" width="351" height="3.6" fill="url(#o10)"/><rect x="1229" y="161" width="375" height="3.6" fill="url(#o11)"/><rect x="1228" y="164" width="400" height="3.6" fill="url(#o12)"/><rect x="1228" y="167" width="423" height="3.6" fill="url(#o13)"/><rect x="1228" y="170" width="447" height="3.6" fill="url(#o14)"/><rect x="1228" y="173" width="471" height="3.6" fill="url(#o15)"/><rect x="1228" y="176" width="495" height="3.6" fill="url(#o16)"/><rect x="1228" y="179" width="519" height="3.6" fill="url(#o17)"/><rect x="1228" y="182" width="543" height="3.6" fill="url(#o18)"/><rect x="1228" y="185" width="567" height="3.6" fill="url(#o19)"/><rect x="1229" y="188" width="590" height="3.6" fill="url(#o20)"/><rect x="1229" y="191" width="614" height="3.6" fill="url(#o21)"/><rect x="1230" y="194" width="637" height="3.6" fill="url(#o22)"/><rect x="1230" y="197" width="661" height="3.6" fill="url(#o23)"/><rect x="1230" y="200" width="682" height="3.6" fill="url(#o24)"/><rect x="1231" y="203" width="681" height="3.6" fill="url(#o25)"/><rect x="1231" y="206" width="681" height="3.6" fill="url(#o26)"/><rect x="1232" y="209" width="680" height="3.6" fill="url(#o27)"/><rect x="1233" y="212" width="679" height="3.6" fill="url(#o28)"/><rect x="1233" y="215" width="679" height="3.6" fill="url(#o29)"/><rect x="1234" y="218" width="678" height="3.6" fill="url(#o30)"/><rect x="1235" y="221" width="677" height="3.6" fill="url(#o31)"/><rect x="1235" y="224" width="677" height="3.6" fill="url(#o32)"/><rect x="1236" y="227" width="676" height="3.6" fill="url(#o33)"/><rect x="1237" y="230" width="675" height="3.6" fill="url(#o34)"/><rect x="1238" y="233" width="674" height="3.6" fill="url(#o35)"/><rect x="1239" y="236" width="671" height="3.6" fill="url(#o36)"/><rect x="1239" y="239" width="669" height="3.6" fill="url(#o37)"/><rect x="1240" y="242" width="665" height="3.6" fill="url(#o38)"/><rect x="1241" y="245" width="661" height="3.6" fill="url(#o39)"/><rect x="1242" y="248" width="658" height="3.6" fill="url(#o40)"/><rect x="1243" y="251" width="654" height="3.6" fill="url(#o41)"/><rect x="1244" y="254" width="650" height="3.6" fill="url(#o42)"/><rect x="1245" y="257" width="647" height="3.6" fill="url(#o43)"/><rect x="1246" y="260" width="643" height="3.6" fill="url(#o44)"/><rect x="1247" y="263" width="639" height="3.6" fill="url(#o45)"/><rect x="1248" y="266" width="636" height="3.6" fill="url(#o46)"/><rect x="1249" y="269" width="632" height="3.6" fill="url(#o47)"/><rect x="1250" y="272" width="628" height="3.6" fill="url(#o48)"/><rect x="1251" y="275" width="624" height="3.6" fill="url(#o49)"/><rect x="1252" y="278" width="621" height="3.6" fill="url(#o50)"/><rect x="1253" y="281" width="617" height="3.6" fill="url(#o51)"/><rect x="1254" y="284" width="613" height="3.6" fill="url(#o52)"/><rect x="1255" y="287" width="610" height="3.6" fill="url(#o53)"/><rect x="1256" y="290" width="606" height="3.6" fill="url(#o54)"/><rect x="1257" y="293" width="602" height="3.6" fill="url(#o55)"/><rect x="1258" y="296" width="599" height="3.6" fill="url(#o56)"/><rect x="1259" y="299" width="595" height="3.6" fill="url(#o57)"/><rect x="1261" y="302" width="590" height="3.6" fill="url(#o58)"/><rect x="1262" y="305" width="587" height="3.6" fill="url(#o59)"/><rect x="1263" y="308" width="583" height="3.6" fill="url(#o60)"/><rect x="1264" y="311" width="579" height="3.6" fill="url(#o61)"/><rect x="1265" y="314" width="576" height="3.6" fill="url(#o62)"/><rect x="1266" y="317" width="572" height="3.6" fill="url(#o63)"/><rect x="1268" y="320" width="567" height="3.6" fill="url(#o64)"/><rect x="1269" y="323" width="564" height="3.6" fill="url(#o65)"/><rect x="1270" y="326" width="560" height="3.6" fill="url(#o66)"/><rect x="1271" y="329" width="556" height="3.6" fill="url(#o67)"/><rect x="1272" y="332" width="553" height="3.6" fill="url(#o68)"/><rect x="1274" y="335" width="548" height="3.6" fill="url(#o69)"/><rect x="1275" y="338" width="544" height="3.6" fill="url(#o70)"/><rect x="1276" y="341" width="541" height="3.6" fill="url(#o71)"/><rect x="1278" y="344" width="536" height="3.6" fill="url(#o72)"/><rect x="1279" y="347" width="532" height="3.6" fill="url(#o73)"/><rect x="1280" y="350" width="529" height="3.6" fill="url(#o74)"/><rect x="1282" y="353" width="524" height="3.6" fill="url(#o75)"/><rect x="1283" y="356" width="520" height="3.6" fill="url(#o76)"/><rect x="1284" y="359" width="517" height="3.6" fill="url(#o77)"/><rect x="1286" y="362" width="512" height="3.6" fill="url(#o78)"/><rect x="1287" y="365" width="508" height="3.6" fill="url(#o79)"/><rect x="1288" y="368" width="505" height="3.6" fill="url(#o80)"/><rect x="1290" y="371" width="500" height="3.6" fill="url(#o81)"/><rect x="1291" y="374" width="496" height="3.6" fill="url(#o82)"/><rect x="1293" y="377" width="492" height="3.6" fill="url(#o83)"/><rect x="1294" y="380" width="488" height="3.6" fill="url(#o84)"/><rect x="1296" y="383" width="483" height="3.6" fill="url(#o85)"/><rect x="1297" y="386" width="480" height="3.6" fill="url(#o86)"/><rect x="1299" y="389" width="475" height="3.6" fill="url(#o87)"/><rect x="1300" y="392" width="471" height="3.6" fill="url(#o88)"/><rect x="1302" y="395" width="467" height="3.6" fill="url(#o89)"/><rect x="1303" y="398" width="463" height="3.6" fill="url(#o90)"/><rect x="1305" y="401" width="458" height="3.6" fill="url(#o91)"/><rect x="1306" y="404" width="455" height="3.6" fill="url(#o92)"/><rect x="1308" y="407" width="450" height="3.6" fill="url(#o93)"/><rect x="1310" y="410" width="445" height="3.6" fill="url(#o94)"/><rect x="1311" y="413" width="441" height="3.6" fill="url(#o95)"/><rect x="1313" y="416" width="437" height="3.6" fill="url(#o96)"/><rect x="1314" y="419" width="433" height="3.6" fill="url(#o97)"/><rect x="1316" y="422" width="428" height="3.6" fill="url(#o98)"/><rect x="1318" y="425" width="424" height="3.6" fill="url(#o99)"/><rect x="1319" y="428" width="420" height="3.6" fill="url(#o100)"/><rect x="1321" y="431" width="415" height="3.6" fill="url(#o101)"/><rect x="1322" y="434" width="412" height="3.6" fill="url(#o102)"/><rect x="1324" y="437" width="407" height="3.6" fill="url(#o103)"/><rect x="1326" y="440" width="402" height="3.6" fill="url(#o104)"/><rect x="1327" y="443" width="399" height="3.6" fill="url(#o105)"/><rect x="1329" y="446" width="394" height="3.6" fill="url(#o106)"/><rect x="1331" y="449" width="389" height="3.6" fill="url(#o107)"/><rect x="1332" y="452" width="386" height="3.6" fill="url(#o108)"/><rect x="1334" y="455" width="381" height="3.6" fill="url(#o109)"/><rect x="1336" y="458" width="376" height="3.6" fill="url(#o110)"/><rect x="1337" y="461" width="373" height="3.6" fill="url(#o111)"/><rect x="1339" y="464" width="368" height="3.6" fill="url(#o112)"/><rect x="1341" y="467" width="363" height="3.6" fill="url(#o113)"/><rect x="1343" y="470" width="359" height="3.6" fill="url(#o114)"/><rect x="1344" y="473" width="355" height="3.6" fill="url(#o115)"/><rect x="1346" y="476" width="350" height="3.6" fill="url(#o116)"/><rect x="1348" y="479" width="346" height="3.6" fill="url(#o117)"/><rect x="1350" y="482" width="341" height="3.6" fill="url(#o118)"/><rect x="1351" y="485" width="337" height="3.6" fill="url(#o119)"/><rect x="1353" y="488" width="333" height="3.6" fill="url(#o120)"/><rect x="1355" y="491" width="328" height="3.6" fill="url(#o121)"/><rect x="1357" y="494" width="323" height="3.6" fill="url(#o122)"/><rect x="1359" y="497" width="319" height="3.6" fill="url(#o123)"/><rect x="1361" y="500" width="314" height="3.6" fill="url(#o124)"/><rect x="1362" y="503" width="310" height="3.6" fill="url(#o125)"/><rect x="1364" y="506" width="306" height="3.6" fill="url(#o126)"/><rect x="1366" y="509" width="301" height="3.6" fill="url(#o127)"/><rect x="1368" y="512" width="296" height="3.6" fill="url(#o128)"/><rect x="1370" y="515" width="292" height="3.6" fill="url(#o129)"/><rect x="1372" y="518" width="287" height="3.6" fill="url(#o130)"/><rect x="1374" y="521" width="282" height="3.6" fill="url(#o131)"/><rect x="1376" y="524" width="278" height="3.6" fill="url(#o132)"/><rect x="1378" y="527" width="273" height="3.6" fill="url(#o133)"/><rect x="1380" y="530" width="268" height="3.6" fill="url(#o134)"/><rect x="1382" y="533" width="264" height="3.6" fill="url(#o135)"/><rect x="1384" y="536" width="259" height="3.6" fill="url(#o136)"/><rect x="1386" y="539" width="254" height="3.6" fill="url(#o137)"/><rect x="1388" y="542" width="250" height="3.6" fill="url(#o138)"/><rect x="1390" y="545" width="245" height="3.6" fill="url(#o139)"/><rect x="1393" y="548" width="239" height="3.6" fill="url(#o140)"/><rect x="1395" y="551" width="234" height="3.6" fill="url(#o141)"/><rect x="1397" y="554" width="230" height="3.6" fill="url(#o142)"/><rect x="1399" y="557" width="225" height="3.6" fill="url(#o143)"/><rect x="1401" y="560" width="220" height="3.6" fill="url(#o144)"/><rect x="1404" y="563" width="215" height="3.6" fill="url(#o145)"/><rect x="1406" y="566" width="210" height="3.6" fill="url(#o146)"/><rect x="1408" y="569" width="205" height="3.6" fill="url(#o147)"/><rect x="1411" y="572" width="200" height="3.6" fill="url(#o148)"/><rect x="1413" y="575" width="195" height="3.6" fill="url(#o149)"/><rect x="1416" y="578" width="189" height="3.6" fill="url(#o150)"/><rect x="1418" y="581" width="185" height="3.6" fill="url(#o151)"/><rect x="1420" y="584" width="180" height="3.6" fill="url(#o152)"/><rect x="1423" y="587" width="174" height="3.6" fill="url(#o153)"/><rect x="1426" y="590" width="169" height="3.6" fill="url(#o154)"/><rect x="1428" y="593" width="164" height="3.6" fill="url(#o155)"/><rect x="1431" y="596" width="158" height="3.6" fill="url(#o156)"/><rect x="1434" y="599" width="153" height="3.6" fill="url(#o157)"/><rect x="1437" y="602" width="147" height="3.6" fill="url(#o158)"/><rect x="1440" y="605" width="141" height="3.6" fill="url(#o159)"/><rect x="1443" y="608" width="136" height="3.6" fill="url(#o160)"/><rect x="1446" y="611" width="130" height="3.6" fill="url(#o161)"/><rect x="1449" y="614" width="124" height="3.6" fill="url(#o162)"/><rect x="1452" y="617" width="119" height="3.6" fill="url(#o163)"/><rect x="1455" y="620" width="113" height="3.6" fill="url(#o164)"/><rect x="1458" y="623" width="107" height="3.6" fill="url(#o165)"/><rect x="1461" y="626" width="102" height="3.6" fill="url(#o166)"/><rect x="1465" y="629" width="95" height="3.6" fill="url(#o167)"/><rect x="1468" y="632" width="89" height="3.6" fill="url(#o168)"/><rect x="1471" y="635" width="84" height="3.6" fill="url(#o169)"/><rect x="1475" y="638" width="77" height="3.6" fill="url(#o170)"/><rect x="1478" y="641" width="71" height="3.6" fill="url(#o171)"/><rect x="1481" y="644" width="66" height="3.6" fill="url(#o172)"/><rect x="1485" y="647" width="59" height="3.6" fill="url(#o173)"/><rect x="1488" y="650" width="53" height="3.6" fill="url(#o174)"/><rect x="1491" y="653" width="48" height="3.6" fill="url(#o175)"/><rect x="1495" y="656" width="41" height="3.6" fill="url(#o176)"/><rect x="1498" y="659" width="35" height="3.6" fill="url(#o177)"/><rect x="1501" y="662" width="30" height="3.6" fill="url(#o178)"/><rect x="1505" y="665" width="23" height="3.6" fill="url(#o179)"/><rect x="1508" y="668" width="17" height="3.6" fill="url(#o180)"/></g></g><g clip-path="url(#cpTri)"><rect x="1337" y="136" width="15" height="3.6" fill="url(#r0)"/><rect x="1337" y="139" width="42" height="3.6" fill="url(#r1)"/><rect x="1337" y="142" width="69" height="3.6" fill="url(#r2)"/><rect x="1338" y="145" width="96" height="3.6" fill="url(#r3)"/><rect x="1339" y="148" width="122" height="3.6" fill="url(#r4)"/><rect x="1339" y="151" width="149" height="3.6" fill="url(#r5)"/><rect x="1340" y="154" width="176" height="3.6" fill="url(#r6)"/><rect x="1341" y="157" width="202" height="3.6" fill="url(#r7)"/><rect x="1341" y="160" width="229" height="3.6" fill="url(#r8)"/><rect x="1342" y="163" width="255" height="3.6" fill="url(#r9)"/><rect x="1343" y="166" width="282" height="3.6" fill="url(#r10)"/><rect x="1343" y="169" width="309" height="3.6" fill="url(#r11)"/><rect x="1344" y="172" width="335" height="3.6" fill="url(#r12)"/><rect x="1345" y="175" width="362" height="3.6" fill="url(#r13)"/><rect x="1345" y="178" width="389" height="3.6" fill="url(#r14)"/><rect x="1346" y="181" width="415" height="3.6" fill="url(#r15)"/><rect x="1347" y="184" width="441" height="3.6" fill="url(#r16)"/><rect x="1347" y="187" width="447" height="3.6" fill="url(#r17)"/><rect x="1348" y="190" width="445" height="3.6" fill="url(#r18)"/><rect x="1349" y="193" width="440" height="3.6" fill="url(#r19)"/><rect x="1349" y="196" width="437" height="3.6" fill="url(#r20)"/><rect x="1350" y="199" width="433" height="3.6" fill="url(#r21)"/><rect x="1350" y="202" width="430" height="3.6" fill="url(#r22)"/><rect x="1351" y="205" width="426" height="3.6" fill="url(#r23)"/><rect x="1352" y="208" width="422" height="3.6" fill="url(#r24)"/><rect x="1352" y="211" width="419" height="3.6" fill="url(#r25)"/><rect x="1353" y="214" width="415" height="3.6" fill="url(#r26)"/><rect x="1354" y="217" width="411" height="3.6" fill="url(#r27)"/><rect x="1354" y="220" width="407" height="3.6" fill="url(#r28)"/><rect x="1355" y="223" width="403" height="3.6" fill="url(#r29)"/><rect x="1356" y="226" width="399" height="3.6" fill="url(#r30)"/><rect x="1356" y="229" width="396" height="3.6" fill="url(#r31)"/><rect x="1357" y="232" width="392" height="3.6" fill="url(#r32)"/><rect x="1358" y="235" width="388" height="3.6" fill="url(#r33)"/><rect x="1358" y="238" width="385" height="3.6" fill="url(#r34)"/><rect x="1359" y="241" width="381" height="3.6" fill="url(#r35)"/><rect x="1360" y="244" width="376" height="3.6" fill="url(#r36)"/><rect x="1360" y="247" width="373" height="3.6" fill="url(#r37)"/><rect x="1361" y="250" width="369" height="3.6" fill="url(#r38)"/><rect x="1362" y="253" width="365" height="3.6" fill="url(#r39)"/><rect x="1362" y="256" width="362" height="3.6" fill="url(#r40)"/><rect x="1363" y="259" width="358" height="3.6" fill="url(#r41)"/><rect x="1364" y="262" width="354" height="3.6" fill="url(#r42)"/><rect x="1364" y="265" width="351" height="3.6" fill="url(#r43)"/><rect x="1365" y="268" width="347" height="3.6" fill="url(#r44)"/><rect x="1366" y="271" width="342" height="3.6" fill="url(#r45)"/><rect x="1366" y="274" width="339" height="3.6" fill="url(#r46)"/><rect x="1367" y="277" width="335" height="3.6" fill="url(#r47)"/><rect x="1367" y="280" width="332" height="3.6" fill="url(#r48)"/><rect x="1368" y="283" width="328" height="3.6" fill="url(#r49)"/><rect x="1369" y="286" width="324" height="3.6" fill="url(#r50)"/><rect x="1369" y="289" width="321" height="3.6" fill="url(#r51)"/><rect x="1370" y="292" width="317" height="3.6" fill="url(#r52)"/><rect x="1371" y="295" width="312" height="3.6" fill="url(#r53)"/><rect x="1371" y="298" width="309" height="3.6" fill="url(#r54)"/><rect x="1372" y="301" width="305" height="3.6" fill="url(#r55)"/><rect x="1373" y="304" width="301" height="3.6" fill="url(#r56)"/><rect x="1373" y="307" width="298" height="3.6" fill="url(#r57)"/><rect x="1374" y="310" width="294" height="3.6" fill="url(#r58)"/><rect x="1375" y="313" width="290" height="3.6" fill="url(#r59)"/><rect x="1375" y="316" width="287" height="3.6" fill="url(#r60)"/><rect x="1376" y="319" width="282" height="3.6" fill="url(#r61)"/><rect x="1377" y="322" width="278" height="3.6" fill="url(#r62)"/><rect x="1377" y="325" width="275" height="3.6" fill="url(#r63)"/><rect x="1378" y="328" width="271" height="3.6" fill="url(#r64)"/><rect x="1379" y="331" width="267" height="3.6" fill="url(#r65)"/><rect x="1379" y="334" width="264" height="3.6" fill="url(#r66)"/><rect x="1380" y="337" width="260" height="3.6" fill="url(#r67)"/><rect x="1381" y="340" width="256" height="3.6" fill="url(#r68)"/><rect x="1381" y="343" width="253" height="3.6" fill="url(#r69)"/><rect x="1382" y="346" width="248" height="3.6" fill="url(#r70)"/><rect x="1383" y="349" width="244" height="3.6" fill="url(#r71)"/><rect x="1383" y="352" width="241" height="3.6" fill="url(#r72)"/><rect x="1384" y="355" width="237" height="3.6" fill="url(#r73)"/><rect x="1384" y="358" width="234" height="3.6" fill="url(#r74)"/><rect x="1385" y="361" width="230" height="3.6" fill="url(#r75)"/><rect x="1386" y="364" width="226" height="3.6" fill="url(#r76)"/><rect x="1386" y="367" width="223" height="3.6" fill="url(#r77)"/><rect x="1387" y="370" width="218" height="3.6" fill="url(#r78)"/><rect x="1388" y="373" width="214" height="3.6" fill="url(#r79)"/><rect x="1388" y="376" width="211" height="3.6" fill="url(#r80)"/><rect x="1389" y="379" width="207" height="3.6" fill="url(#r81)"/><rect x="1390" y="382" width="203" height="3.6" fill="url(#r82)"/><rect x="1390" y="385" width="200" height="3.6" fill="url(#r83)"/><rect x="1391" y="388" width="196" height="3.6" fill="url(#r84)"/><rect x="1392" y="391" width="192" height="3.6" fill="url(#r85)"/><rect x="1392" y="394" width="188" height="3.6" fill="url(#r86)"/><rect x="1393" y="397" width="184" height="3.6" fill="url(#r87)"/><rect x="1394" y="400" width="180" height="3.6" fill="url(#r88)"/><rect x="1394" y="403" width="177" height="3.6" fill="url(#r89)"/><rect x="1395" y="406" width="173" height="3.6" fill="url(#r90)"/><rect x="1396" y="409" width="169" height="3.6" fill="url(#r91)"/><rect x="1396" y="412" width="166" height="3.6" fill="url(#r92)"/><rect x="1397" y="415" width="162" height="3.6" fill="url(#r93)"/><rect x="1398" y="418" width="158" height="3.6" fill="url(#r94)"/><rect x="1398" y="421" width="154" height="3.6" fill="url(#r95)"/><rect x="1399" y="424" width="150" height="3.6" fill="url(#r96)"/><rect x="1399" y="427" width="147" height="3.6" fill="url(#r97)"/><rect x="1400" y="430" width="143" height="3.6" fill="url(#r98)"/><rect x="1401" y="433" width="139" height="3.6" fill="url(#r99)"/><rect x="1401" y="436" width="136" height="3.6" fill="url(#r100)"/><rect x="1402" y="439" width="132" height="3.6" fill="url(#r101)"/><rect x="1403" y="442" width="128" height="3.6" fill="url(#r102)"/><rect x="1403" y="445" width="124" height="3.6" fill="url(#r103)"/><rect x="1404" y="448" width="120" height="3.6" fill="url(#r104)"/><rect x="1405" y="451" width="116" height="3.6" fill="url(#r105)"/><rect x="1405" y="454" width="113" height="3.6" fill="url(#r106)"/><rect x="1406" y="457" width="109" height="3.6" fill="url(#r107)"/><rect x="1407" y="460" width="105" height="3.6" fill="url(#r108)"/><rect x="1407" y="463" width="102" height="3.6" fill="url(#r109)"/><rect x="1408" y="466" width="98" height="3.6" fill="url(#r110)"/><rect x="1409" y="469" width="93" height="3.6" fill="url(#r111)"/><rect x="1409" y="472" width="90" height="3.6" fill="url(#r112)"/><rect x="1410" y="475" width="86" height="3.6" fill="url(#r113)"/><rect x="1411" y="478" width="82" height="3.6" fill="url(#r114)"/><rect x="1411" y="481" width="79" height="3.6" fill="url(#r115)"/><rect x="1412" y="484" width="75" height="3.6" fill="url(#r116)"/><rect x="1413" y="487" width="71" height="3.6" fill="url(#r117)"/><rect x="1413" y="490" width="68" height="3.6" fill="url(#r118)"/><rect x="1414" y="493" width="64" height="3.6" fill="url(#r119)"/><rect x="1415" y="496" width="59" height="3.6" fill="url(#r120)"/><rect x="1415" y="499" width="56" height="3.6" fill="url(#r121)"/><rect x="1416" y="502" width="52" height="3.6" fill="url(#r122)"/><rect x="1416" y="505" width="49" height="3.6" fill="url(#r123)"/><rect x="1417" y="508" width="45" height="3.6" fill="url(#r124)"/><rect x="1418" y="511" width="41" height="3.6" fill="url(#r125)"/><rect x="1418" y="514" width="38" height="3.6" fill="url(#r126)"/><rect x="1419" y="517" width="34" height="3.6" fill="url(#r127)"/><rect x="1420" y="520" width="29" height="3.6" fill="url(#r128)"/><rect x="1420" y="523" width="26" height="3.6" fill="url(#r129)"/><rect x="1421" y="526" width="22" height="3.6" fill="url(#r130)"/><rect x="1422" y="529" width="18" height="3.6" fill="url(#r131)"/><rect x="1422" y="532" width="15" height="3.6" fill="url(#r132)"/><rect x="1423" y="535" width="11" height="3.6" fill="url(#r133)"/><rect x="1423" y="538" width="9" height="3.6" fill="url(#r134)"/></g><rect x="1334.2" y="130.4" width="14" height="14" fill="none" stroke="#fff" stroke-width="1.7"/><rect x="1454.0" y="143.2" width="14" height="14" fill="none" stroke="#fff" stroke-width="1.7"/><rect x="1429.4" y="160.6" width="14" height="14" fill="none" stroke="#fff" stroke-width="1.7"/><rect x="1390.5" y="171.6" width="14" height="14" fill="none" stroke="#fff" stroke-width="1.7"/><rect x="1426.4" y="187.7" width="14" height="14" fill="none" stroke="#fff" stroke-width="1.7"/><rect x="1481.2" y="159.3" width="14" height="14" fill="none" stroke="#fff" stroke-width="1.7"/><rect x="1510.5" y="165.0" width="14" height="14" fill="none" stroke="#fff" stroke-width="1.7"/><rect x="1560.6" y="169.7" width="14" height="14" fill="none" stroke="#fff" stroke-width="1.7"/><rect x="1566.3" y="172.5" width="14" height="14" fill="none" stroke="#fff" stroke-width="1.7"/><rect x="1554.0" y="184.8" width="14" height="14" fill="none" stroke="#fff" stroke-width="1.7"/><rect x="1539.8" y="178.2" width="14" height="14" fill="none" stroke="#fff" stroke-width="1.7"/><rect x="1526.6" y="178.2" width="14" height="14" fill="none" stroke="#fff" stroke-width="1.7"/><rect x="1504.0" y="187.7" width="14" height="14" fill="none" stroke="#fff" stroke-width="1.7"/><rect x="1485.0" y="199.0" width="14" height="14" fill="none" stroke="#fff" stroke-width="1.7"/><rect x="1484.0" y="213.2" width="14" height="14" fill="none" stroke="#fff" stroke-width="1.7"/><rect x="1504.0" y="207.5" width="14" height="14" fill="none" stroke="#fff" stroke-width="1.7"/><rect x="1528.5" y="196.2" width="14" height="14" fill="none" stroke="#fff" stroke-width="1.7"/><rect x="1576.7" y="220.8" width="14" height="14" fill="none" stroke="#fff" stroke-width="1.7"/><rect x="1398.0" y="228.3" width="14" height="14" fill="none" stroke="#fff" stroke-width="1.7"/><rect x="1358.7" y="249.1" width="14" height="14" fill="none" stroke="#fff" stroke-width="1.7"/><rect x="1376.3" y="287.9" width="14" height="14" fill="none" stroke="#fff" stroke-width="1.7"/><rect x="1419.8" y="280.3" width="14" height="14" fill="none" stroke="#fff" stroke-width="1.7"/><rect x="1441.5" y="285.0" width="14" height="14" fill="none" stroke="#fff" stroke-width="1.7"/><rect x="1549.3" y="277.5" width="14" height="14" fill="none" stroke="#fff" stroke-width="1.7"/><rect x="1479.0" y="307.7" width="14" height="14" fill="none" stroke="#fff" stroke-width="1.7"/><rect x="1421.1" y="345.2" width="14" height="14" fill="none" stroke="#fff" stroke-width="1.7"/><rect x="1424.0" y="408.3" width="14" height="14" fill="none" stroke="#fff" stroke-width="1.7"/><rect x="1589.9" y="367.0" width="14" height="14" fill="none" stroke="#fff" stroke-width="1.7"/><rect x="1421.3" y="529.0" width="14" height="14" fill="none" stroke="#fff" stroke-width="1.7"/><rect x="1783.5" y="179.2" width="14" height="14" fill="none" stroke="#fff" stroke-width="1.7"/><rect x="1654.2" y="203.3" width="14" height="14" fill="none" stroke="#fff" stroke-width="1.7"/><rect x="1445.5" y="235" width="14" height="14" fill="#d8d8d8" fill-opacity="0.3" stroke="#000" stroke-width="2"/><rect x="1447.3" y="236.8" width="10.4" height="10.4" fill="none" stroke="#fff" stroke-width="1"/><ellipse cx="1363.1" cy="148.7" rx="4.5" ry="5.1" fill="#00ee00" stroke="#000" stroke-width="1.3"/><ellipse cx="1465.6" cy="159.7" rx="4.5" ry="5.1" fill="#ffff00" stroke="#000" stroke-width="1.3"/><ellipse cx="1438.1" cy="169.1" rx="4.5" ry="5.1" fill="#a8b050" stroke="#000" stroke-width="1.3"/><ellipse cx="1393.3" cy="179.0" rx="4.5" ry="5.1" fill="#5a7a50" stroke="#000" stroke-width="1.3"/><ellipse cx="1436.6" cy="196.2" rx="4.5" ry="5.1" fill="#5a6a48" stroke="#000" stroke-width="1.3"/><ellipse cx="1497.3" cy="166.3" rx="4.5" ry="5.1" fill="#e0c050" stroke="#000" stroke-width="1.3"/><ellipse cx="1536.4" cy="173.9" rx="4.5" ry="5.1" fill="#d8a040" stroke="#000" stroke-width="1.3"/><ellipse cx="1582.8" cy="180.5" rx="4.5" ry="5.1" fill="#c07838" stroke="#000" stroke-width="1.3"/><ellipse cx="1576.7" cy="183.3" rx="4.5" ry="5.1" fill="#8a5a3a" stroke="#000" stroke-width="1.3"/><ellipse cx="1540.2" cy="190.9" rx="4.5" ry="5.1" fill="#8a6040" stroke="#000" stroke-width="1.3"/><ellipse cx="1546.8" cy="190.9" rx="4.5" ry="5.1" fill="#8a6040" stroke="#000" stroke-width="1.3"/><ellipse cx="1544.0" cy="195.6" rx="4.5" ry="5.1" fill="#d09a78" stroke="#000" stroke-width="1.3"/><ellipse cx="1548.7" cy="197.5" rx="4.5" ry="5.1" fill="#c08868" stroke="#000" stroke-width="1.3"/><ellipse cx="1555.0" cy="202.2" rx="4.5" ry="5.1" fill="#e0a080" stroke="#000" stroke-width="1.3"/><ellipse cx="1534.6" cy="203.2" rx="4.5" ry="5.1" fill="#c89070" stroke="#000" stroke-width="1.3"/><ellipse cx="1526.0" cy="194.7" rx="4.5" ry="5.1" fill="#d09a78" stroke="#000" stroke-width="1.3"/><ellipse cx="1524.5" cy="201.7" rx="4.5" ry="5.1" fill="#c8906c" stroke="#000" stroke-width="1.3"/><ellipse cx="1517.5" cy="204.1" rx="4.5" ry="5.1" fill="#b08060" stroke="#000" stroke-width="1.3"/><ellipse cx="1509.0" cy="211.7" rx="4.5" ry="5.1" fill="#6a4a3a" stroke="#000" stroke-width="1.3"/><ellipse cx="1503.0" cy="205.0" rx="4.5" ry="5.1" fill="#e8b898" stroke="#000" stroke-width="1.3"/><ellipse cx="1500.5" cy="214.5" rx="4.5" ry="5.1" fill="#e8c0a0" stroke="#000" stroke-width="1.3"/><ellipse cx="1500.0" cy="218.3" rx="4.5" ry="5.1" fill="#c09070" stroke="#000" stroke-width="1.3"/><ellipse cx="1598.5" cy="226.2" rx="4.5" ry="5.1" fill="#b06070" stroke="#000" stroke-width="1.3"/><ellipse cx="1396.6" cy="232.5" rx="4.5" ry="5.1" fill="#80b0a0" stroke="#000" stroke-width="1.3"/><ellipse cx="1374.8" cy="255.7" rx="4.5" ry="5.1" fill="#00ffff" stroke="#000" stroke-width="1.3"/><ellipse cx="1382.0" cy="290.5" rx="4.5" ry="5.1" fill="#2080a0" stroke="#000" stroke-width="1.3"/><ellipse cx="1423.6" cy="289.2" rx="4.5" ry="5.1" fill="#6080a8" stroke="#000" stroke-width="1.3"/><ellipse cx="1446.7" cy="294.9" rx="4.5" ry="5.1" fill="#8080b0" stroke="#000" stroke-width="1.3"/><ellipse cx="1560.5" cy="279.4" rx="4.5" ry="5.1" fill="#b060a0" stroke="#000" stroke-width="1.3"/><ellipse cx="1471.2" cy="315.7" rx="4.5" ry="5.1" fill="#604070" stroke="#000" stroke-width="1.3"/><ellipse cx="1423.6" cy="353.6" rx="4.5" ry="5.1" fill="#5060a8" stroke="#000" stroke-width="1.3"/><ellipse cx="1422.4" cy="406.9" rx="4.5" ry="5.1" fill="#404898" stroke="#000" stroke-width="1.3"/><ellipse cx="1578.5" cy="367.7" rx="4.5" ry="5.1" fill="#ff00ff" stroke="#000" stroke-width="1.3"/><ellipse cx="1410.6" cy="548.7" rx="4.5" ry="5.1" fill="#0000ff" stroke="#000" stroke-width="1.3"/><ellipse cx="1742.4" cy="189.4" rx="4.5" ry="5.1" fill="#ff0000" stroke="#000" stroke-width="1.3"/><ellipse cx="1659.4" cy="211.5" rx="4.5" ry="5.1" fill="#a04040" stroke="#000" stroke-width="1.3"/><circle cx="1451" cy="243" r="4.5" fill="#707070" stroke="#222" stroke-width="1.2"/><circle cx="1452.5" cy="241.5" r="4.5" fill="#909090" stroke="#222" stroke-width="1.2"/><circle cx="1454" cy="240" r="4.5" fill="#b0b0b0" stroke="#222" stroke-width="1.2"/><circle cx="1471.2" cy="238.7" r="5" fill="#000"/><rect x="1690.6" y="486" width="211.8" height="153.3" fill="#777"/><rect x="1692.2" y="487.6" width="208.6" height="150.1" fill="url(#gInset)"/><svg x="1692.2" y="487.6" width="208.6" height="150.1" overflow="hidden"><g transform="translate(-1692.2,-487.6)"><rect x="1708.7" y="521.7" width="14" height="14" fill="none" stroke="#fff" stroke-width="1.7"/><rect x="1843.3" y="504.1" width="14" height="14" fill="none" stroke="#fff" stroke-width="1.7"/><rect x="1788.8" y="554.0" width="14" height="14" fill="none" stroke="#fff" stroke-width="1.7"/><rect x="1802.8" y="572.0" width="14" height="14" fill="none" stroke="#fff" stroke-width="1.7"/><rect x="1703.3" y="576.7" width="14" height="14" fill="none" stroke="#fff" stroke-width="1.7"/><rect x="1714.0" y="593.9" width="14" height="14" fill="none" stroke="#fff" stroke-width="1.7"/><rect x="1772.6" y="593.9" width="14" height="14" fill="none" stroke="#fff" stroke-width="1.7"/><ellipse cx="1773.9" cy="546.0" rx="4.6" ry="5.2" fill="#c8906c" stroke="#000" stroke-width="1.3"/><ellipse cx="1867.6" cy="535.2" rx="4.6" ry="5.2" fill="#7a5a40" stroke="#000" stroke-width="1.3"/><ellipse cx="1892.7" cy="541.3" rx="4.6" ry="5.2" fill="#7a5a40" stroke="#000" stroke-width="1.3"/><ellipse cx="1846.0" cy="569.3" rx="4.6" ry="5.2" fill="#c8906c" stroke="#000" stroke-width="1.3"/><ellipse cx="1860.4" cy="583.7" rx="4.6" ry="5.2" fill="#d09a78" stroke="#000" stroke-width="1.3"/><ellipse cx="1870.8" cy="580.0" rx="4.6" ry="5.2" fill="#6a4a30" stroke="#000" stroke-width="1.3"/><ellipse cx="1731.8" cy="583.7" rx="4.6" ry="5.2" fill="#c8906c" stroke="#000" stroke-width="1.3"/><ellipse cx="1756.3" cy="583.7" rx="4.6" ry="5.2" fill="#e0b090" stroke="#000" stroke-width="1.3"/><ellipse cx="1759.9" cy="587.3" rx="4.6" ry="5.2" fill="#c8906c" stroke="#000" stroke-width="1.3"/><ellipse cx="1692.0" cy="587.3" rx="4.6" ry="5.2" fill="#a07050" stroke="#000" stroke-width="1.3"/><ellipse cx="1713.2" cy="604.1" rx="4.6" ry="5.2" fill="#c8906c" stroke="#000" stroke-width="1.3"/><ellipse cx="1763.4" cy="604.1" rx="4.6" ry="5.2" fill="#c8906c" stroke="#000" stroke-width="1.3"/><ellipse cx="1864.7" cy="614.2" rx="4.6" ry="5.2" fill="#f0b898" stroke="#000" stroke-width="1.3"/></g></svg><rect x="1637.80" y="648.30" width="266.40" height="28.70" fill="#2b2b2b" /><text x="1638.50" y="673.40" font-size="23.5" fill="#f0f0f0" textLength="247.00" lengthAdjust="spacingAndGlyphs" >RGB Triplet: 207, 143, 102</text><rect x="1230.0" y="116.5" width="678.6" height="569.5" fill="none" stroke="#a8a8a8" stroke-width="1.4"/><line x1="1223.00" y1="686.00" x2="1230.00" y2="686.00" stroke="#d0d0d0" stroke-width="1.3" /><text x="1223.00" y="691.60" font-size="16" fill="#d8d8d8" text-anchor="end" >0</text><line x1="1230.00" y1="686.00" x2="1230.00" y2="693.00" stroke="#d0d0d0" stroke-width="1.3" /><text x="1230.00" y="711.60" font-size="16" fill="#d8d8d8" text-anchor="middle" >0</text><line x1="1223.00" y1="638.65" x2="1230.00" y2="638.65" stroke="#d0d0d0" stroke-width="1.3" /><text x="1223.00" y="644.25" font-size="16" fill="#d8d8d8" text-anchor="end" >0.05</text><line x1="1286.40" y1="686.00" x2="1286.40" y2="693.00" stroke="#d0d0d0" stroke-width="1.3" /><text x="1286.40" y="711.60" font-size="16" fill="#d8d8d8" text-anchor="middle" >0.05</text><line x1="1223.00" y1="591.30" x2="1230.00" y2="591.30" stroke="#d0d0d0" stroke-width="1.3" /><text x="1223.00" y="596.90" font-size="16" fill="#d8d8d8" text-anchor="end" >0.1</text><line x1="1342.80" y1="686.00" x2="1342.80" y2="693.00" stroke="#d0d0d0" stroke-width="1.3" /><text x="1342.80" y="711.60" font-size="16" fill="#d8d8d8" text-anchor="middle" >0.1</text><line x1="1223.00" y1="543.95" x2="1230.00" y2="543.95" stroke="#d0d0d0" stroke-width="1.3" /><text x="1223.00" y="549.55" font-size="16" fill="#d8d8d8" text-anchor="end" >0.15</text><line x1="1399.20" y1="686.00" x2="1399.20" y2="693.00" stroke="#d0d0d0" stroke-width="1.3" /><text x="1399.20" y="711.60" font-size="16" fill="#d8d8d8" text-anchor="middle" >0.15</text><line x1="1223.00" y1="496.60" x2="1230.00" y2="496.60" stroke="#d0d0d0" stroke-width="1.3" /><text x="1223.00" y="502.20" font-size="16" fill="#d8d8d8" text-anchor="end" >0.2</text><line x1="1455.60" y1="686.00" x2="1455.60" y2="693.00" stroke="#d0d0d0" stroke-width="1.3" /><text x="1455.60" y="711.60" font-size="16" fill="#d8d8d8" text-anchor="middle" >0.2</text><line x1="1223.00" y1="449.25" x2="1230.00" y2="449.25" stroke="#d0d0d0" stroke-width="1.3" /><text x="1223.00" y="454.85" font-size="16" fill="#d8d8d8" text-anchor="end" >0.25</text><line x1="1512.00" y1="686.00" x2="1512.00" y2="693.00" stroke="#d0d0d0" stroke-width="1.3" /><text x="1512.00" y="711.60" font-size="16" fill="#d8d8d8" text-anchor="middle" >0.25</text><line x1="1223.00" y1="401.90" x2="1230.00" y2="401.90" stroke="#d0d0d0" stroke-width="1.3" /><text x="1223.00" y="407.50" font-size="16" fill="#d8d8d8" text-anchor="end" >0.3</text><line x1="1568.40" y1="686.00" x2="1568.40" y2="693.00" stroke="#d0d0d0" stroke-width="1.3" /><text x="1568.40" y="711.60" font-size="16" fill="#d8d8d8" text-anchor="middle" >0.3</text><line x1="1223.00" y1="354.55" x2="1230.00" y2="354.55" stroke="#d0d0d0" stroke-width="1.3" /><text x="1223.00" y="360.15" font-size="16" fill="#d8d8d8" text-anchor="end" >0.35</text><line x1="1624.80" y1="686.00" x2="1624.80" y2="693.00" stroke="#d0d0d0" stroke-width="1.3" /><text x="1624.80" y="711.60" font-size="16" fill="#d8d8d8" text-anchor="middle" >0.35</text><line x1="1223.00" y1="307.20" x2="1230.00" y2="307.20" stroke="#d0d0d0" stroke-width="1.3" /><text x="1223.00" y="312.80" font-size="16" fill="#d8d8d8" text-anchor="end" >0.4</text><line x1="1681.20" y1="686.00" x2="1681.20" y2="693.00" stroke="#d0d0d0" stroke-width="1.3" /><text x="1681.20" y="711.60" font-size="16" fill="#d8d8d8" text-anchor="middle" >0.4</text><line x1="1223.00" y1="259.85" x2="1230.00" y2="259.85" stroke="#d0d0d0" stroke-width="1.3" /><text x="1223.00" y="265.45" font-size="16" fill="#d8d8d8" text-anchor="end" >0.45</text><line x1="1737.60" y1="686.00" x2="1737.60" y2="693.00" stroke="#d0d0d0" stroke-width="1.3" /><text x="1737.60" y="711.60" font-size="16" fill="#d8d8d8" text-anchor="middle" >0.45</text><line x1="1223.00" y1="212.50" x2="1230.00" y2="212.50" stroke="#d0d0d0" stroke-width="1.3" /><text x="1223.00" y="218.10" font-size="16" fill="#d8d8d8" text-anchor="end" >0.5</text><line x1="1794.00" y1="686.00" x2="1794.00" y2="693.00" stroke="#d0d0d0" stroke-width="1.3" /><text x="1794.00" y="711.60" font-size="16" fill="#d8d8d8" text-anchor="middle" >0.5</text><line x1="1223.00" y1="165.15" x2="1230.00" y2="165.15" stroke="#d0d0d0" stroke-width="1.3" /><text x="1223.00" y="170.75" font-size="16" fill="#d8d8d8" text-anchor="end" >0.55</text><line x1="1850.40" y1="686.00" x2="1850.40" y2="693.00" stroke="#d0d0d0" stroke-width="1.3" /><text x="1850.40" y="711.60" font-size="16" fill="#d8d8d8" text-anchor="middle" >0.55</text><svg x="491.1" y="744.9" width="1426.6" height="244.3" overflow="hidden"><g transform="translate(-491.1,-744.9)"><rect x="491.10" y="744.90" width="1426.60" height="28.85" fill="#141414" /><rect x="500.90" y="744.90" width="1426.60" height="15.00" fill="#2e2e2e" /><rect x="491.10" y="744.90" width="9.80" height="28.85" fill="#000" /><rect x="491.10" y="773.75" width="9.80" height="26.90" fill="#1c1c1c" /><rect x="500.90" y="774.25" width="1426.60" height="26.40" fill="#444444" /><rect x="491.10" y="800.65" width="9.80" height="26.90" fill="#232323" /><rect x="500.90" y="801.15" width="1426.60" height="26.40" fill="#7f7f7f" /><rect x="491.10" y="827.55" width="9.80" height="26.90" fill="#1c1c1c" /><rect x="500.90" y="828.05" width="1426.60" height="26.40" fill="#444444" /><rect x="491.10" y="854.45" width="9.80" height="26.90" fill="#232323" /><rect x="500.90" y="854.95" width="1426.60" height="26.40" fill="#7f7f7f" /><rect x="491.10" y="881.35" width="9.80" height="26.90" fill="#1c1c1c" /><rect x="500.90" y="881.85" width="1426.60" height="26.40" fill="#444444" /><rect x="491.10" y="908.25" width="9.80" height="26.90" fill="#232323" /><rect x="500.90" y="908.75" width="1426.60" height="26.40" fill="#7f7f7f" /><rect x="491.10" y="935.15" width="9.80" height="26.90" fill="#1c1c1c" /><rect x="500.90" y="935.65" width="1426.60" height="26.40" fill="#444444" /><rect x="491.10" y="962.05" width="9.80" height="26.90" fill="#232323" /><rect x="500.90" y="962.55" width="1426.60" height="26.40" fill="#7f7f7f" /><text x="585.90" y="764.80" font-size="17" fill="#f0f0f0" textLength="27.59" lengthAdjust="spacingAndGlyphs" >White</text><text x="628.20" y="764.80" font-size="17" fill="#f0f0f0" textLength="38.40" lengthAdjust="spacingAndGlyphs" >Gray 80</text><text x="672.20" y="764.80" font-size="17" fill="#f0f0f0" textLength="38.40" lengthAdjust="spacingAndGlyphs" >Gray 65</text><text x="715.60" y="764.80" font-size="17" fill="#f0f0f0" textLength="38.40" lengthAdjust="spacingAndGlyphs" >Gray 50</text><text x="759.30" y="764.80" font-size="17" fill="#f0f0f0" textLength="38.40" lengthAdjust="spacingAndGlyphs" >Gray 35</text><text x="803.50" y="764.80" font-size="17" fill="#f0f0f0" textLength="26.42" lengthAdjust="spacingAndGlyphs" >Black</text><text x="835.30" y="764.80" font-size="17" fill="#f0f0f0" textLength="46.80" lengthAdjust="spacingAndGlyphs" >Dark Skin</text><text x="887.30" y="764.80" font-size="17" fill="#f0f0f0" textLength="47.41" lengthAdjust="spacingAndGlyphs" >Light Skin</text><text x="940.70" y="764.80" font-size="17" fill="#f0f0f0" textLength="42.60" lengthAdjust="spacingAndGlyphs" >Blue Sky</text><text x="987.40" y="764.80" font-size="17" fill="#f0f0f0" textLength="35.41" lengthAdjust="spacingAndGlyphs" >Foliage</text><text x="1028.20" y="764.80" font-size="17" fill="#f0f0f0" textLength="57.00" lengthAdjust="spacingAndGlyphs" >Blue Flower</text><text x="1092.60" y="764.80" font-size="17" fill="#f0f0f0" textLength="62.41" lengthAdjust="spacingAndGlyphs" >Bluish Green</text><text x="1161.50" y="764.80" font-size="17" fill="#f0f0f0" textLength="36.00" lengthAdjust="spacingAndGlyphs" >Orange</text><text x="1203.70" y="764.80" font-size="17" fill="#f0f0f0" textLength="63.60" lengthAdjust="spacingAndGlyphs" >Purplish Blue</text><text x="1274.30" y="764.80" font-size="17" fill="#f0f0f0" textLength="68.41" lengthAdjust="spacingAndGlyphs" >Moderate Red</text><text x="1350.80" y="764.80" font-size="17" fill="#f0f0f0" textLength="31.21" lengthAdjust="spacingAndGlyphs" >Purple</text><text x="1388.40" y="764.80" font-size="17" fill="#f0f0f0" textLength="63.81" lengthAdjust="spacingAndGlyphs" >Yellow Green</text><text x="1459.30" y="764.80" font-size="17" fill="#f0f0f0" textLength="69.65" lengthAdjust="spacingAndGlyphs" >Orange Yellow</text><text x="1535.50" y="764.80" font-size="17" fill="#f0f0f0" textLength="21.60" lengthAdjust="spacingAndGlyphs" >Blue</text><text x="1571.20" y="764.80" font-size="17" fill="#f0f0f0" textLength="30.00" lengthAdjust="spacingAndGlyphs" >Green</text><text x="1607.20" y="764.80" font-size="17" fill="#f0f0f0" textLength="19.80" lengthAdjust="spacingAndGlyphs" >Red</text><text x="1643.50" y="764.80" font-size="17" fill="#f0f0f0" textLength="30.84" lengthAdjust="spacingAndGlyphs" >Yellow</text><text x="1686.00" y="764.80" font-size="17" fill="#f0f0f0" textLength="42.01" lengthAdjust="spacingAndGlyphs" >Magenta</text><text x="1735.20" y="764.80" font-size="17" fill="#f0f0f0" textLength="25.20" lengthAdjust="spacingAndGlyphs" >Cyan</text><text x="1771.50" y="764.80" font-size="17" fill="#f0f0f0" textLength="50.41" lengthAdjust="spacingAndGlyphs" >100% Red</text><text x="1825.80" y="764.80" font-size="17" fill="#f0f0f0" textLength="60.61" lengthAdjust="spacingAndGlyphs" >100% Green</text><text x="1891.90" y="764.80" font-size="17" fill="#f0f0f0" textLength="52.22" lengthAdjust="spacingAndGlyphs" >100% Blue</text><text x="503.90" y="793.90" font-size="17" fill="#f0f0f0" textLength="41.40" lengthAdjust="spacingAndGlyphs" >x: CIE31</text><text x="585.90" y="793.90" font-size="17" fill="#f0f0f0" textLength="21.01" lengthAdjust="spacingAndGlyphs" >0.31</text><text x="628.20" y="793.90" font-size="17" fill="#f0f0f0" textLength="21.01" lengthAdjust="spacingAndGlyphs" >0.31</text><text x="672.20" y="793.90" font-size="17" fill="#f0f0f0" textLength="21.01" lengthAdjust="spacingAndGlyphs" >0.31</text><text x="715.60" y="793.90" font-size="17" fill="#f0f0f0" textLength="21.01" lengthAdjust="spacingAndGlyphs" >0.31</text><text x="759.30" y="793.90" font-size="17" fill="#f0f0f0" textLength="21.01" lengthAdjust="spacingAndGlyphs" >0.31</text><text x="803.50" y="793.90" font-size="17" fill="#f0f0f0" textLength="21.01" lengthAdjust="spacingAndGlyphs" >0.34</text><text x="835.30" y="793.90" font-size="17" fill="#f0f0f0" textLength="21.01" lengthAdjust="spacingAndGlyphs" >0.40</text><text x="887.30" y="793.90" font-size="17" fill="#f0f0f0" textLength="21.01" lengthAdjust="spacingAndGlyphs" >0.39</text><text x="940.70" y="793.90" font-size="17" fill="#f0f0f0" textLength="21.01" lengthAdjust="spacingAndGlyphs" >0.24</text><text x="987.40" y="793.90" font-size="17" fill="#f0f0f0" textLength="21.01" lengthAdjust="spacingAndGlyphs" >0.34</text><text x="1028.20" y="793.90" font-size="17" fill="#f0f0f0" textLength="21.01" lengthAdjust="spacingAndGlyphs" >0.26</text><text x="1092.60" y="793.90" font-size="17" fill="#f0f0f0" textLength="21.01" lengthAdjust="spacingAndGlyphs" >0.25</text><text x="1161.50" y="793.90" font-size="17" fill="#f0f0f0" textLength="21.01" lengthAdjust="spacingAndGlyphs" >0.53</text><text x="1203.70" y="793.90" font-size="17" fill="#f0f0f0" textLength="21.01" lengthAdjust="spacingAndGlyphs" >0.21</text><text x="1274.30" y="793.90" font-size="17" fill="#f0f0f0" textLength="21.01" lengthAdjust="spacingAndGlyphs" >0.47</text><text x="1350.80" y="793.90" font-size="17" fill="#f0f0f0" textLength="21.01" lengthAdjust="spacingAndGlyphs" >0.27</text><text x="1388.40" y="793.90" font-size="17" fill="#f0f0f0" textLength="21.01" lengthAdjust="spacingAndGlyphs" >0.38</text><text x="1459.30" y="793.90" font-size="17" fill="#f0f0f0" textLength="21.01" lengthAdjust="spacingAndGlyphs" >0.49</text><text x="1535.50" y="793.90" font-size="17" fill="#f0f0f0" textLength="21.01" lengthAdjust="spacingAndGlyphs" >0.18</text><text x="1571.20" y="793.90" font-size="17" fill="#f0f0f0" textLength="21.01" lengthAdjust="spacingAndGlyphs" >0.30</text><text x="1607.20" y="793.90" font-size="17" fill="#f0f0f0" textLength="21.01" lengthAdjust="spacingAndGlyphs" >0.54</text><text x="1643.50" y="793.90" font-size="17" fill="#f0f0f0" textLength="21.01" lengthAdjust="spacingAndGlyphs" >0.46</text><text x="1686.00" y="793.90" font-size="17" fill="#f0f0f0" textLength="21.01" lengthAdjust="spacingAndGlyphs" >0.38</text><text x="1735.20" y="793.90" font-size="17" fill="#f0f0f0" textLength="21.01" lengthAdjust="spacingAndGlyphs" >0.20</text><text x="1771.50" y="793.90" font-size="17" fill="#f0f0f0" textLength="21.01" lengthAdjust="spacingAndGlyphs" >0.64</text><text x="1825.80" y="793.90" font-size="17" fill="#f0f0f0" textLength="21.01" lengthAdjust="spacingAndGlyphs" >0.29</text><text x="1891.90" y="793.90" font-size="17" fill="#f0f0f0" textLength="21.01" lengthAdjust="spacingAndGlyphs" >0.13</text><text x="503.90" y="820.80" font-size="17" fill="#f0f0f0" textLength="41.40" lengthAdjust="spacingAndGlyphs" >y: CIE31</text><text x="585.90" y="820.80" font-size="17" fill="#f0f0f0" textLength="21.01" lengthAdjust="spacingAndGlyphs" >0.33</text><text x="628.20" y="820.80" font-size="17" fill="#f0f0f0" textLength="21.01" lengthAdjust="spacingAndGlyphs" >0.33</text><text x="672.20" y="820.80" font-size="17" fill="#f0f0f0" textLength="21.01" lengthAdjust="spacingAndGlyphs" >0.33</text><text x="715.60" y="820.80" font-size="17" fill="#f0f0f0" textLength="21.01" lengthAdjust="spacingAndGlyphs" >0.33</text><text x="759.30" y="820.80" font-size="17" fill="#f0f0f0" textLength="21.01" lengthAdjust="spacingAndGlyphs" >0.33</text><text x="803.50" y="820.80" font-size="17" fill="#f0f0f0" textLength="21.01" lengthAdjust="spacingAndGlyphs" >0.33</text><text x="835.30" y="820.80" font-size="17" fill="#f0f0f0" textLength="21.01" lengthAdjust="spacingAndGlyphs" >0.36</text><text x="887.30" y="820.80" font-size="17" fill="#f0f0f0" textLength="21.01" lengthAdjust="spacingAndGlyphs" >0.35</text><text x="940.70" y="820.80" font-size="17" fill="#f0f0f0" textLength="21.01" lengthAdjust="spacingAndGlyphs" >0.26</text><text x="987.40" y="820.80" font-size="17" fill="#f0f0f0" textLength="21.01" lengthAdjust="spacingAndGlyphs" >0.43</text><text x="1028.20" y="820.80" font-size="17" fill="#f0f0f0" textLength="21.01" lengthAdjust="spacingAndGlyphs" >0.25</text><text x="1092.60" y="820.80" font-size="17" fill="#f0f0f0" textLength="21.01" lengthAdjust="spacingAndGlyphs" >0.37</text><text x="1161.50" y="820.80" font-size="17" fill="#f0f0f0" textLength="21.01" lengthAdjust="spacingAndGlyphs" >0.40</text><text x="1203.70" y="820.80" font-size="17" fill="#f0f0f0" textLength="21.01" lengthAdjust="spacingAndGlyphs" >0.19</text><text x="1274.30" y="820.80" font-size="17" fill="#f0f0f0" textLength="21.01" lengthAdjust="spacingAndGlyphs" >0.31</text><text x="1350.80" y="820.80" font-size="17" fill="#f0f0f0" textLength="21.01" lengthAdjust="spacingAndGlyphs" >0.22</text><text x="1388.40" y="820.80" font-size="17" fill="#f0f0f0" textLength="21.01" lengthAdjust="spacingAndGlyphs" >0.50</text><text x="1459.30" y="820.80" font-size="17" fill="#f0f0f0" textLength="21.01" lengthAdjust="spacingAndGlyphs" >0.43</text><text x="1535.50" y="820.80" font-size="17" fill="#f0f0f0" textLength="21.01" lengthAdjust="spacingAndGlyphs" >0.14</text><text x="1571.20" y="820.80" font-size="17" fill="#f0f0f0" textLength="21.01" lengthAdjust="spacingAndGlyphs" >0.50</text><text x="1607.20" y="820.80" font-size="17" fill="#f0f0f0" textLength="21.01" lengthAdjust="spacingAndGlyphs" >0.32</text><text x="1643.50" y="820.80" font-size="17" fill="#f0f0f0" textLength="21.01" lengthAdjust="spacingAndGlyphs" >0.47</text><text x="1686.00" y="820.80" font-size="17" fill="#f0f0f0" textLength="21.01" lengthAdjust="spacingAndGlyphs" >0.25</text><text x="1735.20" y="820.80" font-size="17" fill="#f0f0f0" textLength="21.01" lengthAdjust="spacingAndGlyphs" >0.27</text><text x="1771.50" y="820.80" font-size="17" fill="#f0f0f0" textLength="21.01" lengthAdjust="spacingAndGlyphs" >0.33</text><text x="1825.80" y="820.80" font-size="17" fill="#f0f0f0" textLength="21.01" lengthAdjust="spacingAndGlyphs" >0.62</text><text x="1891.90" y="820.80" font-size="17" fill="#f0f0f0" textLength="21.01" lengthAdjust="spacingAndGlyphs" >0.05</text><text x="503.90" y="847.70" font-size="17" fill="#f0f0f0" textLength="7.20" lengthAdjust="spacingAndGlyphs" >Y</text><text x="585.90" y="847.70" font-size="17" fill="#f0f0f0" textLength="33.02" lengthAdjust="spacingAndGlyphs" >372.66</text><text x="628.20" y="847.70" font-size="17" fill="#f0f0f0" textLength="33.02" lengthAdjust="spacingAndGlyphs" >289.75</text><text x="672.20" y="847.70" font-size="17" fill="#f0f0f0" textLength="33.02" lengthAdjust="spacingAndGlyphs" >234.55</text><text x="715.60" y="847.70" font-size="17" fill="#f0f0f0" textLength="33.02" lengthAdjust="spacingAndGlyphs" >179.36</text><text x="759.30" y="847.70" font-size="17" fill="#f0f0f0" textLength="33.02" lengthAdjust="spacingAndGlyphs" >122.60</text><text x="803.50" y="847.70" font-size="17" fill="#f0f0f0" textLength="21.01" lengthAdjust="spacingAndGlyphs" >0.08</text><text x="835.30" y="847.70" font-size="17" fill="#f0f0f0" textLength="27.01" lengthAdjust="spacingAndGlyphs" >37.38</text><text x="887.30" y="847.70" font-size="17" fill="#f0f0f0" textLength="33.02" lengthAdjust="spacingAndGlyphs" >127.90</text><text x="940.70" y="847.70" font-size="17" fill="#f0f0f0" textLength="27.01" lengthAdjust="spacingAndGlyphs" >66.74</text><text x="987.40" y="847.70" font-size="17" fill="#f0f0f0" textLength="27.01" lengthAdjust="spacingAndGlyphs" >47.00</text><text x="1028.20" y="847.70" font-size="17" fill="#f0f0f0" textLength="27.01" lengthAdjust="spacingAndGlyphs" >82.83</text><text x="1092.60" y="847.70" font-size="17" fill="#f0f0f0" textLength="33.02" lengthAdjust="spacingAndGlyphs" >149.66</text><text x="1161.50" y="847.70" font-size="17" fill="#f0f0f0" textLength="33.02" lengthAdjust="spacingAndGlyphs" >108.07</text><text x="1203.70" y="847.70" font-size="17" fill="#f0f0f0" textLength="27.01" lengthAdjust="spacingAndGlyphs" >41.27</text><text x="1274.30" y="847.70" font-size="17" fill="#f0f0f0" textLength="27.01" lengthAdjust="spacingAndGlyphs" >71.59</text><text x="1350.80" y="847.70" font-size="17" fill="#f0f0f0" textLength="27.01" lengthAdjust="spacingAndGlyphs" >23.14</text><text x="1388.40" y="847.70" font-size="17" fill="#f0f0f0" textLength="33.02" lengthAdjust="spacingAndGlyphs" >157.05</text><text x="1459.30" y="847.70" font-size="17" fill="#f0f0f0" textLength="33.02" lengthAdjust="spacingAndGlyphs" >158.63</text><text x="1535.50" y="847.70" font-size="17" fill="#f0f0f0" textLength="27.01" lengthAdjust="spacingAndGlyphs" >22.38</text><text x="1571.20" y="847.70" font-size="17" fill="#f0f0f0" textLength="27.01" lengthAdjust="spacingAndGlyphs" >82.90</text><text x="1607.20" y="847.70" font-size="17" fill="#f0f0f0" textLength="27.01" lengthAdjust="spacingAndGlyphs" >45.68</text><text x="1643.50" y="847.70" font-size="17" fill="#f0f0f0" textLength="33.02" lengthAdjust="spacingAndGlyphs" >222.35</text><text x="1686.00" y="847.70" font-size="17" fill="#f0f0f0" textLength="27.01" lengthAdjust="spacingAndGlyphs" >70.17</text><text x="1735.20" y="847.70" font-size="17" fill="#f0f0f0" textLength="27.01" lengthAdjust="spacingAndGlyphs" >68.20</text><text x="1771.50" y="847.70" font-size="17" fill="#f0f0f0" textLength="27.01" lengthAdjust="spacingAndGlyphs" >88.25</text><text x="1825.80" y="847.70" font-size="17" fill="#f0f0f0" textLength="33.02" lengthAdjust="spacingAndGlyphs" >267.22</text><text x="1891.90" y="847.70" font-size="17" fill="#f0f0f0" textLength="27.01" lengthAdjust="spacingAndGlyphs" >23.98</text><text x="503.90" y="874.60" font-size="17" fill="#f0f0f0" textLength="71.40" lengthAdjust="spacingAndGlyphs" >Target x:CIE31</text><text x="585.90" y="874.60" font-size="17" fill="#f0f0f0" textLength="21.01" lengthAdjust="spacingAndGlyphs" >0.31</text><text x="628.20" y="874.60" font-size="17" fill="#f0f0f0" textLength="21.01" lengthAdjust="spacingAndGlyphs" >0.31</text><text x="672.20" y="874.60" font-size="17" fill="#f0f0f0" textLength="21.01" lengthAdjust="spacingAndGlyphs" >0.31</text><text x="715.60" y="874.60" font-size="17" fill="#f0f0f0" textLength="21.01" lengthAdjust="spacingAndGlyphs" >0.31</text><text x="759.30" y="874.60" font-size="17" fill="#f0f0f0" textLength="21.01" lengthAdjust="spacingAndGlyphs" >0.31</text><text x="803.50" y="874.60" font-size="17" fill="#f0f0f0" textLength="21.01" lengthAdjust="spacingAndGlyphs" >0.31</text><text x="835.30" y="874.60" font-size="17" fill="#f0f0f0" textLength="21.01" lengthAdjust="spacingAndGlyphs" >0.41</text><text x="887.30" y="874.60" font-size="17" fill="#f0f0f0" textLength="21.01" lengthAdjust="spacingAndGlyphs" >0.38</text><text x="940.70" y="874.60" font-size="17" fill="#f0f0f0" textLength="21.01" lengthAdjust="spacingAndGlyphs" >0.25</text><text x="987.40" y="874.60" font-size="17" fill="#f0f0f0" textLength="21.01" lengthAdjust="spacingAndGlyphs" >0.34</text><text x="1028.20" y="874.60" font-size="17" fill="#f0f0f0" textLength="21.01" lengthAdjust="spacingAndGlyphs" >0.27</text><text x="1092.60" y="874.60" font-size="17" fill="#f0f0f0" textLength="21.01" lengthAdjust="spacingAndGlyphs" >0.26</text><text x="1161.50" y="874.60" font-size="17" fill="#f0f0f0" textLength="21.01" lengthAdjust="spacingAndGlyphs" >0.51</text><text x="1203.70" y="874.60" font-size="17" fill="#f0f0f0" textLength="21.01" lengthAdjust="spacingAndGlyphs" >0.21</text><text x="1274.30" y="874.60" font-size="17" fill="#f0f0f0" textLength="21.01" lengthAdjust="spacingAndGlyphs" >0.46</text><text x="1350.80" y="874.60" font-size="17" fill="#f0f0f0" textLength="21.01" lengthAdjust="spacingAndGlyphs" >0.29</text><text x="1388.40" y="874.60" font-size="17" fill="#f0f0f0" textLength="21.01" lengthAdjust="spacingAndGlyphs" >0.38</text><text x="1459.30" y="874.60" font-size="17" fill="#f0f0f0" textLength="21.01" lengthAdjust="spacingAndGlyphs" >0.47</text><text x="1535.50" y="874.60" font-size="17" fill="#f0f0f0" textLength="21.01" lengthAdjust="spacingAndGlyphs" >0.19</text><text x="1571.20" y="874.60" font-size="17" fill="#f0f0f0" textLength="21.01" lengthAdjust="spacingAndGlyphs" >0.31</text><text x="1607.20" y="874.60" font-size="17" fill="#f0f0f0" textLength="21.01" lengthAdjust="spacingAndGlyphs" >0.55</text><text x="1643.50" y="874.60" font-size="17" fill="#f0f0f0" textLength="21.01" lengthAdjust="spacingAndGlyphs" >0.45</text><text x="1686.00" y="874.60" font-size="17" fill="#f0f0f0" textLength="21.01" lengthAdjust="spacingAndGlyphs" >0.37</text><text x="1735.20" y="874.60" font-size="17" fill="#f0f0f0" textLength="21.01" lengthAdjust="spacingAndGlyphs" >0.20</text><text x="1771.50" y="874.60" font-size="17" fill="#f0f0f0" textLength="21.01" lengthAdjust="spacingAndGlyphs" >0.68</text><text x="1825.80" y="874.60" font-size="17" fill="#f0f0f0" textLength="21.01" lengthAdjust="spacingAndGlyphs" >0.27</text><text x="1891.90" y="874.60" font-size="17" fill="#f0f0f0" textLength="21.01" lengthAdjust="spacingAndGlyphs" >0.15</text><text x="503.90" y="901.50" font-size="17" fill="#f0f0f0" textLength="71.40" lengthAdjust="spacingAndGlyphs" >Target y:CIE31</text><text x="585.90" y="901.50" font-size="17" fill="#f0f0f0" textLength="21.01" lengthAdjust="spacingAndGlyphs" >0.33</text><text x="628.20" y="901.50" font-size="17" fill="#f0f0f0" textLength="21.01" lengthAdjust="spacingAndGlyphs" >0.33</text><text x="672.20" y="901.50" font-size="17" fill="#f0f0f0" textLength="21.01" lengthAdjust="spacingAndGlyphs" >0.33</text><text x="715.60" y="901.50" font-size="17" fill="#f0f0f0" textLength="21.01" lengthAdjust="spacingAndGlyphs" >0.33</text><text x="759.30" y="901.50" font-size="17" fill="#f0f0f0" textLength="21.01" lengthAdjust="spacingAndGlyphs" >0.33</text><text x="803.50" y="901.50" font-size="17" fill="#f0f0f0" textLength="21.01" lengthAdjust="spacingAndGlyphs" >0.33</text><text x="835.30" y="901.50" font-size="17" fill="#f0f0f0" textLength="21.01" lengthAdjust="spacingAndGlyphs" >0.36</text><text x="887.30" y="901.50" font-size="17" fill="#f0f0f0" textLength="21.01" lengthAdjust="spacingAndGlyphs" >0.35</text><text x="940.70" y="901.50" font-size="17" fill="#f0f0f0" textLength="21.01" lengthAdjust="spacingAndGlyphs" >0.27</text><text x="987.40" y="901.50" font-size="17" fill="#f0f0f0" textLength="21.01" lengthAdjust="spacingAndGlyphs" >0.43</text><text x="1028.20" y="901.50" font-size="17" fill="#f0f0f0" textLength="21.01" lengthAdjust="spacingAndGlyphs" >0.25</text><text x="1092.60" y="901.50" font-size="17" fill="#f0f0f0" textLength="21.01" lengthAdjust="spacingAndGlyphs" >0.36</text><text x="1161.50" y="901.50" font-size="17" fill="#f0f0f0" textLength="21.01" lengthAdjust="spacingAndGlyphs" >0.41</text><text x="1203.70" y="901.50" font-size="17" fill="#f0f0f0" textLength="21.01" lengthAdjust="spacingAndGlyphs" >0.19</text><text x="1274.30" y="901.50" font-size="17" fill="#f0f0f0" textLength="21.01" lengthAdjust="spacingAndGlyphs" >0.31</text><text x="1350.80" y="901.50" font-size="17" fill="#f0f0f0" textLength="21.01" lengthAdjust="spacingAndGlyphs" >0.22</text><text x="1388.40" y="901.50" font-size="17" fill="#f0f0f0" textLength="21.01" lengthAdjust="spacingAndGlyphs" >0.50</text><text x="1459.30" y="901.50" font-size="17" fill="#f0f0f0" textLength="21.01" lengthAdjust="spacingAndGlyphs" >0.45</text><text x="1535.50" y="901.50" font-size="17" fill="#f0f0f0" textLength="21.01" lengthAdjust="spacingAndGlyphs" >0.13</text><text x="1571.20" y="901.50" font-size="17" fill="#f0f0f0" textLength="21.01" lengthAdjust="spacingAndGlyphs" >0.49</text><text x="1607.20" y="901.50" font-size="17" fill="#f0f0f0" textLength="21.01" lengthAdjust="spacingAndGlyphs" >0.32</text><text x="1643.50" y="901.50" font-size="17" fill="#f0f0f0" textLength="21.01" lengthAdjust="spacingAndGlyphs" >0.48</text><text x="1686.00" y="901.50" font-size="17" fill="#f0f0f0" textLength="21.01" lengthAdjust="spacingAndGlyphs" >0.24</text><text x="1735.20" y="901.50" font-size="17" fill="#f0f0f0" textLength="21.01" lengthAdjust="spacingAndGlyphs" >0.26</text><text x="1771.50" y="901.50" font-size="17" fill="#f0f0f0" textLength="21.01" lengthAdjust="spacingAndGlyphs" >0.32</text><text x="1825.80" y="901.50" font-size="17" fill="#f0f0f0" textLength="21.01" lengthAdjust="spacingAndGlyphs" >0.69</text><text x="1891.90" y="901.50" font-size="17" fill="#f0f0f0" textLength="21.01" lengthAdjust="spacingAndGlyphs" >0.06</text><text x="503.90" y="928.40" font-size="17" fill="#f0f0f0" textLength="40.01" lengthAdjust="spacingAndGlyphs" >Target Y</text><text x="585.90" y="928.40" font-size="17" fill="#f0f0f0" textLength="33.02" lengthAdjust="spacingAndGlyphs" >372.66</text><text x="628.20" y="928.40" font-size="17" fill="#f0f0f0" textLength="33.02" lengthAdjust="spacingAndGlyphs" >297.00</text><text x="672.20" y="928.40" font-size="17" fill="#f0f0f0" textLength="33.02" lengthAdjust="spacingAndGlyphs" >240.60</text><text x="715.60" y="928.40" font-size="17" fill="#f0f0f0" textLength="33.02" lengthAdjust="spacingAndGlyphs" >186.19</text><text x="759.30" y="928.40" font-size="17" fill="#f0f0f0" textLength="33.02" lengthAdjust="spacingAndGlyphs" >130.06</text><text x="803.50" y="928.40" font-size="17" fill="#f0f0f0" textLength="21.01" lengthAdjust="spacingAndGlyphs" >0.08</text><text x="835.30" y="928.40" font-size="17" fill="#f0f0f0" textLength="27.01" lengthAdjust="spacingAndGlyphs" >36.40</text><text x="887.30" y="928.40" font-size="17" fill="#f0f0f0" textLength="33.02" lengthAdjust="spacingAndGlyphs" >129.95</text><text x="940.70" y="928.40" font-size="17" fill="#f0f0f0" textLength="27.01" lengthAdjust="spacingAndGlyphs" >71.23</text><text x="987.40" y="928.40" font-size="17" fill="#f0f0f0" textLength="27.01" lengthAdjust="spacingAndGlyphs" >49.05</text><text x="1028.20" y="928.40" font-size="17" fill="#f0f0f0" textLength="27.01" lengthAdjust="spacingAndGlyphs" >87.65</text><text x="1092.60" y="928.40" font-size="17" fill="#f0f0f0" textLength="33.02" lengthAdjust="spacingAndGlyphs" >157.93</text><text x="1161.50" y="928.40" font-size="17" fill="#f0f0f0" textLength="33.02" lengthAdjust="spacingAndGlyphs" >107.27</text><text x="1203.70" y="928.40" font-size="17" fill="#f0f0f0" textLength="27.01" lengthAdjust="spacingAndGlyphs" >43.69</text><text x="1274.30" y="928.40" font-size="17" fill="#f0f0f0" textLength="27.01" lengthAdjust="spacingAndGlyphs" >69.81</text><text x="1350.80" y="928.40" font-size="17" fill="#f0f0f0" textLength="27.01" lengthAdjust="spacingAndGlyphs" >24.59</text><text x="1388.40" y="928.40" font-size="17" fill="#f0f0f0" textLength="33.02" lengthAdjust="spacingAndGlyphs" >163.12</text><text x="1459.30" y="928.40" font-size="17" fill="#f0f0f0" textLength="33.02" lengthAdjust="spacingAndGlyphs" >163.13</text><text x="1535.50" y="928.40" font-size="17" fill="#f0f0f0" textLength="27.01" lengthAdjust="spacingAndGlyphs" >22.49</text><text x="1571.20" y="928.40" font-size="17" fill="#f0f0f0" textLength="27.01" lengthAdjust="spacingAndGlyphs" >85.81</text><text x="1607.20" y="928.40" font-size="17" fill="#f0f0f0" textLength="27.01" lengthAdjust="spacingAndGlyphs" >42.66</text><text x="1643.50" y="928.40" font-size="17" fill="#f0f0f0" textLength="33.02" lengthAdjust="spacingAndGlyphs" >224.01</text><text x="1686.00" y="928.40" font-size="17" fill="#f0f0f0" textLength="27.01" lengthAdjust="spacingAndGlyphs" >70.12</text><text x="1735.20" y="928.40" font-size="17" fill="#f0f0f0" textLength="27.01" lengthAdjust="spacingAndGlyphs" >70.89</text><text x="1771.50" y="928.40" font-size="17" fill="#f0f0f0" textLength="27.01" lengthAdjust="spacingAndGlyphs" >85.39</text><text x="1825.80" y="928.40" font-size="17" fill="#f0f0f0" textLength="33.02" lengthAdjust="spacingAndGlyphs" >257.81</text><text x="1891.90" y="928.40" font-size="17" fill="#f0f0f0" textLength="27.01" lengthAdjust="spacingAndGlyphs" >29.62</text><text x="503.90" y="955.30" font-size="17" fill="#f0f0f0" textLength="41.42" lengthAdjust="spacingAndGlyphs" >ΔE 2000</text><text x="585.90" y="955.30" font-size="17" fill="#f0f0f0" textLength="21.01" lengthAdjust="spacingAndGlyphs" >0.41</text><text x="628.20" y="955.30" font-size="17" fill="#f0f0f0" textLength="21.01" lengthAdjust="spacingAndGlyphs" >0.64</text><text x="672.20" y="955.30" font-size="17" fill="#f0f0f0" textLength="21.01" lengthAdjust="spacingAndGlyphs" >0.87</text><text x="715.60" y="955.30" font-size="17" fill="#f0f0f0" textLength="21.01" lengthAdjust="spacingAndGlyphs" >0.86</text><text x="759.30" y="955.30" font-size="17" fill="#f0f0f0" textLength="21.01" lengthAdjust="spacingAndGlyphs" >1.47</text><text x="803.50" y="955.30" font-size="17" fill="#f0f0f0" textLength="21.01" lengthAdjust="spacingAndGlyphs" >0.09</text><text x="835.30" y="955.30" font-size="17" fill="#f0f0f0" textLength="21.01" lengthAdjust="spacingAndGlyphs" >0.76</text><text x="887.30" y="955.30" font-size="17" fill="#f0f0f0" textLength="21.01" lengthAdjust="spacingAndGlyphs" >1.84</text><text x="940.70" y="955.30" font-size="17" fill="#f0f0f0" textLength="21.01" lengthAdjust="spacingAndGlyphs" >1.69</text><text x="987.40" y="955.30" font-size="17" fill="#f0f0f0" textLength="21.01" lengthAdjust="spacingAndGlyphs" >1.46</text><text x="1028.20" y="955.30" font-size="17" fill="#f0f0f0" textLength="21.01" lengthAdjust="spacingAndGlyphs" >1.42</text><text x="1092.60" y="955.30" font-size="17" fill="#f0f0f0" textLength="21.01" lengthAdjust="spacingAndGlyphs" >2.70</text><text x="1161.50" y="955.30" font-size="17" fill="#f0f0f0" textLength="21.01" lengthAdjust="spacingAndGlyphs" >2.89</text><text x="1203.70" y="955.30" font-size="17" fill="#f0f0f0" textLength="21.01" lengthAdjust="spacingAndGlyphs" >1.39</text><text x="1274.30" y="955.30" font-size="17" fill="#f0f0f0" textLength="21.01" lengthAdjust="spacingAndGlyphs" >1.59</text><text x="1350.80" y="955.30" font-size="17" fill="#f0f0f0" textLength="21.01" lengthAdjust="spacingAndGlyphs" >3.02</text><text x="1388.40" y="955.30" font-size="17" fill="#f0f0f0" textLength="21.01" lengthAdjust="spacingAndGlyphs" >0.92</text><text x="1459.30" y="955.30" font-size="17" fill="#f0f0f0" textLength="21.01" lengthAdjust="spacingAndGlyphs" >5.23</text><text x="1535.50" y="955.30" font-size="17" fill="#f0f0f0" textLength="21.01" lengthAdjust="spacingAndGlyphs" >2.47</text><text x="1571.20" y="955.30" font-size="17" fill="#f0f0f0" textLength="21.01" lengthAdjust="spacingAndGlyphs" >1.20</text><text x="1607.20" y="955.30" font-size="17" fill="#f0f0f0" textLength="21.01" lengthAdjust="spacingAndGlyphs" >1.34</text><text x="1643.50" y="955.30" font-size="17" fill="#f0f0f0" textLength="21.01" lengthAdjust="spacingAndGlyphs" >2.55</text><text x="1686.00" y="955.30" font-size="17" fill="#f0f0f0" textLength="21.01" lengthAdjust="spacingAndGlyphs" >1.27</text><text x="1735.20" y="955.30" font-size="17" fill="#f0f0f0" textLength="21.01" lengthAdjust="spacingAndGlyphs" >1.69</text><text x="1771.50" y="955.30" font-size="17" fill="#f0f0f0" textLength="21.01" lengthAdjust="spacingAndGlyphs" >6.22</text><text x="1825.80" y="955.30" font-size="17" fill="#f0f0f0" textLength="21.01" lengthAdjust="spacingAndGlyphs" >4.13</text><text x="1891.90" y="955.30" font-size="17" fill="#f0f0f0" textLength="21.01" lengthAdjust="spacingAndGlyphs" >3.53</text><text x="503.90" y="982.20" font-size="17" fill="#f0f0f0" textLength="30.00" lengthAdjust="spacingAndGlyphs" >dEITP</text><text x="585.90" y="982.20" font-size="17" fill="#f0f0f0" textLength="21.01" lengthAdjust="spacingAndGlyphs" >0.47</text><text x="628.20" y="982.20" font-size="17" fill="#f0f0f0" textLength="21.01" lengthAdjust="spacingAndGlyphs" >1.92</text><text x="672.20" y="982.20" font-size="17" fill="#f0f0f0" textLength="21.01" lengthAdjust="spacingAndGlyphs" >1.95</text><text x="715.60" y="982.20" font-size="17" fill="#f0f0f0" textLength="21.01" lengthAdjust="spacingAndGlyphs" >2.81</text><text x="759.30" y="982.20" font-size="17" fill="#f0f0f0" textLength="21.01" lengthAdjust="spacingAndGlyphs" >4.46</text><text x="803.50" y="982.20" font-size="17" fill="#f0f0f0" textLength="21.01" lengthAdjust="spacingAndGlyphs" >3.56</text><text x="835.30" y="982.20" font-size="17" fill="#f0f0f0" textLength="21.01" lengthAdjust="spacingAndGlyphs" >2.27</text><text x="887.30" y="982.20" font-size="17" fill="#f0f0f0" textLength="21.01" lengthAdjust="spacingAndGlyphs" >5.76</text><text x="940.70" y="982.20" font-size="17" fill="#f0f0f0" textLength="21.01" lengthAdjust="spacingAndGlyphs" >5.26</text><text x="987.40" y="982.20" font-size="17" fill="#f0f0f0" textLength="21.01" lengthAdjust="spacingAndGlyphs" >4.25</text><text x="1028.20" y="982.20" font-size="17" fill="#f0f0f0" textLength="21.01" lengthAdjust="spacingAndGlyphs" >4.49</text><text x="1092.60" y="982.20" font-size="17" fill="#f0f0f0" textLength="21.01" lengthAdjust="spacingAndGlyphs" >7.68</text><text x="1161.50" y="982.20" font-size="17" fill="#f0f0f0" textLength="27.01" lengthAdjust="spacingAndGlyphs" >10.47</text><text x="1203.70" y="982.20" font-size="17" fill="#f0f0f0" textLength="21.01" lengthAdjust="spacingAndGlyphs" >5.39</text><text x="1274.30" y="982.20" font-size="17" fill="#f0f0f0" textLength="27.01" lengthAdjust="spacingAndGlyphs" >10.22</text><text x="1350.80" y="982.20" font-size="17" fill="#f0f0f0" textLength="27.01" lengthAdjust="spacingAndGlyphs" >12.86</text><text x="1388.40" y="982.20" font-size="17" fill="#f0f0f0" textLength="21.01" lengthAdjust="spacingAndGlyphs" >2.91</text><text x="1459.30" y="982.20" font-size="17" fill="#f0f0f0" textLength="27.01" lengthAdjust="spacingAndGlyphs" >13.30</text><text x="1535.50" y="982.20" font-size="17" fill="#f0f0f0" textLength="21.01" lengthAdjust="spacingAndGlyphs" >7.74</text><text x="1571.20" y="982.20" font-size="17" fill="#f0f0f0" textLength="21.01" lengthAdjust="spacingAndGlyphs" >4.05</text><text x="1607.20" y="982.20" font-size="17" fill="#f0f0f0" textLength="21.01" lengthAdjust="spacingAndGlyphs" >5.12</text><text x="1643.50" y="982.20" font-size="17" fill="#f0f0f0" textLength="21.01" lengthAdjust="spacingAndGlyphs" >6.26</text><text x="1686.00" y="982.20" font-size="17" fill="#f0f0f0" textLength="21.01" lengthAdjust="spacingAndGlyphs" >4.88</text><text x="1735.20" y="982.20" font-size="17" fill="#f0f0f0" textLength="21.01" lengthAdjust="spacingAndGlyphs" >3.74</text><text x="1771.50" y="982.20" font-size="17" fill="#f0f0f0" textLength="27.01" lengthAdjust="spacingAndGlyphs" >39.79</text><text x="1825.80" y="982.20" font-size="17" fill="#f0f0f0" textLength="27.01" lengthAdjust="spacingAndGlyphs" >29.90</text><text x="1891.90" y="982.20" font-size="17" fill="#f0f0f0" textLength="27.01" lengthAdjust="spacingAndGlyphs" >41.95</text></g></svg><rect x="501.00" y="988.80" width="1419.00" height="17.00" fill="#5e5e5e" /><rect x="502" y="991.5" width="11" height="13" rx="2.5" fill="#6a6a6a" stroke="#777" stroke-width="0.6"/><path d="M510 994.5 L510 1001.5 L505.5 998 Z" fill="#333"/><rect x="515" y="991.8" width="840" height="12.5" rx="6" fill="#464646"/><rect x="150.00" y="1006.00" width="1528.00" height="52.00" fill="#5a5a5a" /><rect x="150.00" y="1006.00" width="1528.00" height="5.00" fill="#2a2a2a" /><svg x="150" y="1006" width="1524" height="52" overflow="hidden"><g transform="translate(-150,-1006)"><path d="M151.1 1047.6 V1014.8 Q151.1 1011.8 154.1 1011.8 H184.8 Q187.8 1011.8 187.8 1014.8 V1047.6 Z" fill="url(#gBtn)"/><rect x="188.10" y="1011.80" width="2.00" height="36.00" fill="#3a3a3a" /><rect x="155.0" y="1015.5" width="29.6" height="17.5" rx="2.2" fill="#ffffff" stroke="#6a6a6a" stroke-width="0.6"/><text x="159.23" y="1045.00" font-size="9.8" fill="#1e1e1e" textLength="20.54" lengthAdjust="spacingAndGlyphs" font-weight="bold" >White</text><path d="M190.1 1047.6 V1014.8 Q190.1 1011.8 193.1 1011.8 H223.8 Q226.8 1011.8 226.8 1014.8 V1047.6 Z" fill="url(#gBtn)"/><rect x="227.10" y="1011.80" width="2.00" height="36.00" fill="#3a3a3a" /><rect x="194.0" y="1015.5" width="29.6" height="17.5" rx="2.2" fill="#e6e6e6" stroke="#6a6a6a" stroke-width="0.6"/><text x="194.21" y="1045.00" font-size="9.8" fill="#1e1e1e" textLength="28.58" lengthAdjust="spacingAndGlyphs" font-weight="bold" >Gray 80</text><path d="M229.1 1047.6 V1014.8 Q229.1 1011.8 232.1 1011.8 H262.8 Q265.8 1011.8 265.8 1014.8 V1047.6 Z" fill="url(#gBtn)"/><rect x="266.10" y="1011.80" width="2.00" height="36.00" fill="#3a3a3a" /><rect x="233.0" y="1015.5" width="29.6" height="17.5" rx="2.2" fill="#d2d2d2" stroke="#6a6a6a" stroke-width="0.6"/><text x="233.21" y="1045.00" font-size="9.8" fill="#1e1e1e" textLength="28.58" lengthAdjust="spacingAndGlyphs" font-weight="bold" >Gray 65</text><path d="M268.1 1047.6 V1014.8 Q268.1 1011.8 271.1 1011.8 H301.8 Q304.8 1011.8 304.8 1014.8 V1047.6 Z" fill="url(#gBtn)"/><rect x="305.10" y="1011.80" width="2.00" height="36.00" fill="#3a3a3a" /><rect x="272.0" y="1015.5" width="29.6" height="17.5" rx="2.2" fill="#b8b8b8" stroke="#6a6a6a" stroke-width="0.6"/><text x="272.21" y="1045.00" font-size="9.8" fill="#1e1e1e" textLength="28.58" lengthAdjust="spacingAndGlyphs" font-weight="bold" >Gray 50</text><path d="M307.1 1047.6 V1014.8 Q307.1 1011.8 310.1 1011.8 H340.8 Q343.8 1011.8 343.8 1014.8 V1047.6 Z" fill="url(#gBtn)"/><rect x="344.10" y="1011.80" width="2.00" height="36.00" fill="#3a3a3a" /><rect x="311.0" y="1015.5" width="29.6" height="17.5" rx="2.2" fill="#9e9e9e" stroke="#6a6a6a" stroke-width="0.6"/><text x="311.21" y="1045.00" font-size="9.8" fill="#1e1e1e" textLength="28.58" lengthAdjust="spacingAndGlyphs" font-weight="bold" >Gray 35</text><path d="M346.1 1047.6 V1014.8 Q346.1 1011.8 349.1 1011.8 H379.8 Q382.8 1011.8 382.8 1014.8 V1047.6 Z" fill="url(#gBtn)"/><rect x="383.10" y="1011.80" width="2.00" height="36.00" fill="#3a3a3a" /><rect x="350.0" y="1015.5" width="29.6" height="17.5" rx="2.2" fill="#000000" stroke="#6a6a6a" stroke-width="0.6"/><text x="354.67" y="1045.00" font-size="9.8" fill="#1e1e1e" textLength="19.66" lengthAdjust="spacingAndGlyphs" font-weight="bold" >Black</text><path d="M385.1 1047.6 V1014.8 Q385.1 1011.8 388.1 1011.8 H418.8 Q421.8 1011.8 421.8 1014.8 V1047.6 Z" fill="url(#gBtn)"/><rect x="422.10" y="1011.80" width="2.00" height="36.00" fill="#3a3a3a" /><rect x="389.0" y="1015.5" width="29.6" height="17.5" rx="2.2" fill="#735244" stroke="#6a6a6a" stroke-width="0.6"/><text x="386.08" y="1045.00" font-size="9.8" fill="#1e1e1e" textLength="34.84" lengthAdjust="spacingAndGlyphs" font-weight="bold" >Dark Skin</text><path d="M424.1 1047.6 V1014.8 Q424.1 1011.8 427.1 1011.8 H457.8 Q460.8 1011.8 460.8 1014.8 V1047.6 Z" fill="url(#gBtn)"/><rect x="461.10" y="1011.80" width="2.00" height="36.00" fill="#3a3a3a" /><rect x="428.0" y="1015.5" width="29.6" height="17.5" rx="2.2" fill="#c29682" stroke="#6a6a6a" stroke-width="0.6"/><text x="424.85" y="1045.00" font-size="9.8" fill="#1e1e1e" textLength="35.29" lengthAdjust="spacingAndGlyphs" font-weight="bold" >Light Skin</text><path d="M463.1 1047.6 V1014.8 Q463.1 1011.8 466.1 1011.8 H496.8 Q499.8 1011.8 499.8 1014.8 V1047.6 Z" fill="url(#gBtn)"/><rect x="500.10" y="1011.80" width="2.00" height="36.00" fill="#3a3a3a" /><rect x="467.0" y="1015.5" width="29.6" height="17.5" rx="2.2" fill="#627a9d" stroke="#6a6a6a" stroke-width="0.6"/><text x="465.64" y="1045.00" font-size="9.8" fill="#1e1e1e" textLength="31.71" lengthAdjust="spacingAndGlyphs" font-weight="bold" >Blue Sky</text><path d="M502.1 1047.6 V1014.8 Q502.1 1011.8 505.1 1011.8 H535.8 Q538.8 1011.8 538.8 1014.8 V1047.6 Z" fill="url(#gBtn)"/><rect x="539.10" y="1011.80" width="2.00" height="36.00" fill="#3a3a3a" /><rect x="506.0" y="1015.5" width="29.6" height="17.5" rx="2.2" fill="#576c43" stroke="#6a6a6a" stroke-width="0.6"/><text x="507.32" y="1045.00" font-size="9.8" fill="#1e1e1e" textLength="26.36" lengthAdjust="spacingAndGlyphs" font-weight="bold" >Foliage</text><path d="M541.1 1047.6 V1014.8 Q541.1 1011.8 544.1 1011.8 H574.8 Q577.8 1011.8 577.8 1014.8 V1047.6 Z" fill="url(#gBtn)"/><rect x="578.10" y="1011.80" width="2.00" height="36.00" fill="#3a3a3a" /><rect x="545.0" y="1015.5" width="29.6" height="9.5" rx="2.2" fill="#8580b1" stroke="#6a6a6a" stroke-width="0.6"/><text x="547.44" y="1035.70" font-size="9.8" fill="#1e1e1e" textLength="16.08" lengthAdjust="spacingAndGlyphs" font-weight="bold" >Blue</text><text x="547.44" y="1045.00" font-size="9.8" fill="#1e1e1e" textLength="24.12" lengthAdjust="spacingAndGlyphs" font-weight="bold" >Flower</text><path d="M580.1 1047.6 V1014.8 Q580.1 1011.8 583.1 1011.8 H613.8 Q616.8 1011.8 616.8 1014.8 V1047.6 Z" fill="url(#gBtn)"/><rect x="617.10" y="1011.80" width="2.00" height="36.00" fill="#3a3a3a" /><rect x="584.0" y="1015.5" width="29.6" height="9.5" rx="2.2" fill="#67bdaa" stroke="#6a6a6a" stroke-width="0.6"/><text x="587.33" y="1035.70" font-size="9.8" fill="#1e1e1e" textLength="21.89" lengthAdjust="spacingAndGlyphs" font-weight="bold" >Bluish</text><text x="587.33" y="1045.00" font-size="9.8" fill="#1e1e1e" textLength="22.33" lengthAdjust="spacingAndGlyphs" font-weight="bold" >Green</text><path d="M619.1 1047.6 V1014.8 Q619.1 1011.8 622.1 1011.8 H652.8 Q655.8 1011.8 655.8 1014.8 V1047.6 Z" fill="url(#gBtn)"/><rect x="656.10" y="1011.80" width="2.00" height="36.00" fill="#3a3a3a" /><rect x="623.0" y="1015.5" width="29.6" height="17.5" rx="2.2" fill="#d67e2c" stroke="#6a6a6a" stroke-width="0.6"/><text x="624.10" y="1045.00" font-size="9.8" fill="#1e1e1e" textLength="26.80" lengthAdjust="spacingAndGlyphs" font-weight="bold" >Orange</text><path d="M658.1 1047.6 V1014.8 Q658.1 1011.8 661.1 1011.8 H691.8 Q694.8 1011.8 694.8 1014.8 V1047.6 Z" fill="url(#gBtn)"/><rect x="695.10" y="1011.80" width="2.00" height="36.00" fill="#3a3a3a" /><rect x="662.0" y="1015.5" width="29.6" height="9.5" rx="2.2" fill="#505ba6" stroke="#6a6a6a" stroke-width="0.6"/><text x="661.98" y="1035.70" font-size="9.8" fill="#1e1e1e" textLength="29.03" lengthAdjust="spacingAndGlyphs" font-weight="bold" >Purplish</text><text x="661.98" y="1045.00" font-size="9.8" fill="#1e1e1e" textLength="16.08" lengthAdjust="spacingAndGlyphs" font-weight="bold" >Blue</text><path d="M697.1 1047.6 V1014.8 Q697.1 1011.8 700.1 1011.8 H730.8 Q733.8 1011.8 733.8 1014.8 V1047.6 Z" fill="url(#gBtn)"/><rect x="734.10" y="1011.80" width="2.00" height="36.00" fill="#3a3a3a" /><rect x="701.0" y="1015.5" width="29.6" height="9.5" rx="2.2" fill="#c15a63" stroke="#6a6a6a" stroke-width="0.6"/><text x="698.52" y="1035.70" font-size="9.8" fill="#1e1e1e" textLength="33.95" lengthAdjust="spacingAndGlyphs" font-weight="bold" >Moderate</text><text x="698.52" y="1045.00" font-size="9.8" fill="#1e1e1e" textLength="14.74" lengthAdjust="spacingAndGlyphs" font-weight="bold" >Red</text><path d="M736.1 1047.6 V1014.8 Q736.1 1011.8 739.1 1011.8 H769.8 Q772.8 1011.8 772.8 1014.8 V1047.6 Z" fill="url(#gBtn)"/><rect x="773.10" y="1011.80" width="2.00" height="36.00" fill="#3a3a3a" /><rect x="740.0" y="1015.5" width="29.6" height="17.5" rx="2.2" fill="#5e3c6c" stroke="#6a6a6a" stroke-width="0.6"/><text x="742.88" y="1045.00" font-size="9.8" fill="#1e1e1e" textLength="23.23" lengthAdjust="spacingAndGlyphs" font-weight="bold" >Purple</text><path d="M775.1 1047.6 V1014.8 Q775.1 1011.8 778.1 1011.8 H808.8 Q811.8 1011.8 811.8 1014.8 V1047.6 Z" fill="url(#gBtn)"/><rect x="812.10" y="1011.80" width="2.00" height="36.00" fill="#3a3a3a" /><rect x="779.0" y="1015.5" width="29.6" height="9.5" rx="2.2" fill="#9dbc40" stroke="#6a6a6a" stroke-width="0.6"/><text x="782.02" y="1035.70" font-size="9.8" fill="#1e1e1e" textLength="22.96" lengthAdjust="spacingAndGlyphs" font-weight="bold" >Yellow</text><text x="782.02" y="1045.00" font-size="9.8" fill="#1e1e1e" textLength="22.33" lengthAdjust="spacingAndGlyphs" font-weight="bold" >Green</text><path d="M814.1 1047.6 V1014.8 Q814.1 1011.8 817.1 1011.8 H847.8 Q850.8 1011.8 850.8 1014.8 V1047.6 Z" fill="url(#gBtn)"/><rect x="851.10" y="1011.80" width="2.00" height="36.00" fill="#3a3a3a" /><rect x="818.0" y="1015.5" width="29.6" height="9.5" rx="2.2" fill="#e0a32e" stroke="#6a6a6a" stroke-width="0.6"/><text x="819.10" y="1035.70" font-size="9.8" fill="#1e1e1e" textLength="26.80" lengthAdjust="spacingAndGlyphs" font-weight="bold" >Orange</text><text x="819.10" y="1045.00" font-size="9.8" fill="#1e1e1e" textLength="22.96" lengthAdjust="spacingAndGlyphs" font-weight="bold" >Yellow</text><path d="M853.1 1047.6 V1014.8 Q853.1 1011.8 856.1 1011.8 H886.8 Q889.8 1011.8 889.8 1014.8 V1047.6 Z" fill="url(#gBtn)"/><rect x="890.10" y="1011.80" width="2.00" height="36.00" fill="#3a3a3a" /><rect x="857.0" y="1015.5" width="29.6" height="17.5" rx="2.2" fill="#383d96" stroke="#6a6a6a" stroke-width="0.6"/><text x="863.46" y="1045.00" font-size="9.8" fill="#1e1e1e" textLength="16.08" lengthAdjust="spacingAndGlyphs" font-weight="bold" >Blue</text><path d="M892.1 1047.6 V1014.8 Q892.1 1011.8 895.1 1011.8 H925.8 Q928.8 1011.8 928.8 1014.8 V1047.6 Z" fill="url(#gBtn)"/><rect x="929.10" y="1011.80" width="2.00" height="36.00" fill="#3a3a3a" /><rect x="896.0" y="1015.5" width="29.6" height="17.5" rx="2.2" fill="#469449" stroke="#6a6a6a" stroke-width="0.6"/><text x="899.33" y="1045.00" font-size="9.8" fill="#1e1e1e" textLength="22.33" lengthAdjust="spacingAndGlyphs" font-weight="bold" >Green</text><path d="M931.1 1047.6 V1014.8 Q931.1 1011.8 934.1 1011.8 H964.8 Q967.8 1011.8 967.8 1014.8 V1047.6 Z" fill="url(#gBtn)"/><rect x="968.10" y="1011.80" width="2.00" height="36.00" fill="#3a3a3a" /><rect x="935.0" y="1015.5" width="29.6" height="17.5" rx="2.2" fill="#af363c" stroke="#6a6a6a" stroke-width="0.6"/><text x="942.13" y="1045.00" font-size="9.8" fill="#1e1e1e" textLength="14.74" lengthAdjust="spacingAndGlyphs" font-weight="bold" >Red</text><path d="M970.1 1047.6 V1014.8 Q970.1 1011.8 973.1 1011.8 H1003.8 Q1006.8 1011.8 1006.8 1014.8 V1047.6 Z" fill="url(#gBtn)"/><rect x="1007.10" y="1011.80" width="2.00" height="36.00" fill="#3a3a3a" /><rect x="974.0" y="1015.5" width="29.6" height="17.5" rx="2.2" fill="#e7c71f" stroke="#6a6a6a" stroke-width="0.6"/><text x="977.02" y="1045.00" font-size="9.8" fill="#1e1e1e" textLength="22.96" lengthAdjust="spacingAndGlyphs" font-weight="bold" >Yellow</text><path d="M1009.1 1047.6 V1014.8 Q1009.1 1011.8 1012.1 1011.8 H1042.8 Q1045.8 1011.8 1045.8 1014.8 V1047.6 Z" fill="url(#gBtn)"/><rect x="1046.10" y="1011.80" width="2.00" height="36.00" fill="#3a3a3a" /><rect x="1013.0" y="1015.5" width="29.6" height="17.5" rx="2.2" fill="#bb5695" stroke="#6a6a6a" stroke-width="0.6"/><text x="1011.86" y="1045.00" font-size="9.8" fill="#1e1e1e" textLength="31.28" lengthAdjust="spacingAndGlyphs" font-weight="bold" >Magenta</text><path d="M1048.1 1047.6 V1014.8 Q1048.1 1011.8 1051.1 1011.8 H1081.8 Q1084.8 1011.8 1084.8 1014.8 V1047.6 Z" fill="url(#gBtn)"/><rect x="1085.10" y="1011.80" width="2.00" height="36.00" fill="#3a3a3a" /><rect x="1052.0" y="1015.5" width="29.6" height="17.5" rx="2.2" fill="#0885a1" stroke="#6a6a6a" stroke-width="0.6"/><text x="1057.12" y="1045.00" font-size="9.8" fill="#1e1e1e" textLength="18.76" lengthAdjust="spacingAndGlyphs" font-weight="bold" >Cyan</text><path d="M1087.1 1047.6 V1014.8 Q1087.1 1011.8 1090.1 1011.8 H1120.8 Q1123.8 1011.8 1123.8 1014.8 V1047.6 Z" fill="url(#gBtn)"/><rect x="1124.10" y="1011.80" width="2.00" height="36.00" fill="#3a3a3a" /><rect x="1091.0" y="1015.5" width="29.6" height="17.5" rx="2.2" fill="#ff0000" stroke="#6a6a6a" stroke-width="0.6"/><text x="1087.70" y="1045.00" font-size="9.8" fill="#1e1e1e" textLength="35.60" lengthAdjust="spacingAndGlyphs" font-weight="bold" >100% Red</text><path d="M1126.1 1047.6 V1014.8 Q1126.1 1011.8 1129.1 1011.8 H1159.8 Q1162.8 1011.8 1162.8 1014.8 V1047.6 Z" fill="url(#gBtn)"/><rect x="1163.10" y="1011.80" width="2.00" height="36.00" fill="#3a3a3a" /><rect x="1130.0" y="1015.5" width="29.6" height="9.5" rx="2.2" fill="#00ff00" stroke="#6a6a6a" stroke-width="0.6"/><text x="1133.33" y="1035.70" font-size="9.8" fill="#1e1e1e" textLength="20.56" lengthAdjust="spacingAndGlyphs" font-weight="bold" >100%</text><text x="1133.33" y="1045.00" font-size="9.8" fill="#1e1e1e" textLength="22.33" lengthAdjust="spacingAndGlyphs" font-weight="bold" >Green</text><path d="M1165.1 1047.6 V1014.8 Q1165.1 1011.8 1168.1 1011.8 H1198.8 Q1201.8 1011.8 1201.8 1014.8 V1047.6 Z" fill="url(#gBtn)"/><rect x="1202.10" y="1011.80" width="2.00" height="36.00" fill="#3a3a3a" /><rect x="1169.0" y="1015.5" width="29.6" height="9.5" rx="2.2" fill="#0000ff" stroke="#6a6a6a" stroke-width="0.6"/><text x="1173.22" y="1035.70" font-size="9.8" fill="#1e1e1e" textLength="20.56" lengthAdjust="spacingAndGlyphs" font-weight="bold" >100%</text><text x="1173.22" y="1045.00" font-size="9.8" fill="#1e1e1e" textLength="16.08" lengthAdjust="spacingAndGlyphs" font-weight="bold" >Blue</text><path d="M1204.1 1047.6 V1014.8 Q1204.1 1011.8 1207.1 1011.8 H1237.8 Q1240.8 1011.8 1240.8 1014.8 V1047.6 Z" fill="url(#gBtn)"/><rect x="1241.10" y="1011.80" width="2.00" height="36.00" fill="#3a3a3a" /><rect x="1208.0" y="1015.5" width="29.6" height="9.5" rx="2.2" fill="#00ffff" stroke="#6a6a6a" stroke-width="0.6"/><text x="1212.22" y="1035.70" font-size="9.8" fill="#1e1e1e" textLength="20.56" lengthAdjust="spacingAndGlyphs" font-weight="bold" >100%</text><text x="1212.22" y="1045.00" font-size="9.8" fill="#1e1e1e" textLength="18.76" lengthAdjust="spacingAndGlyphs" font-weight="bold" >Cyan</text><path d="M1243.1 1047.6 V1014.8 Q1243.1 1011.8 1246.1 1011.8 H1276.8 Q1279.8 1011.8 1279.8 1014.8 V1047.6 Z" fill="url(#gBtn)"/><rect x="1280.10" y="1011.80" width="2.00" height="36.00" fill="#3a3a3a" /><rect x="1247.0" y="1015.5" width="29.6" height="9.5" rx="2.2" fill="#ff00ff" stroke="#6a6a6a" stroke-width="0.6"/><text x="1245.86" y="1035.70" font-size="9.8" fill="#1e1e1e" textLength="20.56" lengthAdjust="spacingAndGlyphs" font-weight="bold" >100%</text><text x="1245.86" y="1045.00" font-size="9.8" fill="#1e1e1e" textLength="31.28" lengthAdjust="spacingAndGlyphs" font-weight="bold" >Magenta</text><path d="M1282.1 1047.6 V1014.8 Q1282.1 1011.8 1285.1 1011.8 H1315.8 Q1318.8 1011.8 1318.8 1014.8 V1047.6 Z" fill="url(#gBtn)"/><rect x="1319.10" y="1011.80" width="2.00" height="36.00" fill="#3a3a3a" /><rect x="1286.0" y="1015.5" width="29.6" height="9.5" rx="2.2" fill="#ffff00" stroke="#6a6a6a" stroke-width="0.6"/><text x="1289.02" y="1035.70" font-size="9.8" fill="#1e1e1e" textLength="20.56" lengthAdjust="spacingAndGlyphs" font-weight="bold" >100%</text><text x="1289.02" y="1045.00" font-size="9.8" fill="#1e1e1e" textLength="22.96" lengthAdjust="spacingAndGlyphs" font-weight="bold" >Yellow</text><path d="M1321.1 1047.6 V1014.8 Q1321.1 1011.8 1324.1 1011.8 H1354.8 Q1357.8 1011.8 1357.8 1014.8 V1047.6 Z" fill="url(#gBtn)"/><rect x="1358.10" y="1011.80" width="2.00" height="36.00" fill="#3a3a3a" /><rect x="1325.0" y="1015.5" width="29.6" height="17.5" rx="2.2" fill="#70452e" stroke="#6a6a6a" stroke-width="0.6"/><text x="1334.59" y="1045.00" font-size="9.8" fill="#1e1e1e" textLength="9.83" lengthAdjust="spacingAndGlyphs" font-weight="bold" >2E</text><path d="M1360.1 1047.6 V1014.8 Q1360.1 1011.8 1363.1 1011.8 H1393.8 Q1396.8 1011.8 1396.8 1014.8 V1047.6 Z" fill="url(#gBtn)"/><rect x="1397.10" y="1011.80" width="2.00" height="36.00" fill="#3a3a3a" /><rect x="1364.0" y="1015.5" width="29.6" height="17.5" rx="2.2" fill="#c48a6a" stroke="#6a6a6a" stroke-width="0.6"/><text x="1373.81" y="1045.00" font-size="9.8" fill="#1e1e1e" textLength="9.38" lengthAdjust="spacingAndGlyphs" font-weight="bold" >2F</text><path d="M1399.1 1047.6 V1014.8 Q1399.1 1011.8 1402.1 1011.8 H1432.8 Q1435.8 1011.8 1435.8 1014.8 V1047.6 Z" fill="url(#gBtn)"/><rect x="1436.10" y="1011.80" width="2.00" height="36.00" fill="#3a3a3a" /><rect x="1403.0" y="1015.5" width="29.6" height="17.5" rx="2.2" fill="#f7cb9c" stroke="#6a6a6a" stroke-width="0.6"/><text x="1412.59" y="1045.00" font-size="9.8" fill="#1e1e1e" textLength="9.83" lengthAdjust="spacingAndGlyphs" font-weight="bold" >2K</text><path d="M1438.1 1047.6 V1014.8 Q1438.1 1011.8 1441.1 1011.8 H1471.8 Q1474.8 1011.8 1474.8 1014.8 V1047.6 Z" fill="url(#gBtn)"/><rect x="1475.10" y="1011.80" width="2.00" height="36.00" fill="#3a3a3a" /><rect x="1442.0" y="1015.5" width="29.6" height="17.5" rx="2.2" fill="#f7c6aa" stroke="#6a6a6a" stroke-width="0.6"/><text x="1451.36" y="1045.00" font-size="9.8" fill="#1e1e1e" textLength="10.27" lengthAdjust="spacingAndGlyphs" font-weight="bold" >5D</text><path d="M1477.1 1047.6 V1014.8 Q1477.1 1011.8 1480.1 1011.8 H1510.8 Q1513.8 1011.8 1513.8 1014.8 V1047.6 Z" fill="url(#gBtn)"/><rect x="1514.10" y="1011.80" width="2.00" height="36.00" fill="#3a3a3a" /><rect x="1481.0" y="1015.5" width="29.6" height="17.5" rx="2.2" fill="#eaa67e" stroke="#6a6a6a" stroke-width="0.6"/><text x="1490.59" y="1045.00" font-size="9.8" fill="#1e1e1e" textLength="9.83" lengthAdjust="spacingAndGlyphs" font-weight="bold" >7E</text><path d="M1516.1 1047.6 V1014.8 Q1516.1 1011.8 1519.1 1011.8 H1549.8 Q1552.8 1011.8 1552.8 1014.8 V1047.6 Z" fill="url(#gBtn)"/><rect x="1553.10" y="1011.80" width="2.00" height="36.00" fill="#3a3a3a" /><rect x="1520.0" y="1015.5" width="29.6" height="17.5" rx="2.2" fill="#c28e60" stroke="#6a6a6a" stroke-width="0.6"/><text x="1529.81" y="1045.00" font-size="9.8" fill="#1e1e1e" textLength="9.38" lengthAdjust="spacingAndGlyphs" font-weight="bold" >7F</text><path d="M1555.1 1047.6 V1014.8 Q1555.1 1011.8 1558.1 1011.8 H1588.8 Q1591.8 1011.8 1591.8 1014.8 V1047.6 Z" fill="url(#gBtn)"/><rect x="1592.10" y="1011.80" width="2.00" height="36.00" fill="#3a3a3a" /><rect x="1559.0" y="1015.5" width="29.6" height="17.5" rx="2.2" fill="#8b5d3b" stroke="#6a6a6a" stroke-width="0.6"/><text x="1568.14" y="1045.00" font-size="9.8" fill="#1e1e1e" textLength="10.72" lengthAdjust="spacingAndGlyphs" font-weight="bold" >7G</text><path d="M1594.1 1047.6 V1014.8 Q1594.1 1011.8 1597.1 1011.8 H1627.8 Q1630.8 1011.8 1630.8 1014.8 V1047.6 Z" fill="url(#gBtn)"/><rect x="1631.10" y="1011.80" width="2.00" height="36.00" fill="#3a3a3a" /><rect x="1598.0" y="1015.5" width="29.6" height="17.5" rx="2.2" fill="#d9a07a" stroke="#6a6a6a" stroke-width="0.6"/><text x="1607.36" y="1045.00" font-size="9.8" fill="#1e1e1e" textLength="10.27" lengthAdjust="spacingAndGlyphs" font-weight="bold" >7H</text><path d="M1633.1 1047.6 V1014.8 Q1633.1 1011.8 1636.1 1011.8 H1666.8 Q1669.8 1011.8 1669.8 1014.8 V1047.6 Z" fill="url(#gBtn)"/><rect x="1670.10" y="1011.80" width="2.00" height="36.00" fill="#3a3a3a" /><rect x="1637.0" y="1015.5" width="29.6" height="17.5" rx="2.2" fill="#b06030" stroke="#6a6a6a" stroke-width="0.6"/></g></svg><rect x="150.00" y="1048.00" width="1528.00" height="10.00" fill="#5a5a5a" /><rect x="151" y="1049" width="7.5" height="7.5" rx="1.5" fill="#777"/><path d="M156.5 1050.3 L156.5 1055.3 L153 1052.8 Z" fill="#333"/><rect x="161" y="1049.2" width="1253" height="7.2" rx="3.6" fill="#444"/><rect x="1669" y="1049" width="7.5" height="7.5" rx="1.5" fill="#777"/><path d="M1671.5 1050.3 L1671.5 1055.3 L1675 1052.8 Z" fill="#333"/><rect x="1678.00" y="989.00" width="242.00" height="69.00" fill="#5e5e5e" /><rect x="1907.4" y="991.3" width="9.6" height="14.3" rx="2" fill="#777"/><path d="M1910.5 994.5 L1910.5 1002.5 L1915 998.5 Z" fill="#333"/><rect x="1714.50" y="1006.20" width="35.30" height="27.50" fill="#6e6e6e" /><line x1="1714.50" y1="1006.20" x2="1714.50" y2="1033.70" stroke="#3a3a3a" stroke-width="1" /><circle cx="1732.2" cy="1024" r="7" fill="#6e6e6e" stroke="#888" stroke-opacity="0.35" stroke-width="1"/><rect x="1749.80" y="1006.20" width="33.60" height="27.50" fill="#6e6e6e" /><line x1="1749.80" y1="1006.20" x2="1749.80" y2="1033.70" stroke="#3a3a3a" stroke-width="1" /><circle cx="1766.6" cy="1024" r="7" fill="#6e6e6e" stroke="#888" stroke-opacity="0.35" stroke-width="1"/><rect x="1783.40" y="1006.20" width="33.50" height="27.50" fill="#6e6e6e" /><line x1="1783.40" y1="1006.20" x2="1783.40" y2="1033.70" stroke="#3a3a3a" stroke-width="1" /><circle cx="1800.2" cy="1024" r="7" fill="#6e6e6e" stroke="#888" stroke-opacity="0.35" stroke-width="1"/><rect x="1816.90" y="1006.20" width="33.20" height="27.50" fill="#6e6e6e" /><line x1="1816.90" y1="1006.20" x2="1816.90" y2="1033.70" stroke="#3a3a3a" stroke-width="1" /><circle cx="1833.5" cy="1024" r="7" fill="#6e6e6e" stroke="#888" stroke-opacity="0.35" stroke-width="1"/><rect x="1850.10" y="1006.20" width="34.40" height="27.50" fill="#3c3c3c" /><line x1="1850.10" y1="1006.20" x2="1850.10" y2="1033.70" stroke="#3a3a3a" stroke-width="1" /><circle cx="1867.3" cy="1024" r="7" fill="#3c3c3c" stroke="#888" stroke-opacity="0.35" stroke-width="1"/><rect x="1884.50" y="1006.20" width="35.50" height="27.50" fill="#3c3c3c" /><line x1="1884.50" y1="1006.20" x2="1884.50" y2="1033.70" stroke="#3a3a3a" stroke-width="1" /><circle cx="1902.2" cy="1024" r="7" fill="#3c3c3c" stroke="#888" stroke-opacity="0.35" stroke-width="1"/><rect x="1678.00" y="1025.70" width="35.00" height="32.30" fill="url(#gStop)" /><rect x="1684.5" y="1030.5" width="22" height="21.5" rx="3" fill="#a8a8a8" stroke="#111" stroke-width="1.6"/><rect x="1691.00" y="1036.00" width="9.50" height="10.00" fill="#000" /><path d="M1715 1058 V1038.4 Q1715 1035.4 1718 1035.4 H1816 V1058 Z" fill="url(#gNav)"/><path d="M1817.5 1058 V1035.4 H1917 Q1920 1035.4 1920 1038.4 V1058 Z" fill="url(#gNav)"/><line x1="1816.70" y1="1035.40" x2="1816.70" y2="1058.00" stroke="#555" stroke-width="1.2" /><circle cx="1737.3" cy="1045.7" r="7.2" fill="#a0a0a0" stroke="#8a8a8a" stroke-width="1"/><text x="1737.30" y="1050.50" font-size="14" fill="#333" text-anchor="middle" >«</text><circle cx="1897.5" cy="1045.7" r="7.2" fill="#a0a0a0" stroke="#8a8a8a" stroke-width="1"/><text x="1897.50" y="1050.50" font-size="14" fill="#333" text-anchor="middle" >»</text><text x="1757.50" y="1051.70" font-size="17" fill="#333" textLength="37.50" lengthAdjust="spacingAndGlyphs" >Back</text><text x="1837.50" y="1051.70" font-size="17" fill="#333" textLength="38.30" lengthAdjust="spacingAndGlyphs" >Next</text><g opacity="0.7"><path d="M1630.6 996.1 L1668.8 1004.5 L1670.8 1026.6 L1697.1 1031.8 L1656 1044.6 L1632.9 1033.7 Z" fill="none" stroke="#f0f0f0" stroke-width="4.6" stroke-linejoin="round"/><path d="M1630.6 996.1 L1668.8 1004.5 L1670.8 1026.6 L1697.1 1031.8 L1656 1044.6 L1632.9 1033.7 Z" fill="none" stroke="#a0202c" stroke-width="2.4" stroke-linejoin="round"/><path d="M1640 1029.5 L1697 1031.8 L1640 1027.5 Z" fill="#a0202c" stroke="#f0f0f0" stroke-width="1.2" stroke-linejoin="round"/><path d="M1642 1009.5 Q1647 1005.5 1650.5 1011 L1654 1022.5 L1674 996" fill="none" stroke="#f0f0f0" stroke-width="5" stroke-linecap="round" stroke-linejoin="round"/><path d="M1642 1009.5 Q1647 1005.5 1650.5 1011 L1654 1022.5 L1674 996" fill="none" stroke="#2a2a2a" stroke-width="2.6" stroke-linecap="round" stroke-linejoin="round"/><text x="1675.5" y="1025.2" font-size="27" font-weight="bold" fill="#a8202e" stroke="#f4f4f4" stroke-width="2.4" paint-order="stroke" textLength="149" lengthAdjust="spacingAndGlyphs">NOTEBOOK</text><text x="1824.5" y="1025.2" font-size="27" fill="#1e1e1e" stroke="#f0f0f0" stroke-width="2.6" paint-order="stroke" textLength="88" lengthAdjust="spacingAndGlyphs">CHECK</text></g></svg>
</body></html>
